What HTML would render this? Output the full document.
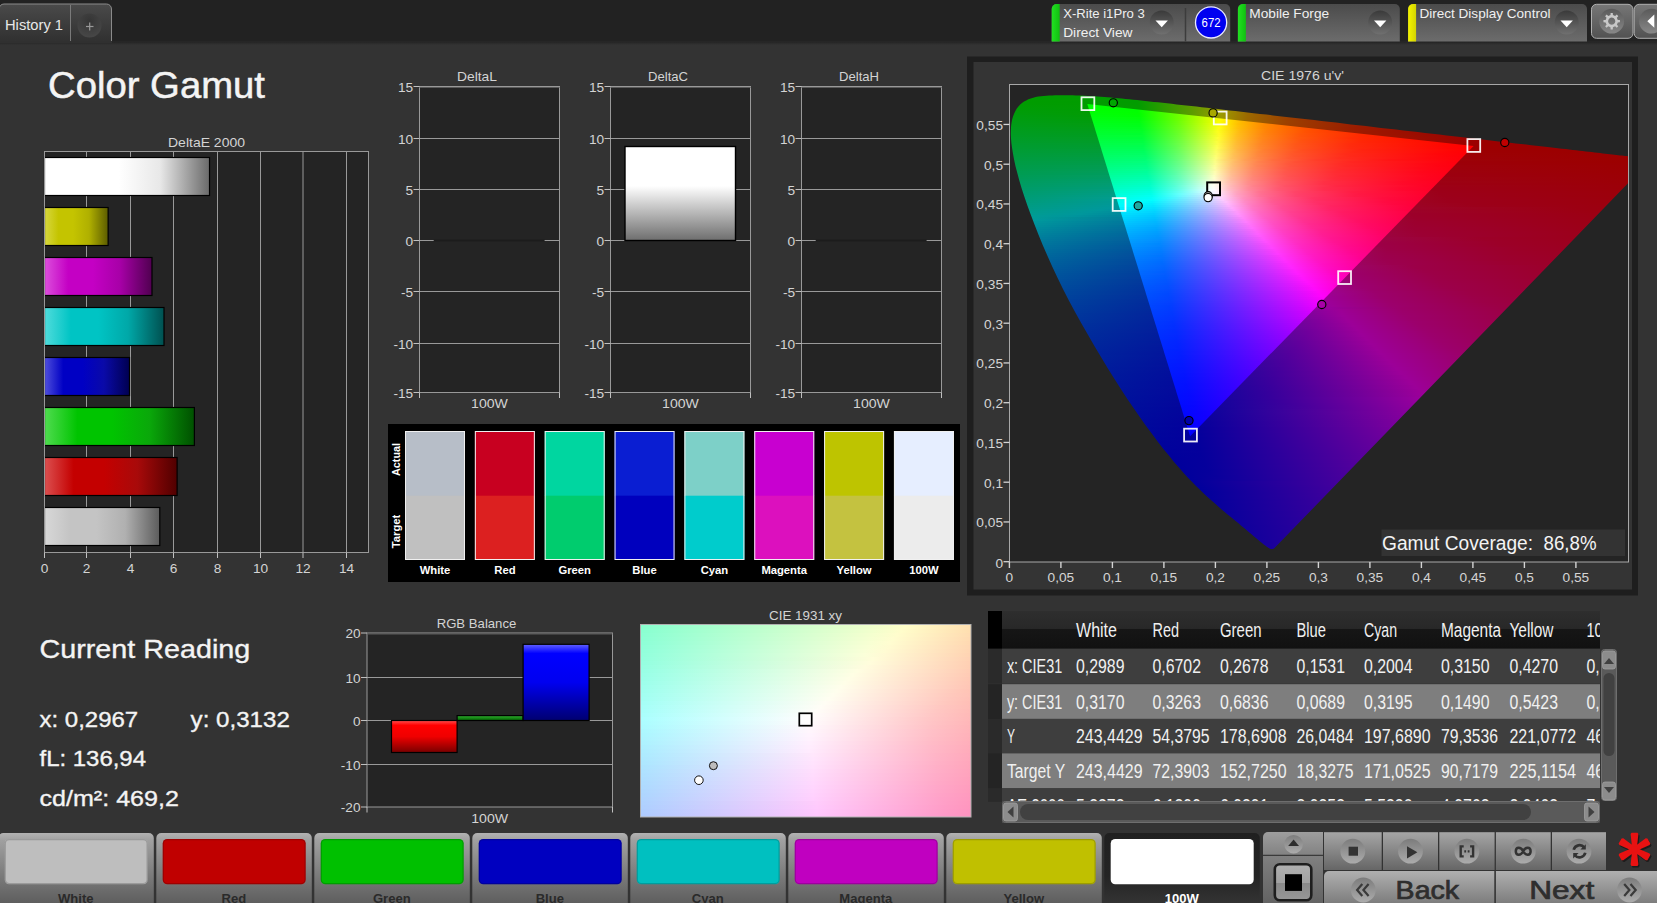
<!DOCTYPE html>
<html><head><meta charset="utf-8"><title>Color Gamut</title>
<style>html,body{margin:0;padding:0;background:#333;overflow:hidden}svg{display:block;font-family:"Liberation Sans",sans-serif}</style>
</head><body>
<svg width="1657" height="903" viewBox="0 0 1657 903">
<defs>
<linearGradient id="shd" x1="0" y1="0" x2="0" y2="1"><stop offset="0" stop-color="#222222"/><stop offset="1" stop-color="#333333"/></linearGradient>
<linearGradient id="tab" x1="0" y1="0" x2="0" y2="1"><stop offset="0" stop-color="#4a4a4a"/><stop offset="1" stop-color="#303030"/></linearGradient>
<radialGradient id="plusc" cx="0.5" cy="0.3" r="0.8"><stop offset="0" stop-color="#353535"/><stop offset="1" stop-color="#4a4a4a"/></radialGradient>
<linearGradient id="tb" x1="0" y1="0" x2="0" y2="1"><stop offset="0" stop-color="#4b4b4b"/><stop offset="1" stop-color="#6c6c6c"/></linearGradient>
<linearGradient id="dd" x1="0" y1="0" x2="0" y2="1"><stop offset="0" stop-color="#3a3a3a"/><stop offset="1" stop-color="#707070"/></linearGradient>
<linearGradient id="gbar" x1="0" y1="0" x2="1" y2="0"><stop offset="0" stop-color="#22e022"/><stop offset="1" stop-color="#10c010"/></linearGradient>
<linearGradient id="ybar" x1="0" y1="0" x2="1" y2="0"><stop offset="0" stop-color="#f4f400"/><stop offset="1" stop-color="#d4d400"/></linearGradient>
<linearGradient id="gb2" x1="0" y1="0" x2="0" y2="1"><stop offset="0" stop-color="#767676"/><stop offset="1" stop-color="#525252"/></linearGradient>
<linearGradient id="gc" x1="0" y1="0" x2="0" y2="1"><stop offset="0" stop-color="#5a5a5a"/><stop offset="1" stop-color="#888888"/></linearGradient>
<linearGradient id="bew" x1="0" y1="0" x2="1" y2="0"><stop offset="0" stop-color="#ffffff"/><stop offset="0.22" stop-color="#ffffff"/><stop offset="0.45" stop-color="#ffffff"/><stop offset="0.7" stop-color="#e8e8e8"/><stop offset="1" stop-color="#6a6a6a"/></linearGradient>
<linearGradient id="bey" x1="0" y1="0" x2="1" y2="0"><stop offset="0" stop-color="#d8d840"/><stop offset="0.22" stop-color="#c4c400"/><stop offset="0.45" stop-color="#c4c400"/><stop offset="0.7" stop-color="#b0b000"/><stop offset="1" stop-color="#5c5c00"/></linearGradient>
<linearGradient id="bem" x1="0" y1="0" x2="1" y2="0"><stop offset="0" stop-color="#dc50dc"/><stop offset="0.22" stop-color="#c400c4"/><stop offset="0.45" stop-color="#c400c4"/><stop offset="0.7" stop-color="#a800a8"/><stop offset="1" stop-color="#500050"/></linearGradient>
<linearGradient id="bec" x1="0" y1="0" x2="1" y2="0"><stop offset="0" stop-color="#50dcdc"/><stop offset="0.22" stop-color="#00c4c4"/><stop offset="0.45" stop-color="#00c4c4"/><stop offset="0.7" stop-color="#00a8a8"/><stop offset="1" stop-color="#005050"/></linearGradient>
<linearGradient id="beb" x1="0" y1="0" x2="1" y2="0"><stop offset="0" stop-color="#5050dc"/><stop offset="0.22" stop-color="#0000c4"/><stop offset="0.45" stop-color="#0000c4"/><stop offset="0.7" stop-color="#0a0aa8"/><stop offset="1" stop-color="#000050"/></linearGradient>
<linearGradient id="beg" x1="0" y1="0" x2="1" y2="0"><stop offset="0" stop-color="#50dc50"/><stop offset="0.22" stop-color="#00c400"/><stop offset="0.45" stop-color="#00c400"/><stop offset="0.7" stop-color="#0aa80a"/><stop offset="1" stop-color="#005000"/></linearGradient>
<linearGradient id="ber" x1="0" y1="0" x2="1" y2="0"><stop offset="0" stop-color="#dc5050"/><stop offset="0.22" stop-color="#c40000"/><stop offset="0.45" stop-color="#c40000"/><stop offset="0.7" stop-color="#a80a0a"/><stop offset="1" stop-color="#500000"/></linearGradient>
<linearGradient id="bes" x1="0" y1="0" x2="1" y2="0"><stop offset="0" stop-color="#d8d8d8"/><stop offset="0.22" stop-color="#c4c4c4"/><stop offset="0.45" stop-color="#c4c4c4"/><stop offset="0.7" stop-color="#b0b0b0"/><stop offset="1" stop-color="#5c5c5c"/></linearGradient>
<linearGradient id="dcb" x1="0" y1="0" x2="0" y2="1"><stop offset="0" stop-color="#ffffff"/><stop offset="0.42" stop-color="#ffffff"/><stop offset="1" stop-color="#6e6e6e"/></linearGradient>
<linearGradient id="a0" gradientUnits="userSpaceOnUse" x1="1035" x2="1105"><stop offset="0" stop-color="#009c00"/><stop offset="1" stop-color="#009c00"/></linearGradient><linearGradient id="a1" gradientUnits="userSpaceOnUse" x1="1028" x2="1127"><stop offset="0" stop-color="#009c00"/><stop offset="1" stop-color="#009c00"/></linearGradient><linearGradient id="a2" gradientUnits="userSpaceOnUse" x1="1024" x2="1147"><stop offset="0" stop-color="#009c00"/><stop offset="0.927" stop-color="#039c00"/><stop offset="1" stop-color="#109c00"/></linearGradient><linearGradient id="a3" gradientUnits="userSpaceOnUse" x1="1021" x2="1166"><stop offset="0" stop-color="#009c00"/><stop offset="0.8" stop-color="#019c00"/><stop offset="1" stop-color="#2e9c00"/></linearGradient><linearGradient id="a4" gradientUnits="userSpaceOnUse" x1="1018" x2="1184"><stop offset="0" stop-color="#009c01"/><stop offset="0.723" stop-color="#029c00"/><stop offset="1" stop-color="#4e9c00"/></linearGradient><linearGradient id="a5" gradientUnits="userSpaceOnUse" x1="1017" x2="1202"><stop offset="0" stop-color="#009c03"/><stop offset="0.659" stop-color="#039c00"/><stop offset="0.941" stop-color="#5b9c00"/><stop offset="1" stop-color="#719c00"/></linearGradient><linearGradient id="a6" gradientUnits="userSpaceOnUse" x1="1015" x2="1219"><stop offset="0" stop-color="#009c05"/><stop offset="0.608" stop-color="#039c00"/><stop offset="0.863" stop-color="#5b9c00"/><stop offset="1" stop-color="#979c00"/></linearGradient><linearGradient id="a7" gradientUnits="userSpaceOnUse" x1="1014" x2="1236"><stop offset="0" stop-color="#009c07"/><stop offset="0.559" stop-color="#019c00"/><stop offset="0.793" stop-color="#599c00"/><stop offset="0.937" stop-color="#9c9800"/><stop offset="1" stop-color="#9c7c00"/></linearGradient><linearGradient id="a8" gradientUnits="userSpaceOnUse" x1="1013" x2="1254"><stop offset="0" stop-color="#009c09"/><stop offset="0.523" stop-color="#029c00"/><stop offset="0.739" stop-color="#5b9c00"/><stop offset="0.863" stop-color="#9c9a00"/><stop offset="0.971" stop-color="#9c6b00"/><stop offset="1" stop-color="#9c6200"/></linearGradient><linearGradient id="a9" gradientUnits="userSpaceOnUse" x1="1012" x2="1271"><stop offset="0" stop-color="#009c0b"/><stop offset="0.494" stop-color="#039c00"/><stop offset="0.695" stop-color="#5d9c00"/><stop offset="0.803" stop-color="#9b9c00"/><stop offset="0.911" stop-color="#9c6900"/><stop offset="1" stop-color="#9c4f00"/></linearGradient><linearGradient id="a10" gradientUnits="userSpaceOnUse" x1="1011" x2="1288"><stop offset="0" stop-color="#009c0e"/><stop offset="0.462" stop-color="#019c02"/><stop offset="0.65" stop-color="#5b9c00"/><stop offset="0.758" stop-color="#9c9900"/><stop offset="0.852" stop-color="#9c6a00"/><stop offset="1" stop-color="#9c4000"/></linearGradient><linearGradient id="a11" gradientUnits="userSpaceOnUse" x1="1011" x2="1306"><stop offset="0" stop-color="#009c10"/><stop offset="0.441" stop-color="#039c04"/><stop offset="0.61" stop-color="#5b9c00"/><stop offset="0.712" stop-color="#9c9900"/><stop offset="0.8" stop-color="#9c6900"/><stop offset="0.942" stop-color="#9c3f00"/><stop offset="1" stop-color="#9c3400"/></linearGradient><linearGradient id="a12" gradientUnits="userSpaceOnUse" x1="1010" x2="1323"><stop offset="0" stop-color="#009c12"/><stop offset="0.415" stop-color="#019c07"/><stop offset="0.575" stop-color="#599c01"/><stop offset="0.671" stop-color="#9c9b00"/><stop offset="0.754" stop-color="#9c6a00"/><stop offset="0.882" stop-color="#9c4100"/><stop offset="1" stop-color="#9c2b00"/></linearGradient><linearGradient id="a13" gradientUnits="userSpaceOnUse" x1="1010" x2="1341"><stop offset="0" stop-color="#009c14"/><stop offset="0.393" stop-color="#019c0a"/><stop offset="0.544" stop-color="#599c04"/><stop offset="0.634" stop-color="#9c9a00"/><stop offset="0.713" stop-color="#9c6a00"/><stop offset="0.834" stop-color="#9c4100"/><stop offset="1" stop-color="#9c2300"/></linearGradient><linearGradient id="a14" gradientUnits="userSpaceOnUse" x1="1010" x2="1358"><stop offset="0" stop-color="#009c16"/><stop offset="0.379" stop-color="#049c0d"/><stop offset="0.523" stop-color="#5d9c07"/><stop offset="0.603" stop-color="#9c9a03"/><stop offset="0.678" stop-color="#9c6900"/><stop offset="0.793" stop-color="#9c4000"/><stop offset="0.994" stop-color="#9c1d00"/><stop offset="1" stop-color="#9c1c00"/></linearGradient><linearGradient id="a15" gradientUnits="userSpaceOnUse" x1="1010" x2="1375"><stop offset="0" stop-color="#009c18"/><stop offset="0.362" stop-color="#039c10"/><stop offset="0.499" stop-color="#5d9c0b"/><stop offset="0.575" stop-color="#9c9907"/><stop offset="0.647" stop-color="#9c6902"/><stop offset="0.756" stop-color="#9c4000"/><stop offset="0.948" stop-color="#9c1d00"/><stop offset="1" stop-color="#9c1700"/></linearGradient><linearGradient id="a16" gradientUnits="userSpaceOnUse" x1="1010" x2="1392"><stop offset="0" stop-color="#009c1b"/><stop offset="0.346" stop-color="#039c13"/><stop offset="0.476" stop-color="#5d9c0e"/><stop offset="0.55" stop-color="#9c990b"/><stop offset="0.618" stop-color="#9c6805"/><stop offset="0.723" stop-color="#9c3f00"/><stop offset="0.906" stop-color="#9c1c00"/><stop offset="1" stop-color="#9c1200"/></linearGradient><linearGradient id="a17" gradientUnits="userSpaceOnUse" x1="1010" x2="1410"><stop offset="0" stop-color="#009c1d"/><stop offset="0.33" stop-color="#029c16"/><stop offset="0.45" stop-color="#599c12"/><stop offset="0.525" stop-color="#9c980e"/><stop offset="0.59" stop-color="#9c6807"/><stop offset="0.69" stop-color="#9c3f02"/><stop offset="0.865" stop-color="#9c1c00"/><stop offset="1" stop-color="#9c0d00"/></linearGradient><linearGradient id="a18" gradientUnits="userSpaceOnUse" x1="1010" x2="1427"><stop offset="0" stop-color="#009c1f"/><stop offset="0.317" stop-color="#029c19"/><stop offset="0.432" stop-color="#599c15"/><stop offset="0.504" stop-color="#9c9812"/><stop offset="0.566" stop-color="#9c670a"/><stop offset="0.662" stop-color="#9c3e04"/><stop offset="0.83" stop-color="#9c1b00"/><stop offset="1" stop-color="#9c0900"/></linearGradient><linearGradient id="a19" gradientUnits="userSpaceOnUse" x1="1010" x2="1444"><stop offset="0" stop-color="#009c21"/><stop offset="0.304" stop-color="#019c1c"/><stop offset="0.415" stop-color="#599c19"/><stop offset="0.479" stop-color="#9b9c16"/><stop offset="0.539" stop-color="#9c690d"/><stop offset="0.631" stop-color="#9c3f06"/><stop offset="0.788" stop-color="#9c1c00"/><stop offset="1" stop-color="#9c0600"/></linearGradient><linearGradient id="a20" gradientUnits="userSpaceOnUse" x1="1010" x2="1462"><stop offset="0" stop-color="#009c23"/><stop offset="0.292" stop-color="#019c1f"/><stop offset="0.398" stop-color="#599c1c"/><stop offset="0.46" stop-color="#9b9c1a"/><stop offset="0.513" stop-color="#9c6c11"/><stop offset="0.597" stop-color="#9c4209"/><stop offset="0.743" stop-color="#9c1e01"/><stop offset="1" stop-color="#9c0300"/></linearGradient><linearGradient id="a21" gradientUnits="userSpaceOnUse" x1="1010" x2="1479"><stop offset="0" stop-color="#009c26"/><stop offset="0.286" stop-color="#039c22"/><stop offset="0.388" stop-color="#5d9c20"/><stop offset="0.443" stop-color="#9c9b1e"/><stop offset="0.495" stop-color="#9c6b14"/><stop offset="0.576" stop-color="#9c410b"/><stop offset="0.716" stop-color="#9c1e03"/><stop offset="0.989" stop-color="#9c0100"/><stop offset="1" stop-color="#9c0000"/></linearGradient><linearGradient id="a22" gradientUnits="userSpaceOnUse" x1="1010" x2="1497"><stop offset="0" stop-color="#009c28"/><stop offset="0.275" stop-color="#039c25"/><stop offset="0.374" stop-color="#5d9c24"/><stop offset="0.427" stop-color="#9c9b22"/><stop offset="0.476" stop-color="#9c6b17"/><stop offset="0.554" stop-color="#9c410d"/><stop offset="0.69" stop-color="#9c1d04"/><stop offset="0.953" stop-color="#9c0100"/><stop offset="1" stop-color="#9c0000"/></linearGradient><linearGradient id="a23" gradientUnits="userSpaceOnUse" x1="1010" x2="1514"><stop offset="0" stop-color="#009c2a"/><stop offset="0.266" stop-color="#029c28"/><stop offset="0.357" stop-color="#599c27"/><stop offset="0.413" stop-color="#9c9a26"/><stop offset="0.46" stop-color="#9c6a1a"/><stop offset="0.536" stop-color="#9c410f"/><stop offset="0.667" stop-color="#9c1d06"/><stop offset="0.921" stop-color="#9c0000"/><stop offset="1" stop-color="#9c0000"/></linearGradient><linearGradient id="a24" gradientUnits="userSpaceOnUse" x1="1010" x2="1531"><stop offset="0" stop-color="#009c2d"/><stop offset="0.257" stop-color="#029c2c"/><stop offset="0.345" stop-color="#599c2b"/><stop offset="0.399" stop-color="#9c9a2a"/><stop offset="0.445" stop-color="#9c6a1d"/><stop offset="0.518" stop-color="#9c4011"/><stop offset="0.645" stop-color="#9c1d07"/><stop offset="0.891" stop-color="#9c0000"/><stop offset="1" stop-color="#9c0000"/></linearGradient><linearGradient id="a25" gradientUnits="userSpaceOnUse" x1="1010" x2="1549"><stop offset="0" stop-color="#009c2f"/><stop offset="0.249" stop-color="#019c2f"/><stop offset="0.334" stop-color="#599c2f"/><stop offset="0.386" stop-color="#9c992e"/><stop offset="0.43" stop-color="#9c6920"/><stop offset="0.501" stop-color="#9c4013"/><stop offset="0.623" stop-color="#9c1c09"/><stop offset="0.861" stop-color="#9c0000"/><stop offset="1" stop-color="#9c0000"/></linearGradient><linearGradient id="a26" gradientUnits="userSpaceOnUse" x1="1010" x2="1566"><stop offset="0" stop-color="#009c31"/><stop offset="0.241" stop-color="#019c32"/><stop offset="0.324" stop-color="#599c33"/><stop offset="0.374" stop-color="#9c9932"/><stop offset="0.417" stop-color="#9c6923"/><stop offset="0.486" stop-color="#9c3f15"/><stop offset="0.604" stop-color="#9c1c0a"/><stop offset="0.831" stop-color="#9c0001"/><stop offset="1" stop-color="#9c0000"/></linearGradient><linearGradient id="a27" gradientUnits="userSpaceOnUse" x1="1011" x2="1583"><stop offset="0" stop-color="#009c34"/><stop offset="0.234" stop-color="#029c36"/><stop offset="0.315" stop-color="#5b9c37"/><stop offset="0.36" stop-color="#9c9b37"/><stop offset="0.402" stop-color="#9c6a26"/><stop offset="0.469" stop-color="#9c3f18"/><stop offset="0.58" stop-color="#9c1d0c"/><stop offset="0.801" stop-color="#9c0002"/><stop offset="1" stop-color="#9c0000"/></linearGradient><linearGradient id="a28" gradientUnits="userSpaceOnUse" x1="1011" x2="1601"><stop offset="0" stop-color="#009c36"/><stop offset="0.227" stop-color="#019c39"/><stop offset="0.305" stop-color="#5b9c3b"/><stop offset="0.349" stop-color="#9c9b3c"/><stop offset="0.39" stop-color="#9c6929"/><stop offset="0.454" stop-color="#9c3f1a"/><stop offset="0.563" stop-color="#9c1c0d"/><stop offset="0.773" stop-color="#9c0003"/><stop offset="1" stop-color="#9c0000"/></linearGradient><linearGradient id="a29" gradientUnits="userSpaceOnUse" x1="1011" x2="1618"><stop offset="0" stop-color="#009c39"/><stop offset="0.221" stop-color="#019c3d"/><stop offset="0.297" stop-color="#5b9c3f"/><stop offset="0.339" stop-color="#9c9a40"/><stop offset="0.376" stop-color="#9c6c2e"/><stop offset="0.435" stop-color="#9c421d"/><stop offset="0.537" stop-color="#9c1e10"/><stop offset="0.735" stop-color="#9c0104"/><stop offset="1" stop-color="#9c0000"/></linearGradient><linearGradient id="a30" gradientUnits="userSpaceOnUse" x1="1012" x2="1628"><stop offset="0" stop-color="#009c3b"/><stop offset="0.218" stop-color="#029c40"/><stop offset="0.289" stop-color="#599c43"/><stop offset="0.331" stop-color="#9b9c45"/><stop offset="0.37" stop-color="#9c6a30"/><stop offset="0.429" stop-color="#9c401f"/><stop offset="0.529" stop-color="#9c1d11"/><stop offset="0.727" stop-color="#9c0105"/><stop offset="1" stop-color="#9c0000"/></linearGradient><linearGradient id="a31" gradientUnits="userSpaceOnUse" x1="1012" x2="1628"><stop offset="0" stop-color="#009c3e"/><stop offset="0.218" stop-color="#019c44"/><stop offset="0.289" stop-color="#599c47"/><stop offset="0.331" stop-color="#9b9c4a"/><stop offset="0.367" stop-color="#9c6c35"/><stop offset="0.425" stop-color="#9c4122"/><stop offset="0.523" stop-color="#9c1e13"/><stop offset="0.714" stop-color="#9c0107"/><stop offset="1" stop-color="#9c0000"/></linearGradient><linearGradient id="a32" gradientUnits="userSpaceOnUse" x1="1012" x2="1628"><stop offset="0" stop-color="#009c40"/><stop offset="0.218" stop-color="#019c47"/><stop offset="0.289" stop-color="#599c4b"/><stop offset="0.331" stop-color="#9c9b4e"/><stop offset="0.367" stop-color="#9c6c38"/><stop offset="0.422" stop-color="#9c4326"/><stop offset="0.519" stop-color="#9c1f15"/><stop offset="0.708" stop-color="#9c0208"/><stop offset="1" stop-color="#9c0000"/></linearGradient><linearGradient id="a33" gradientUnits="userSpaceOnUse" x1="1013" x2="1628"><stop offset="0" stop-color="#009c43"/><stop offset="0.218" stop-color="#029c4b"/><stop offset="0.289" stop-color="#5b9c50"/><stop offset="0.332" stop-color="#9c9851"/><stop offset="0.367" stop-color="#9c693b"/><stop offset="0.426" stop-color="#9c4027"/><stop offset="0.527" stop-color="#9c1c16"/><stop offset="0.722" stop-color="#9c0008"/><stop offset="1" stop-color="#9c0000"/></linearGradient><linearGradient id="a34" gradientUnits="userSpaceOnUse" x1="1013" x2="1628"><stop offset="0" stop-color="#009c45"/><stop offset="0.218" stop-color="#019c4f"/><stop offset="0.289" stop-color="#5b9c54"/><stop offset="0.328" stop-color="#9a9c58"/><stop offset="0.367" stop-color="#9c693e"/><stop offset="0.426" stop-color="#9c3f29"/><stop offset="0.527" stop-color="#9c1c17"/><stop offset="0.722" stop-color="#9c0009"/><stop offset="1" stop-color="#9c0001"/></linearGradient><linearGradient id="a35" gradientUnits="userSpaceOnUse" x1="1014" x2="1628"><stop offset="0" stop-color="#009c48"/><stop offset="0.218" stop-color="#039c53"/><stop offset="0.287" stop-color="#599c58"/><stop offset="0.329" stop-color="#9c9a5c"/><stop offset="0.365" stop-color="#9c6a42"/><stop offset="0.42" stop-color="#9c412d"/><stop offset="0.518" stop-color="#9c1e1a"/><stop offset="0.707" stop-color="#9c010b"/><stop offset="1" stop-color="#9c0002"/></linearGradient><linearGradient id="a36" gradientUnits="userSpaceOnUse" x1="1014" x2="1628"><stop offset="0" stop-color="#009c4a"/><stop offset="0.218" stop-color="#029c56"/><stop offset="0.287" stop-color="#599c5d"/><stop offset="0.329" stop-color="#9c9960"/><stop offset="0.365" stop-color="#9c6946"/><stop offset="0.42" stop-color="#9c412f"/><stop offset="0.518" stop-color="#9c1d1b"/><stop offset="0.707" stop-color="#9c010c"/><stop offset="1" stop-color="#9c0002"/></linearGradient><linearGradient id="a37" gradientUnits="userSpaceOnUse" x1="1015" x2="1628"><stop offset="0" stop-color="#009c4d"/><stop offset="0.219" stop-color="#039c5a"/><stop offset="0.287" stop-color="#5b9c61"/><stop offset="0.326" stop-color="#9c9b67"/><stop offset="0.362" stop-color="#9c6a4a"/><stop offset="0.418" stop-color="#9c4132"/><stop offset="0.512" stop-color="#9c1e1e"/><stop offset="0.698" stop-color="#9c010d"/><stop offset="1" stop-color="#9c0003"/></linearGradient><linearGradient id="a38" gradientUnits="userSpaceOnUse" x1="1015" x2="1628"><stop offset="0" stop-color="#009c50"/><stop offset="0.219" stop-color="#039c5e"/><stop offset="0.287" stop-color="#5b9c66"/><stop offset="0.326" stop-color="#9c9b6b"/><stop offset="0.362" stop-color="#9c6a4e"/><stop offset="0.418" stop-color="#9c4035"/><stop offset="0.512" stop-color="#9c1d1f"/><stop offset="0.698" stop-color="#9c010e"/><stop offset="1" stop-color="#9c0003"/></linearGradient><linearGradient id="a39" gradientUnits="userSpaceOnUse" x1="1016" x2="1628"><stop offset="0" stop-color="#009c52"/><stop offset="0.216" stop-color="#009c62"/><stop offset="0.284" stop-color="#599c6b"/><stop offset="0.324" stop-color="#9a9c71"/><stop offset="0.363" stop-color="#9c6850"/><stop offset="0.418" stop-color="#9c3f36"/><stop offset="0.516" stop-color="#9c1c20"/><stop offset="0.703" stop-color="#9c000f"/><stop offset="1" stop-color="#9c0004"/></linearGradient><linearGradient id="a40" gradientUnits="userSpaceOnUse" x1="1016" x2="1628"><stop offset="0" stop-color="#009c55"/><stop offset="0.219" stop-color="#049c67"/><stop offset="0.288" stop-color="#5e9c70"/><stop offset="0.324" stop-color="#9a9c76"/><stop offset="0.359" stop-color="#9c6a56"/><stop offset="0.415" stop-color="#9c403a"/><stop offset="0.51" stop-color="#9c1d23"/><stop offset="0.696" stop-color="#9c0010"/><stop offset="1" stop-color="#9c0005"/></linearGradient><linearGradient id="a41" gradientUnits="userSpaceOnUse" x1="1017" x2="1628"><stop offset="0" stop-color="#009c58"/><stop offset="0.216" stop-color="#019c6a"/><stop offset="0.285" stop-color="#5b9c74"/><stop offset="0.324" stop-color="#9c997a"/><stop offset="0.357" stop-color="#9c6b5b"/><stop offset="0.409" stop-color="#9c423f"/><stop offset="0.501" stop-color="#9c1f26"/><stop offset="0.678" stop-color="#9c0212"/><stop offset="1" stop-color="#9c0005"/></linearGradient><linearGradient id="a42" gradientUnits="userSpaceOnUse" x1="1017" x2="1628"><stop offset="0" stop-color="#009c5b"/><stop offset="0.216" stop-color="#019c6f"/><stop offset="0.282" stop-color="#569c79"/><stop offset="0.324" stop-color="#9c997f"/><stop offset="0.357" stop-color="#9c6b5e"/><stop offset="0.409" stop-color="#9c4241"/><stop offset="0.501" stop-color="#9c1e28"/><stop offset="0.678" stop-color="#9c0113"/><stop offset="1" stop-color="#9c0006"/></linearGradient><linearGradient id="a43" gradientUnits="userSpaceOnUse" x1="1018" x2="1628"><stop offset="0" stop-color="#009c5e"/><stop offset="0.216" stop-color="#029c73"/><stop offset="0.282" stop-color="#599c7e"/><stop offset="0.321" stop-color="#9c9b86"/><stop offset="0.354" stop-color="#9c6c63"/><stop offset="0.407" stop-color="#9c4244"/><stop offset="0.495" stop-color="#9c1f2b"/><stop offset="0.669" stop-color="#9c0215"/><stop offset="1" stop-color="#9c0006"/></linearGradient><linearGradient id="a44" gradientUnits="userSpaceOnUse" x1="1019" x2="1628"><stop offset="0" stop-color="#009c61"/><stop offset="0.217" stop-color="#039c78"/><stop offset="0.282" stop-color="#5b9c83"/><stop offset="0.319" stop-color="#999c8c"/><stop offset="0.358" stop-color="#9c6663"/><stop offset="0.414" stop-color="#9c3d44"/><stop offset="0.512" stop-color="#9c1a29"/><stop offset="0.693" stop-color="#9c0014"/><stop offset="1" stop-color="#9c0007"/></linearGradient><linearGradient id="a45" gradientUnits="userSpaceOnUse" x1="1019" x2="1628"><stop offset="0" stop-color="#009c63"/><stop offset="0.217" stop-color="#029c7c"/><stop offset="0.282" stop-color="#5b9c89"/><stop offset="0.319" stop-color="#9a9c92"/><stop offset="0.355" stop-color="#9c696a"/><stop offset="0.407" stop-color="#9c4049"/><stop offset="0.499" stop-color="#9c1d2d"/><stop offset="0.677" stop-color="#9c0117"/><stop offset="1" stop-color="#9c0008"/></linearGradient><linearGradient id="a46" gradientUnits="userSpaceOnUse" x1="1020" x2="1626"><stop offset="0" stop-color="#009c67"/><stop offset="0.215" stop-color="#009c80"/><stop offset="0.281" stop-color="#599c8d"/><stop offset="0.32" stop-color="#9c9996"/><stop offset="0.353" stop-color="#9c6a6f"/><stop offset="0.406" stop-color="#9c404c"/><stop offset="0.498" stop-color="#9c1d2f"/><stop offset="0.677" stop-color="#9c0018"/><stop offset="1" stop-color="#9c0008"/></linearGradient><linearGradient id="a47" gradientUnits="userSpaceOnUse" x1="1020" x2="1624"><stop offset="0" stop-color="#009c69"/><stop offset="0.219" stop-color="#039c85"/><stop offset="0.281" stop-color="#599c93"/><stop offset="0.321" stop-color="#9c999b"/><stop offset="0.354" stop-color="#9c6973"/><stop offset="0.407" stop-color="#9c404f"/><stop offset="0.5" stop-color="#9c1c31"/><stop offset="0.679" stop-color="#9c0019"/><stop offset="1" stop-color="#9c0009"/></linearGradient><linearGradient id="a48" gradientUnits="userSpaceOnUse" x1="1021" x2="1622"><stop offset="0" stop-color="#009c6d"/><stop offset="0.216" stop-color="#019c89"/><stop offset="0.28" stop-color="#569c98"/><stop offset="0.323" stop-color="#9a939c"/><stop offset="0.363" stop-color="#9c606f"/><stop offset="0.423" stop-color="#9c374b"/><stop offset="0.526" stop-color="#9c162e"/><stop offset="0.696" stop-color="#9c0019"/><stop offset="1" stop-color="#9c000a"/></linearGradient><linearGradient id="a49" gradientUnits="userSpaceOnUse" x1="1022" x2="1620"><stop offset="0" stop-color="#009c70"/><stop offset="0.217" stop-color="#029c8e"/><stop offset="0.291" stop-color="#66979c"/><stop offset="0.328" stop-color="#9c8c9b"/><stop offset="0.365" stop-color="#9c5e71"/><stop offset="0.425" stop-color="#9c364d"/><stop offset="0.532" stop-color="#9c152e"/><stop offset="0.699" stop-color="#9c001a"/><stop offset="1" stop-color="#9c000b"/></linearGradient><linearGradient id="a50" gradientUnits="userSpaceOnUse" x1="1022" x2="1618"><stop offset="0" stop-color="#009c73"/><stop offset="0.218" stop-color="#019c93"/><stop offset="0.275" stop-color="#4c969c"/><stop offset="0.332" stop-color="#9c869b"/><stop offset="0.372" stop-color="#9c586f"/><stop offset="0.436" stop-color="#9c314b"/><stop offset="0.554" stop-color="#9c102c"/><stop offset="0.708" stop-color="#9c001a"/><stop offset="1" stop-color="#9c000b"/></linearGradient><linearGradient id="a51" gradientUnits="userSpaceOnUse" x1="1023" x2="1616"><stop offset="0" stop-color="#009c76"/><stop offset="0.219" stop-color="#039c98"/><stop offset="0.334" stop-color="#9a819c"/><stop offset="0.381" stop-color="#9c506c"/><stop offset="0.452" stop-color="#9c2a48"/><stop offset="0.583" stop-color="#9c0b29"/><stop offset="0.715" stop-color="#9c001b"/><stop offset="1" stop-color="#9c000c"/></linearGradient><linearGradient id="a52" gradientUnits="userSpaceOnUse" x1="1024" x2="1614"><stop offset="0" stop-color="#009c79"/><stop offset="0.217" stop-color="#009b9c"/><stop offset="0.339" stop-color="#9c7b9b"/><stop offset="0.383" stop-color="#9c4e6e"/><stop offset="0.454" stop-color="#9c2949"/><stop offset="0.586" stop-color="#9c0a2a"/><stop offset="0.715" stop-color="#9c001c"/><stop offset="1" stop-color="#9c000d"/></linearGradient><linearGradient id="a53" gradientUnits="userSpaceOnUse" x1="1024" x2="1612"><stop offset="0" stop-color="#009c7c"/><stop offset="0.207" stop-color="#00989c"/><stop offset="0.221" stop-color="#03959c"/><stop offset="0.344" stop-color="#9c759b"/><stop offset="0.388" stop-color="#9c4b6f"/><stop offset="0.463" stop-color="#9c2649"/><stop offset="0.599" stop-color="#9c092a"/><stop offset="0.721" stop-color="#9c001c"/><stop offset="1" stop-color="#9c000d"/></linearGradient><linearGradient id="a54" gradientUnits="userSpaceOnUse" x1="1025" x2="1610"><stop offset="0" stop-color="#009c80"/><stop offset="0.188" stop-color="#00989c"/><stop offset="0.219" stop-color="#01919c"/><stop offset="0.349" stop-color="#9c6e99"/><stop offset="0.397" stop-color="#9c456c"/><stop offset="0.475" stop-color="#9c2247"/><stop offset="0.622" stop-color="#9c0528"/><stop offset="0.762" stop-color="#9c001a"/><stop offset="1" stop-color="#9c000e"/></linearGradient><linearGradient id="a55" gradientUnits="userSpaceOnUse" x1="1026" x2="1608"><stop offset="0" stop-color="#009c83"/><stop offset="0.168" stop-color="#00989c"/><stop offset="0.22" stop-color="#028c9c"/><stop offset="0.351" stop-color="#9c6c9b"/><stop offset="0.399" stop-color="#9c436e"/><stop offset="0.478" stop-color="#9c2149"/><stop offset="0.622" stop-color="#9c052a"/><stop offset="0.77" stop-color="#9c001b"/><stop offset="1" stop-color="#9c000f"/></linearGradient><linearGradient id="a56" gradientUnits="userSpaceOnUse" x1="1026" x2="1606"><stop offset="0" stop-color="#009c86"/><stop offset="0.148" stop-color="#00989c"/><stop offset="0.221" stop-color="#01889c"/><stop offset="0.355" stop-color="#9c679b"/><stop offset="0.403" stop-color="#9c406f"/><stop offset="0.483" stop-color="#9c1f49"/><stop offset="0.631" stop-color="#9c042a"/><stop offset="0.952" stop-color="#9c0012"/><stop offset="1" stop-color="#9c0010"/></linearGradient><linearGradient id="a57" gradientUnits="userSpaceOnUse" x1="1027" x2="1605"><stop offset="0" stop-color="#009c8a"/><stop offset="0.128" stop-color="#00989c"/><stop offset="0.221" stop-color="#03849c"/><stop offset="0.36" stop-color="#9c6199"/><stop offset="0.408" stop-color="#9c3d6e"/><stop offset="0.491" stop-color="#9c1d49"/><stop offset="0.644" stop-color="#9c022a"/><stop offset="0.976" stop-color="#9c0011"/><stop offset="1" stop-color="#9c0011"/></linearGradient><linearGradient id="a58" gradientUnits="userSpaceOnUse" x1="1028" x2="1603"><stop offset="0" stop-color="#009c8d"/><stop offset="0.108" stop-color="#00979c"/><stop offset="0.223" stop-color="#04809c"/><stop offset="0.362" stop-color="#9c5f9b"/><stop offset="0.41" stop-color="#9c3b70"/><stop offset="0.494" stop-color="#9c1c4a"/><stop offset="0.647" stop-color="#9c022b"/><stop offset="0.977" stop-color="#9c0012"/><stop offset="1" stop-color="#9c0011"/></linearGradient><linearGradient id="a59" gradientUnits="userSpaceOnUse" x1="1029" x2="1601"><stop offset="0" stop-color="#009c91"/><stop offset="0.091" stop-color="#00979c"/><stop offset="0.22" stop-color="#017d9c"/><stop offset="0.367" stop-color="#9c5999"/><stop offset="0.42" stop-color="#9c366e"/><stop offset="0.507" stop-color="#9c1848"/><stop offset="0.668" stop-color="#9c002a"/><stop offset="1" stop-color="#9c0012"/></linearGradient><linearGradient id="a60" gradientUnits="userSpaceOnUse" x1="1029" x2="1599"><stop offset="0" stop-color="#009c95"/><stop offset="0.077" stop-color="#00959c"/><stop offset="0.221" stop-color="#01799c"/><stop offset="0.372" stop-color="#9c5599"/><stop offset="0.425" stop-color="#9c346e"/><stop offset="0.512" stop-color="#9c1749"/><stop offset="0.674" stop-color="#9c002a"/><stop offset="1" stop-color="#9c0013"/></linearGradient><linearGradient id="a61" gradientUnits="userSpaceOnUse" x1="1030" x2="1597"><stop offset="0" stop-color="#009c98"/><stop offset="0.222" stop-color="#02769c"/><stop offset="0.374" stop-color="#9c539b"/><stop offset="0.427" stop-color="#9c3270"/><stop offset="0.515" stop-color="#9c164a"/><stop offset="0.677" stop-color="#9c002b"/><stop offset="1" stop-color="#9c0014"/></linearGradient><linearGradient id="a62" gradientUnits="userSpaceOnUse" x1="1031" x2="1595"><stop offset="0" stop-color="#009b9c"/><stop offset="0.223" stop-color="#03729c"/><stop offset="0.379" stop-color="#9c4e99"/><stop offset="0.436" stop-color="#9c2e6e"/><stop offset="0.532" stop-color="#9c1248"/><stop offset="0.684" stop-color="#9c002c"/><stop offset="1" stop-color="#9c0015"/></linearGradient><linearGradient id="a63" gradientUnits="userSpaceOnUse" x1="1032" x2="1593"><stop offset="0" stop-color="#00979c"/><stop offset="0.221" stop-color="#016f9c"/><stop offset="0.381" stop-color="#9c4c9b"/><stop offset="0.439" stop-color="#9c2c6f"/><stop offset="0.535" stop-color="#9c1149"/><stop offset="0.681" stop-color="#9c002e"/><stop offset="1" stop-color="#9c0015"/></linearGradient><linearGradient id="a64" gradientUnits="userSpaceOnUse" x1="1032" x2="1591"><stop offset="0" stop-color="#00949c"/><stop offset="0.225" stop-color="#036c9c"/><stop offset="0.386" stop-color="#9c499b"/><stop offset="0.444" stop-color="#9c2a70"/><stop offset="0.54" stop-color="#9c104a"/><stop offset="0.683" stop-color="#9c002f"/><stop offset="1" stop-color="#9c0016"/></linearGradient><linearGradient id="a65" gradientUnits="userSpaceOnUse" x1="1033" x2="1589"><stop offset="0" stop-color="#00919c"/><stop offset="0.223" stop-color="#01699c"/><stop offset="0.392" stop-color="#9c4499"/><stop offset="0.453" stop-color="#9c266d"/><stop offset="0.554" stop-color="#9c0d48"/><stop offset="0.687" stop-color="#9c0030"/><stop offset="1" stop-color="#9c0017"/></linearGradient><linearGradient id="a66" gradientUnits="userSpaceOnUse" x1="1034" x2="1587"><stop offset="0" stop-color="#008d9c"/><stop offset="0.224" stop-color="#02669c"/><stop offset="0.394" stop-color="#9c429b"/><stop offset="0.456" stop-color="#9c256f"/><stop offset="0.557" stop-color="#9c0c49"/><stop offset="0.684" stop-color="#9c0032"/><stop offset="1" stop-color="#9c0018"/></linearGradient><linearGradient id="a67" gradientUnits="userSpaceOnUse" x1="1035" x2="1585"><stop offset="0" stop-color="#008a9c"/><stop offset="0.225" stop-color="#03639c"/><stop offset="0.4" stop-color="#9c3e9a"/><stop offset="0.465" stop-color="#9c226d"/><stop offset="0.575" stop-color="#9c0947"/><stop offset="0.691" stop-color="#9c0032"/><stop offset="1" stop-color="#9c0019"/></linearGradient><linearGradient id="a68" gradientUnits="userSpaceOnUse" x1="1036" x2="1583"><stop offset="0" stop-color="#00879c"/><stop offset="0.223" stop-color="#01619c"/><stop offset="0.406" stop-color="#9c3b98"/><stop offset="0.472" stop-color="#9c1f6c"/><stop offset="0.581" stop-color="#9c0847"/><stop offset="0.695" stop-color="#9c0033"/><stop offset="1" stop-color="#9c001a"/></linearGradient><linearGradient id="a69" gradientUnits="userSpaceOnUse" x1="1036" x2="1581"><stop offset="0" stop-color="#00849c"/><stop offset="0.224" stop-color="#015e9c"/><stop offset="0.411" stop-color="#9c3898"/><stop offset="0.477" stop-color="#9c1e6d"/><stop offset="0.591" stop-color="#9c0747"/><stop offset="0.705" stop-color="#9c0033"/><stop offset="1" stop-color="#9c001b"/></linearGradient><linearGradient id="a70" gradientUnits="userSpaceOnUse" x1="1037" x2="1579"><stop offset="0" stop-color="#00819c"/><stop offset="0.225" stop-color="#025c9c"/><stop offset="0.413" stop-color="#9c369a"/><stop offset="0.48" stop-color="#9c1d6e"/><stop offset="0.59" stop-color="#9c0649"/><stop offset="0.708" stop-color="#9c0034"/><stop offset="1" stop-color="#9c001b"/></linearGradient><linearGradient id="a71" gradientUnits="userSpaceOnUse" x1="1038" x2="1577"><stop offset="0" stop-color="#007e9c"/><stop offset="0.226" stop-color="#03599c"/><stop offset="0.419" stop-color="#9c3398"/><stop offset="0.49" stop-color="#9c196c"/><stop offset="0.609" stop-color="#9c0447"/><stop offset="0.827" stop-color="#9c0028"/><stop offset="1" stop-color="#9c001c"/></linearGradient><linearGradient id="a72" gradientUnits="userSpaceOnUse" x1="1039" x2="1575"><stop offset="0" stop-color="#007b9c"/><stop offset="0.228" stop-color="#04579c"/><stop offset="0.422" stop-color="#9c319a"/><stop offset="0.493" stop-color="#9c186e"/><stop offset="0.612" stop-color="#9c0348"/><stop offset="0.832" stop-color="#9c0029"/><stop offset="1" stop-color="#9c001d"/></linearGradient><linearGradient id="a73" gradientUnits="userSpaceOnUse" x1="1040" x2="1574"><stop offset="0" stop-color="#00789c"/><stop offset="0.225" stop-color="#02559c"/><stop offset="0.427" stop-color="#9c2e98"/><stop offset="0.502" stop-color="#9c166c"/><stop offset="0.625" stop-color="#9c0147"/><stop offset="0.858" stop-color="#9c0028"/><stop offset="1" stop-color="#9c001e"/></linearGradient><linearGradient id="a74" gradientUnits="userSpaceOnUse" x1="1040" x2="1572"><stop offset="0" stop-color="#00769c"/><stop offset="0.226" stop-color="#01539c"/><stop offset="0.432" stop-color="#9c2c98"/><stop offset="0.508" stop-color="#9c146c"/><stop offset="0.632" stop-color="#9c0047"/><stop offset="0.865" stop-color="#9c0028"/><stop offset="1" stop-color="#9c001f"/></linearGradient><linearGradient id="a75" gradientUnits="userSpaceOnUse" x1="1041" x2="1570"><stop offset="0" stop-color="#00739c"/><stop offset="0.227" stop-color="#02509c"/><stop offset="0.435" stop-color="#9c2a9a"/><stop offset="0.51" stop-color="#9c136e"/><stop offset="0.635" stop-color="#9c0048"/><stop offset="0.87" stop-color="#9c0029"/><stop offset="1" stop-color="#9c0020"/></linearGradient><linearGradient id="a76" gradientUnits="userSpaceOnUse" x1="1042" x2="1568"><stop offset="0" stop-color="#00719c"/><stop offset="0.228" stop-color="#034e9c"/><stop offset="0.441" stop-color="#9c2798"/><stop offset="0.521" stop-color="#9c116c"/><stop offset="0.654" stop-color="#9c0046"/><stop offset="0.901" stop-color="#9c0028"/><stop offset="1" stop-color="#9c0021"/></linearGradient><linearGradient id="a77" gradientUnits="userSpaceOnUse" x1="1043" x2="1566"><stop offset="0" stop-color="#006e9c"/><stop offset="0.226" stop-color="#014d9c"/><stop offset="0.444" stop-color="#9c269a"/><stop offset="0.524" stop-color="#9c106d"/><stop offset="0.658" stop-color="#9c0047"/><stop offset="0.906" stop-color="#9c0028"/><stop offset="1" stop-color="#9c0022"/></linearGradient><linearGradient id="a78" gradientUnits="userSpaceOnUse" x1="1044" x2="1564"><stop offset="0" stop-color="#006c9c"/><stop offset="0.227" stop-color="#024a9c"/><stop offset="0.45" stop-color="#9c2399"/><stop offset="0.531" stop-color="#9c0e6d"/><stop offset="0.658" stop-color="#9c0049"/><stop offset="0.9" stop-color="#9c002a"/><stop offset="1" stop-color="#9c0023"/></linearGradient><linearGradient id="a79" gradientUnits="userSpaceOnUse" x1="1045" x2="1562"><stop offset="0" stop-color="#00699c"/><stop offset="0.228" stop-color="#03489c"/><stop offset="0.453" stop-color="#9c229a"/><stop offset="0.534" stop-color="#9c0d6e"/><stop offset="0.658" stop-color="#9c004b"/><stop offset="0.897" stop-color="#9c002b"/><stop offset="1" stop-color="#9c0024"/></linearGradient><linearGradient id="a80" gradientUnits="userSpaceOnUse" x1="1046" x2="1560"><stop offset="0" stop-color="#00679c"/><stop offset="0.23" stop-color="#04469c"/><stop offset="0.459" stop-color="#9c1f99"/><stop offset="0.545" stop-color="#9c0b6c"/><stop offset="0.658" stop-color="#9c004d"/><stop offset="0.895" stop-color="#9c002d"/><stop offset="1" stop-color="#9c0025"/></linearGradient><linearGradient id="a81" gradientUnits="userSpaceOnUse" x1="1046" x2="1558"><stop offset="0" stop-color="#00659c"/><stop offset="0.23" stop-color="#03459c"/><stop offset="0.465" stop-color="#9c1d99"/><stop offset="0.551" stop-color="#9c0a6d"/><stop offset="0.66" stop-color="#9c004e"/><stop offset="0.895" stop-color="#9c002e"/><stop offset="1" stop-color="#9c0026"/></linearGradient><linearGradient id="a82" gradientUnits="userSpaceOnUse" x1="1047" x2="1556"><stop offset="0" stop-color="#00639c"/><stop offset="0.228" stop-color="#02439c"/><stop offset="0.468" stop-color="#9c1c9a"/><stop offset="0.554" stop-color="#9c096e"/><stop offset="0.66" stop-color="#9c0050"/><stop offset="0.892" stop-color="#9c002f"/><stop offset="1" stop-color="#9c0027"/></linearGradient><linearGradient id="a83" gradientUnits="userSpaceOnUse" x1="1048" x2="1554"><stop offset="0" stop-color="#00619c"/><stop offset="0.229" stop-color="#02419c"/><stop offset="0.474" stop-color="#9c1a99"/><stop offset="0.565" stop-color="#9c076c"/><stop offset="0.672" stop-color="#9c004f"/><stop offset="0.913" stop-color="#9c002f"/><stop offset="1" stop-color="#9c0028"/></linearGradient><linearGradient id="a84" gradientUnits="userSpaceOnUse" x1="1049" x2="1552"><stop offset="0" stop-color="#005f9c"/><stop offset="0.231" stop-color="#03409c"/><stop offset="0.477" stop-color="#9c199a"/><stop offset="0.569" stop-color="#9c066d"/><stop offset="0.68" stop-color="#9c004f"/><stop offset="0.922" stop-color="#9c002f"/><stop offset="1" stop-color="#9c0029"/></linearGradient><linearGradient id="a85" gradientUnits="userSpaceOnUse" x1="1050" x2="1550"><stop offset="0" stop-color="#005d9c"/><stop offset="0.228" stop-color="#023e9c"/><stop offset="0.484" stop-color="#9c1699"/><stop offset="0.576" stop-color="#9c056d"/><stop offset="0.724" stop-color="#9c0049"/><stop offset="1" stop-color="#9c002a"/></linearGradient><linearGradient id="a86" gradientUnits="userSpaceOnUse" x1="1051" x2="1548"><stop offset="0" stop-color="#005b9c"/><stop offset="0.229" stop-color="#023d9c"/><stop offset="0.487" stop-color="#9c159a"/><stop offset="0.579" stop-color="#9c046e"/><stop offset="0.736" stop-color="#9c0048"/><stop offset="1" stop-color="#9c002b"/></linearGradient><linearGradient id="a87" gradientUnits="userSpaceOnUse" x1="1052" x2="1546"><stop offset="0" stop-color="#00599c"/><stop offset="0.231" stop-color="#033b9c"/><stop offset="0.494" stop-color="#9c1399"/><stop offset="0.591" stop-color="#9c026d"/><stop offset="0.753" stop-color="#9c0047"/><stop offset="1" stop-color="#9c002c"/></linearGradient><linearGradient id="a88" gradientUnits="userSpaceOnUse" x1="1053" x2="1544"><stop offset="0" stop-color="#00579c"/><stop offset="0.228" stop-color="#023a9c"/><stop offset="0.497" stop-color="#9c129a"/><stop offset="0.595" stop-color="#9c016e"/><stop offset="0.758" stop-color="#9c0048"/><stop offset="1" stop-color="#9c002d"/></linearGradient><linearGradient id="a89" gradientUnits="userSpaceOnUse" x1="1054" x2="1543"><stop offset="0" stop-color="#00559c"/><stop offset="0.229" stop-color="#02389c"/><stop offset="0.503" stop-color="#9c1099"/><stop offset="0.605" stop-color="#9c006c"/><stop offset="0.773" stop-color="#9c0047"/><stop offset="1" stop-color="#9c002e"/></linearGradient><linearGradient id="a90" gradientUnits="userSpaceOnUse" x1="1055" x2="1541"><stop offset="0" stop-color="#00539c"/><stop offset="0.23" stop-color="#03379c"/><stop offset="0.506" stop-color="#9c0f9a"/><stop offset="0.609" stop-color="#9c006d"/><stop offset="0.778" stop-color="#9c0048"/><stop offset="1" stop-color="#9c002f"/></linearGradient><linearGradient id="a91" gradientUnits="userSpaceOnUse" x1="1056" x2="1539"><stop offset="0" stop-color="#00529c"/><stop offset="0.232" stop-color="#04359c"/><stop offset="0.513" stop-color="#9c0d99"/><stop offset="0.617" stop-color="#9c006d"/><stop offset="0.791" stop-color="#9c0047"/><stop offset="1" stop-color="#9c0030"/></linearGradient><linearGradient id="a92" gradientUnits="userSpaceOnUse" x1="1057" x2="1537"><stop offset="0" stop-color="#00509c"/><stop offset="0.229" stop-color="#02349c"/><stop offset="0.517" stop-color="#9c0c9a"/><stop offset="0.621" stop-color="#9c006e"/><stop offset="0.796" stop-color="#9c0048"/><stop offset="1" stop-color="#9c0032"/></linearGradient><linearGradient id="a93" gradientUnits="userSpaceOnUse" x1="1058" x2="1535"><stop offset="0" stop-color="#004e9c"/><stop offset="0.231" stop-color="#03339c"/><stop offset="0.524" stop-color="#9c0a99"/><stop offset="0.625" stop-color="#9c006f"/><stop offset="0.801" stop-color="#9c0049"/><stop offset="1" stop-color="#9c0033"/></linearGradient><linearGradient id="a94" gradientUnits="userSpaceOnUse" x1="1059" x2="1533"><stop offset="0" stop-color="#004d9c"/><stop offset="0.232" stop-color="#03319c"/><stop offset="0.532" stop-color="#9c0998"/><stop offset="0.629" stop-color="#9c0070"/><stop offset="0.806" stop-color="#9c004a"/><stop offset="1" stop-color="#9c0034"/></linearGradient><linearGradient id="a95" gradientUnits="userSpaceOnUse" x1="1060" x2="1531"><stop offset="0" stop-color="#004b9c"/><stop offset="0.229" stop-color="#02309c"/><stop offset="0.535" stop-color="#9c0899"/><stop offset="0.633" stop-color="#9c0071"/><stop offset="0.811" stop-color="#9c004b"/><stop offset="1" stop-color="#9c0035"/></linearGradient><linearGradient id="a96" gradientUnits="userSpaceOnUse" x1="1060" x2="1529"><stop offset="0" stop-color="#004a9c"/><stop offset="0.23" stop-color="#022f9c"/><stop offset="0.542" stop-color="#9c0699"/><stop offset="0.644" stop-color="#9c0070"/><stop offset="0.827" stop-color="#9c004a"/><stop offset="1" stop-color="#9c0036"/></linearGradient><linearGradient id="a97" gradientUnits="userSpaceOnUse" x1="1061" x2="1527"><stop offset="0" stop-color="#00489c"/><stop offset="0.232" stop-color="#022e9c"/><stop offset="0.549" stop-color="#9c0598"/><stop offset="0.665" stop-color="#9c006c"/><stop offset="0.858" stop-color="#9c0047"/><stop offset="1" stop-color="#9c0038"/></linearGradient><linearGradient id="a98" gradientUnits="userSpaceOnUse" x1="1063" x2="1525"><stop offset="0" stop-color="#00469c"/><stop offset="0.229" stop-color="#022d9c"/><stop offset="0.554" stop-color="#9c0498"/><stop offset="0.675" stop-color="#9c006c"/><stop offset="0.879" stop-color="#9c0046"/><stop offset="1" stop-color="#9c0039"/></linearGradient><linearGradient id="a99" gradientUnits="userSpaceOnUse" x1="1064" x2="1523"><stop offset="0" stop-color="#00459c"/><stop offset="0.231" stop-color="#032c9c"/><stop offset="0.558" stop-color="#9c0399"/><stop offset="0.68" stop-color="#9c006d"/><stop offset="0.88" stop-color="#9c0047"/><stop offset="1" stop-color="#9c003a"/></linearGradient><linearGradient id="a100" gradientUnits="userSpaceOnUse" x1="1065" x2="1521"><stop offset="0" stop-color="#00439c"/><stop offset="0.232" stop-color="#032a9c"/><stop offset="0.566" stop-color="#9c0198"/><stop offset="0.689" stop-color="#9c006c"/><stop offset="0.895" stop-color="#9c0047"/><stop offset="1" stop-color="#9c003b"/></linearGradient><linearGradient id="a101" gradientUnits="userSpaceOnUse" x1="1066" x2="1519"><stop offset="0" stop-color="#00429c"/><stop offset="0.23" stop-color="#022a9c"/><stop offset="0.57" stop-color="#9c0099"/><stop offset="0.693" stop-color="#9c006d"/><stop offset="0.901" stop-color="#9c0048"/><stop offset="1" stop-color="#9c003d"/></linearGradient><linearGradient id="a102" gradientUnits="userSpaceOnUse" x1="1067" x2="1517"><stop offset="0" stop-color="#00409c"/><stop offset="0.231" stop-color="#03289c"/><stop offset="0.578" stop-color="#9c0098"/><stop offset="0.707" stop-color="#9c006c"/><stop offset="0.92" stop-color="#9c0047"/><stop offset="1" stop-color="#9c003e"/></linearGradient><linearGradient id="a103" gradientUnits="userSpaceOnUse" x1="1068" x2="1515"><stop offset="0" stop-color="#003f9c"/><stop offset="0.233" stop-color="#03279c"/><stop offset="0.582" stop-color="#9c0099"/><stop offset="0.711" stop-color="#9c006d"/><stop offset="0.926" stop-color="#9c0047"/><stop offset="1" stop-color="#9c003f"/></linearGradient><linearGradient id="a104" gradientUnits="userSpaceOnUse" x1="1069" x2="1513"><stop offset="0" stop-color="#003e9c"/><stop offset="0.23" stop-color="#02269c"/><stop offset="0.59" stop-color="#9c0098"/><stop offset="0.721" stop-color="#9c006d"/><stop offset="0.941" stop-color="#9c0047"/><stop offset="1" stop-color="#9c0041"/></linearGradient><linearGradient id="a105" gradientUnits="userSpaceOnUse" x1="1070" x2="1512"><stop offset="0" stop-color="#003c9c"/><stop offset="0.231" stop-color="#03259c"/><stop offset="0.593" stop-color="#9c0099"/><stop offset="0.724" stop-color="#9c006e"/><stop offset="0.946" stop-color="#9c0048"/><stop offset="1" stop-color="#9c0042"/></linearGradient><linearGradient id="a106" gradientUnits="userSpaceOnUse" x1="1071" x2="1510"><stop offset="0" stop-color="#003b9c"/><stop offset="0.232" stop-color="#03249c"/><stop offset="0.588" stop-color="#98009c"/><stop offset="0.752" stop-color="#9c0069"/><stop offset="0.989" stop-color="#9c0044"/><stop offset="1" stop-color="#9c0043"/></linearGradient><linearGradient id="a107" gradientUnits="userSpaceOnUse" x1="1072" x2="1508"><stop offset="0" stop-color="#003a9c"/><stop offset="0.229" stop-color="#02249c"/><stop offset="0.587" stop-color="#95009c"/><stop offset="0.615" stop-color="#9c0096"/><stop offset="0.757" stop-color="#9c006a"/><stop offset="0.995" stop-color="#9c0045"/><stop offset="1" stop-color="#9c0045"/></linearGradient><linearGradient id="a108" gradientUnits="userSpaceOnUse" x1="1073" x2="1506"><stop offset="0" stop-color="#00399c"/><stop offset="0.231" stop-color="#03229c"/><stop offset="0.587" stop-color="#92009c"/><stop offset="0.619" stop-color="#9c0097"/><stop offset="0.762" stop-color="#9c006b"/><stop offset="1" stop-color="#9c0046"/></linearGradient><linearGradient id="a109" gradientUnits="userSpaceOnUse" x1="1074" x2="1504"><stop offset="0" stop-color="#00379c"/><stop offset="0.233" stop-color="#03219c"/><stop offset="0.581" stop-color="#8e009c"/><stop offset="0.623" stop-color="#9c0098"/><stop offset="0.767" stop-color="#9c006c"/><stop offset="1" stop-color="#9c0047"/></linearGradient><linearGradient id="a110" gradientUnits="userSpaceOnUse" x1="1075" x2="1502"><stop offset="0" stop-color="#00369c"/><stop offset="0.234" stop-color="#04209c"/><stop offset="0.581" stop-color="#8b009c"/><stop offset="0.628" stop-color="#9c0099"/><stop offset="0.773" stop-color="#9c006d"/><stop offset="1" stop-color="#9c0049"/></linearGradient><linearGradient id="a111" gradientUnits="userSpaceOnUse" x1="1076" x2="1500"><stop offset="0" stop-color="#00359c"/><stop offset="0.231" stop-color="#03209c"/><stop offset="0.58" stop-color="#88009c"/><stop offset="0.637" stop-color="#9c0098"/><stop offset="0.788" stop-color="#9c006b"/><stop offset="1" stop-color="#9c004a"/></linearGradient><linearGradient id="a112" gradientUnits="userSpaceOnUse" x1="1077" x2="1498"><stop offset="0" stop-color="#00349c"/><stop offset="0.233" stop-color="#031f9c"/><stop offset="0.575" stop-color="#83009c"/><stop offset="0.641" stop-color="#9c0099"/><stop offset="0.793" stop-color="#9c006c"/><stop offset="1" stop-color="#9c004c"/></linearGradient><linearGradient id="a113" gradientUnits="userSpaceOnUse" x1="1079" x2="1496"><stop offset="0" stop-color="#00339c"/><stop offset="0.23" stop-color="#031e9c"/><stop offset="0.571" stop-color="#80009c"/><stop offset="0.647" stop-color="#9c0099"/><stop offset="0.801" stop-color="#9c006d"/><stop offset="1" stop-color="#9c004d"/></linearGradient><linearGradient id="a114" gradientUnits="userSpaceOnUse" x1="1080" x2="1494"><stop offset="0" stop-color="#00319c"/><stop offset="0.232" stop-color="#031d9c"/><stop offset="0.57" stop-color="#7d009c"/><stop offset="0.657" stop-color="#9c0098"/><stop offset="0.816" stop-color="#9c006b"/><stop offset="1" stop-color="#9c004f"/></linearGradient><linearGradient id="a115" gradientUnits="userSpaceOnUse" x1="1081" x2="1492"><stop offset="0" stop-color="#00309c"/><stop offset="0.229" stop-color="#021d9c"/><stop offset="0.569" stop-color="#7b009c"/><stop offset="0.662" stop-color="#9c0099"/><stop offset="0.822" stop-color="#9c006c"/><stop offset="1" stop-color="#9c0050"/></linearGradient><linearGradient id="a116" gradientUnits="userSpaceOnUse" x1="1082" x2="1490"><stop offset="0" stop-color="#002f9c"/><stop offset="0.23" stop-color="#031c9c"/><stop offset="0.564" stop-color="#77009c"/><stop offset="0.672" stop-color="#9c0098"/><stop offset="0.833" stop-color="#9c006c"/><stop offset="1" stop-color="#9c0052"/></linearGradient><linearGradient id="a117" gradientUnits="userSpaceOnUse" x1="1083" x2="1488"><stop offset="0" stop-color="#002e9c"/><stop offset="0.232" stop-color="#031b9c"/><stop offset="0.563" stop-color="#74009c"/><stop offset="0.677" stop-color="#9c0099"/><stop offset="0.84" stop-color="#9c006d"/><stop offset="1" stop-color="#9c0054"/></linearGradient><linearGradient id="a118" gradientUnits="userSpaceOnUse" x1="1084" x2="1486"><stop offset="0" stop-color="#002d9c"/><stop offset="0.234" stop-color="#041a9c"/><stop offset="0.557" stop-color="#70009c"/><stop offset="0.687" stop-color="#9c0098"/><stop offset="0.856" stop-color="#9c006c"/><stop offset="1" stop-color="#9c0055"/></linearGradient><linearGradient id="a119" gradientUnits="userSpaceOnUse" x1="1085" x2="1484"><stop offset="0" stop-color="#002c9c"/><stop offset="0.231" stop-color="#03199c"/><stop offset="0.556" stop-color="#6e009c"/><stop offset="0.692" stop-color="#9c0099"/><stop offset="0.862" stop-color="#9c006d"/><stop offset="1" stop-color="#9c0057"/></linearGradient><linearGradient id="a120" gradientUnits="userSpaceOnUse" x1="1087" x2="1482"><stop offset="0" stop-color="#002b9c"/><stop offset="0.228" stop-color="#02199c"/><stop offset="0.552" stop-color="#6b009c"/><stop offset="0.699" stop-color="#9c0099"/><stop offset="0.871" stop-color="#9c006d"/><stop offset="1" stop-color="#9c0059"/></linearGradient><linearGradient id="a121" gradientUnits="userSpaceOnUse" x1="1088" x2="1481"><stop offset="0" stop-color="#002a9c"/><stop offset="0.229" stop-color="#03189c"/><stop offset="0.55" stop-color="#69009c"/><stop offset="0.707" stop-color="#9c0098"/><stop offset="0.885" stop-color="#9c006c"/><stop offset="1" stop-color="#9c005a"/></linearGradient><linearGradient id="a122" gradientUnits="userSpaceOnUse" x1="1089" x2="1479"><stop offset="0" stop-color="#00299c"/><stop offset="0.231" stop-color="#03179c"/><stop offset="0.549" stop-color="#67009c"/><stop offset="0.713" stop-color="#9c0099"/><stop offset="0.892" stop-color="#9c006d"/><stop offset="1" stop-color="#9c005c"/></linearGradient><linearGradient id="a123" gradientUnits="userSpaceOnUse" x1="1090" x2="1477"><stop offset="0" stop-color="#00289c"/><stop offset="0.227" stop-color="#02179c"/><stop offset="0.543" stop-color="#63009c"/><stop offset="0.724" stop-color="#9c0098"/><stop offset="0.91" stop-color="#9c006b"/><stop offset="1" stop-color="#9c005d"/></linearGradient><linearGradient id="a124" gradientUnits="userSpaceOnUse" x1="1091" x2="1475"><stop offset="0" stop-color="#00279c"/><stop offset="0.229" stop-color="#03169c"/><stop offset="0.542" stop-color="#61009c"/><stop offset="0.729" stop-color="#9c0099"/><stop offset="0.917" stop-color="#9c006c"/><stop offset="1" stop-color="#9c005f"/></linearGradient><linearGradient id="a125" gradientUnits="userSpaceOnUse" x1="1092" x2="1473"><stop offset="0" stop-color="#00269c"/><stop offset="0.231" stop-color="#03159c"/><stop offset="0.541" stop-color="#5f009c"/><stop offset="0.74" stop-color="#9c0098"/><stop offset="0.929" stop-color="#9c006c"/><stop offset="1" stop-color="#9c0061"/></linearGradient><linearGradient id="a126" gradientUnits="userSpaceOnUse" x1="1094" x2="1471"><stop offset="0" stop-color="#00259c"/><stop offset="0.228" stop-color="#03149c"/><stop offset="0.536" stop-color="#5c009c"/><stop offset="0.748" stop-color="#9c0098"/><stop offset="0.939" stop-color="#9c006c"/><stop offset="1" stop-color="#9c0063"/></linearGradient><linearGradient id="a127" gradientUnits="userSpaceOnUse" x1="1095" x2="1469"><stop offset="0" stop-color="#00249c"/><stop offset="0.23" stop-color="#03149c"/><stop offset="0.535" stop-color="#5a009c"/><stop offset="0.754" stop-color="#9c0099"/><stop offset="0.947" stop-color="#9c006d"/><stop offset="1" stop-color="#9c0065"/></linearGradient><linearGradient id="a128" gradientUnits="userSpaceOnUse" x1="1096" x2="1467"><stop offset="0" stop-color="#00239c"/><stop offset="0.226" stop-color="#03139c"/><stop offset="0.528" stop-color="#57009c"/><stop offset="0.765" stop-color="#9c0098"/><stop offset="0.965" stop-color="#9c006c"/><stop offset="1" stop-color="#9c0067"/></linearGradient><linearGradient id="a129" gradientUnits="userSpaceOnUse" x1="1097" x2="1465"><stop offset="0" stop-color="#00229c"/><stop offset="0.228" stop-color="#03129c"/><stop offset="0.527" stop-color="#55009c"/><stop offset="0.772" stop-color="#9c0099"/><stop offset="0.973" stop-color="#9c006d"/><stop offset="1" stop-color="#9c0069"/></linearGradient><linearGradient id="a130" gradientUnits="userSpaceOnUse" x1="1098" x2="1463"><stop offset="0" stop-color="#00229c"/><stop offset="0.23" stop-color="#03129c"/><stop offset="0.526" stop-color="#53009c"/><stop offset="0.784" stop-color="#9c0098"/><stop offset="0.992" stop-color="#9c006c"/><stop offset="1" stop-color="#9c006b"/></linearGradient><linearGradient id="a131" gradientUnits="userSpaceOnUse" x1="1100" x2="1461"><stop offset="0" stop-color="#00219c"/><stop offset="0.227" stop-color="#03119c"/><stop offset="0.521" stop-color="#51009c"/><stop offset="0.792" stop-color="#9c0098"/><stop offset="1" stop-color="#9c006c"/></linearGradient><linearGradient id="a132" gradientUnits="userSpaceOnUse" x1="1101" x2="1459"><stop offset="0" stop-color="#00209c"/><stop offset="0.229" stop-color="#04109c"/><stop offset="0.52" stop-color="#4f009c"/><stop offset="0.799" stop-color="#9c0099"/><stop offset="1" stop-color="#9c006f"/></linearGradient><linearGradient id="a133" gradientUnits="userSpaceOnUse" x1="1102" x2="1457"><stop offset="0" stop-color="#001f9c"/><stop offset="0.225" stop-color="#03109c"/><stop offset="0.513" stop-color="#4c009c"/><stop offset="0.811" stop-color="#9c0098"/><stop offset="1" stop-color="#9c0071"/></linearGradient><linearGradient id="a134" gradientUnits="userSpaceOnUse" x1="1103" x2="1455"><stop offset="0" stop-color="#001e9c"/><stop offset="0.227" stop-color="#030f9c"/><stop offset="0.511" stop-color="#4a009c"/><stop offset="0.818" stop-color="#9c0099"/><stop offset="1" stop-color="#9c0073"/></linearGradient><linearGradient id="a135" gradientUnits="userSpaceOnUse" x1="1104" x2="1453"><stop offset="0" stop-color="#001d9c"/><stop offset="0.229" stop-color="#040f9c"/><stop offset="0.51" stop-color="#49009c"/><stop offset="0.831" stop-color="#9c0098"/><stop offset="1" stop-color="#9c0075"/></linearGradient><linearGradient id="a136" gradientUnits="userSpaceOnUse" x1="1106" x2="1451"><stop offset="0" stop-color="#001c9c"/><stop offset="0.226" stop-color="#030e9c"/><stop offset="0.504" stop-color="#46009c"/><stop offset="0.841" stop-color="#9c0099"/><stop offset="1" stop-color="#9c0077"/></linearGradient><linearGradient id="a137" gradientUnits="userSpaceOnUse" x1="1107" x2="1450"><stop offset="0" stop-color="#001c9c"/><stop offset="0.227" stop-color="#040d9c"/><stop offset="0.501" stop-color="#45009c"/><stop offset="0.845" stop-color="#9c0099"/><stop offset="1" stop-color="#9c0079"/></linearGradient><linearGradient id="a138" gradientUnits="userSpaceOnUse" x1="1108" x2="1448"><stop offset="0" stop-color="#001b9c"/><stop offset="0.224" stop-color="#030d9c"/><stop offset="0.5" stop-color="#43009c"/><stop offset="0.859" stop-color="#9c0099"/><stop offset="1" stop-color="#9c007b"/></linearGradient><linearGradient id="a139" gradientUnits="userSpaceOnUse" x1="1109" x2="1446"><stop offset="0" stop-color="#001a9c"/><stop offset="0.226" stop-color="#030c9c"/><stop offset="0.493" stop-color="#41009c"/><stop offset="0.866" stop-color="#9c0099"/><stop offset="1" stop-color="#9c007d"/></linearGradient><linearGradient id="a140" gradientUnits="userSpaceOnUse" x1="1111" x2="1444"><stop offset="0" stop-color="#00199c"/><stop offset="0.222" stop-color="#030c9c"/><stop offset="0.492" stop-color="#40009c"/><stop offset="0.883" stop-color="#9c0098"/><stop offset="1" stop-color="#9c007f"/></linearGradient><linearGradient id="a141" gradientUnits="userSpaceOnUse" x1="1112" x2="1442"><stop offset="0" stop-color="#00199c"/><stop offset="0.224" stop-color="#030b9c"/><stop offset="0.491" stop-color="#3e009c"/><stop offset="0.891" stop-color="#9c0099"/><stop offset="1" stop-color="#9c0082"/></linearGradient><linearGradient id="a142" gradientUnits="userSpaceOnUse" x1="1113" x2="1440"><stop offset="0" stop-color="#00189c"/><stop offset="0.22" stop-color="#030b9c"/><stop offset="0.483" stop-color="#3c009c"/><stop offset="0.905" stop-color="#9c0098"/><stop offset="1" stop-color="#9c0084"/></linearGradient><linearGradient id="a143" gradientUnits="userSpaceOnUse" x1="1114" x2="1438"><stop offset="0" stop-color="#00179c"/><stop offset="0.222" stop-color="#030a9c"/><stop offset="0.488" stop-color="#3c009c"/><stop offset="0.914" stop-color="#9c0099"/><stop offset="1" stop-color="#9c0087"/></linearGradient><linearGradient id="a144" gradientUnits="userSpaceOnUse" x1="1116" x2="1436"><stop offset="0" stop-color="#00169c"/><stop offset="0.219" stop-color="#030a9c"/><stop offset="0.481" stop-color="#3a009c"/><stop offset="0.925" stop-color="#9c0099"/><stop offset="1" stop-color="#9c0089"/></linearGradient><linearGradient id="a145" gradientUnits="userSpaceOnUse" x1="1117" x2="1434"><stop offset="0" stop-color="#00169c"/><stop offset="0.221" stop-color="#03099c"/><stop offset="0.479" stop-color="#38009c"/><stop offset="0.94" stop-color="#9c0098"/><stop offset="1" stop-color="#9c008c"/></linearGradient><linearGradient id="a146" gradientUnits="userSpaceOnUse" x1="1118" x2="1432"><stop offset="0" stop-color="#00159c"/><stop offset="0.223" stop-color="#04099c"/><stop offset="0.484" stop-color="#38009c"/><stop offset="0.949" stop-color="#9c0099"/><stop offset="1" stop-color="#9c008e"/></linearGradient><linearGradient id="a147" gradientUnits="userSpaceOnUse" x1="1119" x2="1430"><stop offset="0" stop-color="#00149c"/><stop offset="0.225" stop-color="#04089c"/><stop offset="0.482" stop-color="#37009c"/><stop offset="0.965" stop-color="#9c0098"/><stop offset="1" stop-color="#9c0091"/></linearGradient><linearGradient id="a148" gradientUnits="userSpaceOnUse" x1="1121" x2="1428"><stop offset="0" stop-color="#00139c"/><stop offset="0.221" stop-color="#04089c"/><stop offset="0.482" stop-color="#36009c"/><stop offset="0.977" stop-color="#9c0098"/><stop offset="1" stop-color="#9c0093"/></linearGradient><linearGradient id="a149" gradientUnits="userSpaceOnUse" x1="1122" x2="1426"><stop offset="0" stop-color="#00139c"/><stop offset="0.217" stop-color="#03089c"/><stop offset="0.48" stop-color="#35009c"/><stop offset="0.987" stop-color="#9c0099"/><stop offset="1" stop-color="#9c0096"/></linearGradient><linearGradient id="a150" gradientUnits="userSpaceOnUse" x1="1123" x2="1424"><stop offset="0" stop-color="#00129c"/><stop offset="0.219" stop-color="#03079c"/><stop offset="0.485" stop-color="#35009c"/><stop offset="1" stop-color="#9c0099"/></linearGradient><linearGradient id="a151" gradientUnits="userSpaceOnUse" x1="1125" x2="1422"><stop offset="0" stop-color="#00119c"/><stop offset="0.215" stop-color="#03079c"/><stop offset="0.485" stop-color="#35009c"/><stop offset="1" stop-color="#9b009c"/></linearGradient><linearGradient id="a152" gradientUnits="userSpaceOnUse" x1="1126" x2="1420"><stop offset="0" stop-color="#00119c"/><stop offset="0.218" stop-color="#03069c"/><stop offset="0.503" stop-color="#37009c"/><stop offset="1" stop-color="#99009c"/></linearGradient><linearGradient id="a153" gradientUnits="userSpaceOnUse" x1="1127" x2="1418"><stop offset="0" stop-color="#00109c"/><stop offset="0.22" stop-color="#04069c"/><stop offset="0.522" stop-color="#3a009c"/><stop offset="1" stop-color="#96009c"/></linearGradient><linearGradient id="a154" gradientUnits="userSpaceOnUse" x1="1129" x2="1417"><stop offset="0" stop-color="#000f9c"/><stop offset="0.215" stop-color="#04059c"/><stop offset="0.549" stop-color="#3e009c"/><stop offset="1" stop-color="#94009c"/></linearGradient><linearGradient id="a155" gradientUnits="userSpaceOnUse" x1="1130" x2="1415"><stop offset="0" stop-color="#000f9c"/><stop offset="0.218" stop-color="#04059c"/><stop offset="0.611" stop-color="#48009c"/><stop offset="1" stop-color="#91009c"/></linearGradient><linearGradient id="a156" gradientUnits="userSpaceOnUse" x1="1131" x2="1413"><stop offset="0" stop-color="#000e9c"/><stop offset="0.213" stop-color="#03049c"/><stop offset="0.667" stop-color="#51009c"/><stop offset="1" stop-color="#8e009c"/></linearGradient><linearGradient id="a157" gradientUnits="userSpaceOnUse" x1="1133" x2="1411"><stop offset="0" stop-color="#000e9c"/><stop offset="0.209" stop-color="#03049c"/><stop offset="0.835" stop-color="#6e009c"/><stop offset="1" stop-color="#8c009c"/></linearGradient><linearGradient id="a158" gradientUnits="userSpaceOnUse" x1="1134" x2="1409"><stop offset="0" stop-color="#000d9c"/><stop offset="0.211" stop-color="#03049c"/><stop offset="1" stop-color="#89009c"/></linearGradient><linearGradient id="a159" gradientUnits="userSpaceOnUse" x1="1135" x2="1407"><stop offset="0" stop-color="#000c9c"/><stop offset="0.213" stop-color="#04039c"/><stop offset="1" stop-color="#87009c"/></linearGradient><linearGradient id="a160" gradientUnits="userSpaceOnUse" x1="1137" x2="1405"><stop offset="0" stop-color="#000c9c"/><stop offset="0.209" stop-color="#03039c"/><stop offset="1" stop-color="#84009c"/></linearGradient><linearGradient id="a161" gradientUnits="userSpaceOnUse" x1="1138" x2="1403"><stop offset="0" stop-color="#000b9c"/><stop offset="0.211" stop-color="#04029c"/><stop offset="1" stop-color="#82009c"/></linearGradient><linearGradient id="a162" gradientUnits="userSpaceOnUse" x1="1140" x2="1401"><stop offset="0" stop-color="#000a9c"/><stop offset="0.207" stop-color="#04029c"/><stop offset="1" stop-color="#7f009c"/></linearGradient><linearGradient id="a163" gradientUnits="userSpaceOnUse" x1="1141" x2="1399"><stop offset="0" stop-color="#000a9c"/><stop offset="0.209" stop-color="#04019c"/><stop offset="1" stop-color="#7d009c"/></linearGradient><linearGradient id="a164" gradientUnits="userSpaceOnUse" x1="1142" x2="1397"><stop offset="0" stop-color="#00099c"/><stop offset="0.204" stop-color="#03019c"/><stop offset="1" stop-color="#7b009c"/></linearGradient><linearGradient id="a165" gradientUnits="userSpaceOnUse" x1="1144" x2="1395"><stop offset="0" stop-color="#00099c"/><stop offset="0.207" stop-color="#04019c"/><stop offset="1" stop-color="#79009c"/></linearGradient><linearGradient id="a166" gradientUnits="userSpaceOnUse" x1="1145" x2="1393"><stop offset="0" stop-color="#00089c"/><stop offset="0.202" stop-color="#03009c"/><stop offset="1" stop-color="#76009c"/></linearGradient><linearGradient id="a167" gradientUnits="userSpaceOnUse" x1="1147" x2="1391"><stop offset="0" stop-color="#00089c"/><stop offset="0.197" stop-color="#03009c"/><stop offset="1" stop-color="#74009c"/></linearGradient><linearGradient id="a168" gradientUnits="userSpaceOnUse" x1="1148" x2="1389"><stop offset="0" stop-color="#00079c"/><stop offset="0.199" stop-color="#04009c"/><stop offset="1" stop-color="#72009c"/></linearGradient><linearGradient id="a169" gradientUnits="userSpaceOnUse" x1="1150" x2="1387"><stop offset="0" stop-color="#00069c"/><stop offset="0.194" stop-color="#03009c"/><stop offset="1" stop-color="#70009c"/></linearGradient><linearGradient id="a170" gradientUnits="userSpaceOnUse" x1="1151" x2="1386"><stop offset="0" stop-color="#00069c"/><stop offset="0.196" stop-color="#04009c"/><stop offset="1" stop-color="#6e009c"/></linearGradient><linearGradient id="a171" gradientUnits="userSpaceOnUse" x1="1153" x2="1384"><stop offset="0" stop-color="#00059c"/><stop offset="0.19" stop-color="#03009c"/><stop offset="1" stop-color="#6c009c"/></linearGradient><linearGradient id="a172" gradientUnits="userSpaceOnUse" x1="1154" x2="1382"><stop offset="0" stop-color="#00059c"/><stop offset="0.193" stop-color="#04009c"/><stop offset="1" stop-color="#6a009c"/></linearGradient><linearGradient id="a173" gradientUnits="userSpaceOnUse" x1="1156" x2="1380"><stop offset="0" stop-color="#00049c"/><stop offset="0.188" stop-color="#04009c"/><stop offset="1" stop-color="#68009c"/></linearGradient><linearGradient id="a174" gradientUnits="userSpaceOnUse" x1="1157" x2="1378"><stop offset="0" stop-color="#00049c"/><stop offset="0.19" stop-color="#04009c"/><stop offset="1" stop-color="#66009c"/></linearGradient><linearGradient id="a175" gradientUnits="userSpaceOnUse" x1="1159" x2="1376"><stop offset="0" stop-color="#00039c"/><stop offset="0.184" stop-color="#04009c"/><stop offset="1" stop-color="#64009c"/></linearGradient><linearGradient id="a176" gradientUnits="userSpaceOnUse" x1="1160" x2="1374"><stop offset="0" stop-color="#00039c"/><stop offset="0.187" stop-color="#04009c"/><stop offset="1" stop-color="#62009c"/></linearGradient><linearGradient id="a177" gradientUnits="userSpaceOnUse" x1="1162" x2="1372"><stop offset="0" stop-color="#00029c"/><stop offset="0.181" stop-color="#04009c"/><stop offset="1" stop-color="#60009c"/></linearGradient><linearGradient id="a178" gradientUnits="userSpaceOnUse" x1="1164" x2="1370"><stop offset="0" stop-color="#00029c"/><stop offset="0.184" stop-color="#05009c"/><stop offset="1" stop-color="#5e009c"/></linearGradient><linearGradient id="a179" gradientUnits="userSpaceOnUse" x1="1165" x2="1368"><stop offset="0" stop-color="#00019c"/><stop offset="0.177" stop-color="#04009c"/><stop offset="1" stop-color="#5c009c"/></linearGradient><linearGradient id="a180" gradientUnits="userSpaceOnUse" x1="1167" x2="1366"><stop offset="0" stop-color="#00019c"/><stop offset="0.171" stop-color="#04009c"/><stop offset="1" stop-color="#5a009c"/></linearGradient><linearGradient id="a181" gradientUnits="userSpaceOnUse" x1="1169" x2="1364"><stop offset="0" stop-color="#00009c"/><stop offset="0.174" stop-color="#05009c"/><stop offset="1" stop-color="#59009c"/></linearGradient><linearGradient id="a182" gradientUnits="userSpaceOnUse" x1="1170" x2="1362"><stop offset="0" stop-color="#00009c"/><stop offset="0.177" stop-color="#05009c"/><stop offset="1" stop-color="#57009c"/></linearGradient><linearGradient id="a183" gradientUnits="userSpaceOnUse" x1="1172" x2="1360"><stop offset="0" stop-color="#00009c"/><stop offset="0.17" stop-color="#05009c"/><stop offset="1" stop-color="#55009c"/></linearGradient><linearGradient id="a184" gradientUnits="userSpaceOnUse" x1="1173" x2="1358"><stop offset="0" stop-color="#00009c"/><stop offset="0.173" stop-color="#05009c"/><stop offset="1" stop-color="#53009c"/></linearGradient><linearGradient id="a185" gradientUnits="userSpaceOnUse" x1="1175" x2="1356"><stop offset="0" stop-color="#00009c"/><stop offset="0.166" stop-color="#05009c"/><stop offset="1" stop-color="#52009c"/></linearGradient><linearGradient id="a186" gradientUnits="userSpaceOnUse" x1="1177" x2="1355"><stop offset="0" stop-color="#00009c"/><stop offset="0.169" stop-color="#06009c"/><stop offset="1" stop-color="#50009c"/></linearGradient><linearGradient id="a187" gradientUnits="userSpaceOnUse" x1="1179" x2="1353"><stop offset="0" stop-color="#00009c"/><stop offset="0.172" stop-color="#06009c"/><stop offset="1" stop-color="#4f009c"/></linearGradient><linearGradient id="a188" gradientUnits="userSpaceOnUse" x1="1180" x2="1351"><stop offset="0" stop-color="#00009c"/><stop offset="0.164" stop-color="#06009c"/><stop offset="1" stop-color="#4d009c"/></linearGradient><linearGradient id="a189" gradientUnits="userSpaceOnUse" x1="1182" x2="1349"><stop offset="0" stop-color="#00009c"/><stop offset="0.168" stop-color="#07009c"/><stop offset="1" stop-color="#4b009c"/></linearGradient><linearGradient id="a190" gradientUnits="userSpaceOnUse" x1="1184" x2="1347"><stop offset="0" stop-color="#00009c"/><stop offset="0.196" stop-color="#09009c"/><stop offset="1" stop-color="#4a009c"/></linearGradient><linearGradient id="a191" gradientUnits="userSpaceOnUse" x1="1186" x2="1345"><stop offset="0" stop-color="#00009c"/><stop offset="0.226" stop-color="#0c009c"/><stop offset="1" stop-color="#48009c"/></linearGradient><linearGradient id="a192" gradientUnits="userSpaceOnUse" x1="1188" x2="1343"><stop offset="0" stop-color="#00009c"/><stop offset="0.335" stop-color="#14009c"/><stop offset="1" stop-color="#47009c"/></linearGradient><linearGradient id="a193" gradientUnits="userSpaceOnUse" x1="1190" x2="1341"><stop offset="0" stop-color="#00009c"/><stop offset="1" stop-color="#45009c"/></linearGradient><linearGradient id="a194" gradientUnits="userSpaceOnUse" x1="1192" x2="1339"><stop offset="0" stop-color="#00009c"/><stop offset="1" stop-color="#44009c"/></linearGradient><linearGradient id="a195" gradientUnits="userSpaceOnUse" x1="1194" x2="1337"><stop offset="0" stop-color="#00009c"/><stop offset="1" stop-color="#42009c"/></linearGradient><linearGradient id="a196" gradientUnits="userSpaceOnUse" x1="1196" x2="1335"><stop offset="0" stop-color="#00009c"/><stop offset="1" stop-color="#40009c"/></linearGradient><linearGradient id="a197" gradientUnits="userSpaceOnUse" x1="1198" x2="1333"><stop offset="0" stop-color="#00009c"/><stop offset="1" stop-color="#3f009c"/></linearGradient><linearGradient id="a198" gradientUnits="userSpaceOnUse" x1="1200" x2="1331"><stop offset="0" stop-color="#00009c"/><stop offset="1" stop-color="#3e009c"/></linearGradient><linearGradient id="a199" gradientUnits="userSpaceOnUse" x1="1202" x2="1329"><stop offset="0" stop-color="#01009c"/><stop offset="1" stop-color="#3c009c"/></linearGradient><linearGradient id="a200" gradientUnits="userSpaceOnUse" x1="1204" x2="1327"><stop offset="0" stop-color="#02009c"/><stop offset="1" stop-color="#3b009c"/></linearGradient><linearGradient id="a201" gradientUnits="userSpaceOnUse" x1="1206" x2="1325"><stop offset="0" stop-color="#03009c"/><stop offset="1" stop-color="#39009c"/></linearGradient><linearGradient id="a202" gradientUnits="userSpaceOnUse" x1="1208" x2="1324"><stop offset="0" stop-color="#03009c"/><stop offset="1" stop-color="#38009c"/></linearGradient><linearGradient id="a203" gradientUnits="userSpaceOnUse" x1="1211" x2="1322"><stop offset="0" stop-color="#05009c"/><stop offset="1" stop-color="#37009c"/></linearGradient><linearGradient id="a204" gradientUnits="userSpaceOnUse" x1="1213" x2="1320"><stop offset="0" stop-color="#05009c"/><stop offset="1" stop-color="#36009c"/></linearGradient><linearGradient id="a205" gradientUnits="userSpaceOnUse" x1="1215" x2="1318"><stop offset="0" stop-color="#06009c"/><stop offset="1" stop-color="#34009c"/></linearGradient><linearGradient id="a206" gradientUnits="userSpaceOnUse" x1="1217" x2="1316"><stop offset="0" stop-color="#07009c"/><stop offset="1" stop-color="#33009c"/></linearGradient><linearGradient id="a207" gradientUnits="userSpaceOnUse" x1="1220" x2="1314"><stop offset="0" stop-color="#08009c"/><stop offset="1" stop-color="#32009c"/></linearGradient><linearGradient id="a208" gradientUnits="userSpaceOnUse" x1="1222" x2="1312"><stop offset="0" stop-color="#08009c"/><stop offset="1" stop-color="#30009c"/></linearGradient><linearGradient id="a209" gradientUnits="userSpaceOnUse" x1="1224" x2="1310"><stop offset="0" stop-color="#09009c"/><stop offset="1" stop-color="#2f009c"/></linearGradient><linearGradient id="a210" gradientUnits="userSpaceOnUse" x1="1227" x2="1308"><stop offset="0" stop-color="#0a009c"/><stop offset="1" stop-color="#2e009c"/></linearGradient><linearGradient id="a211" gradientUnits="userSpaceOnUse" x1="1229" x2="1306"><stop offset="0" stop-color="#0b009c"/><stop offset="1" stop-color="#2c009c"/></linearGradient><linearGradient id="a212" gradientUnits="userSpaceOnUse" x1="1232" x2="1304"><stop offset="0" stop-color="#0c009c"/><stop offset="1" stop-color="#2b009c"/></linearGradient><linearGradient id="a213" gradientUnits="userSpaceOnUse" x1="1234" x2="1302"><stop offset="0" stop-color="#0d009c"/><stop offset="1" stop-color="#2a009c"/></linearGradient><linearGradient id="a214" gradientUnits="userSpaceOnUse" x1="1237" x2="1300"><stop offset="0" stop-color="#0e009c"/><stop offset="1" stop-color="#29009c"/></linearGradient><linearGradient id="a215" gradientUnits="userSpaceOnUse" x1="1239" x2="1298"><stop offset="0" stop-color="#0e009c"/><stop offset="1" stop-color="#27009c"/></linearGradient><linearGradient id="a216" gradientUnits="userSpaceOnUse" x1="1241" x2="1296"><stop offset="0" stop-color="#0f009c"/><stop offset="1" stop-color="#26009c"/></linearGradient><linearGradient id="a217" gradientUnits="userSpaceOnUse" x1="1244" x2="1294"><stop offset="0" stop-color="#10009c"/><stop offset="1" stop-color="#25009c"/></linearGradient><linearGradient id="a218" gradientUnits="userSpaceOnUse" x1="1246" x2="1293"><stop offset="0" stop-color="#11009c"/><stop offset="1" stop-color="#24009c"/></linearGradient><linearGradient id="a219" gradientUnits="userSpaceOnUse" x1="1249" x2="1291"><stop offset="0" stop-color="#12009c"/><stop offset="1" stop-color="#23009c"/></linearGradient><linearGradient id="a220" gradientUnits="userSpaceOnUse" x1="1251" x2="1289"><stop offset="0" stop-color="#12009c"/><stop offset="1" stop-color="#22009c"/></linearGradient><linearGradient id="a221" gradientUnits="userSpaceOnUse" x1="1253" x2="1287"><stop offset="0" stop-color="#13009c"/><stop offset="1" stop-color="#21009c"/></linearGradient><linearGradient id="a222" gradientUnits="userSpaceOnUse" x1="1256" x2="1285"><stop offset="0" stop-color="#14009c"/><stop offset="1" stop-color="#20009c"/></linearGradient><linearGradient id="a223" gradientUnits="userSpaceOnUse" x1="1258" x2="1283"><stop offset="0" stop-color="#14009c"/><stop offset="1" stop-color="#1f009c"/></linearGradient><linearGradient id="a224" gradientUnits="userSpaceOnUse" x1="1260" x2="1281"><stop offset="0" stop-color="#15009c"/><stop offset="1" stop-color="#1e009c"/></linearGradient><linearGradient id="a225" gradientUnits="userSpaceOnUse" x1="1263" x2="1279"><stop offset="0" stop-color="#16009c"/><stop offset="1" stop-color="#1d009c"/></linearGradient><linearGradient id="a226" gradientUnits="userSpaceOnUse" x1="1266" x2="1277"><stop offset="0" stop-color="#17009c"/><stop offset="1" stop-color="#1b009c"/></linearGradient><linearGradient id="a227" gradientUnits="userSpaceOnUse" x1="1269" x2="1274"><stop offset="0" stop-color="#18009c"/><stop offset="1" stop-color="#1a009c"/></linearGradient><linearGradient id="b0" gradientUnits="userSpaceOnUse" x1="1086" x2="1098"><stop offset="0" stop-color="#0f0"/><stop offset="1" stop-color="#0f0"/></linearGradient><linearGradient id="b1" gradientUnits="userSpaceOnUse" x1="1086" x2="1116"><stop offset="0" stop-color="#0f0"/><stop offset="1" stop-color="#0f0"/></linearGradient><linearGradient id="b2" gradientUnits="userSpaceOnUse" x1="1087" x2="1135"><stop offset="0" stop-color="#0f0"/><stop offset="1" stop-color="#0f0"/></linearGradient><linearGradient id="b3" gradientUnits="userSpaceOnUse" x1="1087" x2="1153"><stop offset="0" stop-color="#00ff01"/><stop offset="0.758" stop-color="#0f0"/><stop offset="1" stop-color="#27ff00"/></linearGradient><linearGradient id="b4" gradientUnits="userSpaceOnUse" x1="1088" x2="1171"><stop offset="0" stop-color="#00ff04"/><stop offset="0.602" stop-color="#01ff00"/><stop offset="1" stop-color="#58ff00"/></linearGradient><linearGradient id="b5" gradientUnits="userSpaceOnUse" x1="1089" x2="1190"><stop offset="0" stop-color="#00ff08"/><stop offset="0.495" stop-color="#02ff00"/><stop offset="0.911" stop-color="#75ff00"/><stop offset="1" stop-color="#92ff00"/></linearGradient><linearGradient id="b6" gradientUnits="userSpaceOnUse" x1="1089" x2="1208"><stop offset="0" stop-color="#00ff0c"/><stop offset="0.42" stop-color="#01ff03"/><stop offset="0.756" stop-color="#6fff00"/><stop offset="1" stop-color="#d1ff00"/></linearGradient><linearGradient id="b7" gradientUnits="userSpaceOnUse" x1="1090" x2="1227"><stop offset="0" stop-color="#00ff10"/><stop offset="0.365" stop-color="#03ff08"/><stop offset="0.657" stop-color="#72ff00"/><stop offset="0.905" stop-color="#e8ff00"/><stop offset="0.949" stop-color="#fffe00"/><stop offset="1" stop-color="#ffe400"/></linearGradient><linearGradient id="b8" gradientUnits="userSpaceOnUse" x1="1090" x2="1245"><stop offset="0" stop-color="#00ff14"/><stop offset="0.323" stop-color="#02ff0c"/><stop offset="0.581" stop-color="#71ff04"/><stop offset="0.8" stop-color="#e8ff00"/><stop offset="0.839" stop-color="#fffe00"/><stop offset="0.955" stop-color="#ffc200"/><stop offset="1" stop-color="#ffb000"/></linearGradient><linearGradient id="b9" gradientUnits="userSpaceOnUse" x1="1091" x2="1263"><stop offset="0" stop-color="#00ff18"/><stop offset="0.279" stop-color="#0f1"/><stop offset="0.5" stop-color="#68ff0a"/><stop offset="0.698" stop-color="#ddff02"/><stop offset="0.744" stop-color="#fdff00"/><stop offset="0.872" stop-color="#ffb900"/><stop offset="1" stop-color="#ff8b00"/></linearGradient><linearGradient id="b10" gradientUnits="userSpaceOnUse" x1="1092" x2="1282"><stop offset="0" stop-color="#00ff1c"/><stop offset="0.253" stop-color="#01ff16"/><stop offset="0.463" stop-color="#71ff0e"/><stop offset="0.642" stop-color="#eaff07"/><stop offset="0.674" stop-color="#fffc05"/><stop offset="0.768" stop-color="#ffc000"/><stop offset="0.905" stop-color="#ff8900"/><stop offset="1" stop-color="#ff6e00"/></linearGradient><linearGradient id="b11" gradientUnits="userSpaceOnUse" x1="1092" x2="1300"><stop offset="0" stop-color="#00ff20"/><stop offset="0.231" stop-color="#00ff1a"/><stop offset="0.423" stop-color="#71ff14"/><stop offset="0.587" stop-color="#eaff0d"/><stop offset="0.615" stop-color="#fffb0b"/><stop offset="0.702" stop-color="#ffc005"/><stop offset="0.827" stop-color="#f80"/><stop offset="1" stop-color="#ff5900"/></linearGradient><linearGradient id="b12" gradientUnits="userSpaceOnUse" x1="1093" x2="1319"><stop offset="0" stop-color="#00ff24"/><stop offset="0.212" stop-color="#02ff1f"/><stop offset="0.389" stop-color="#74ff19"/><stop offset="0.531" stop-color="#e7ff13"/><stop offset="0.558" stop-color="#ffff12"/><stop offset="0.637" stop-color="#ffc10a"/><stop offset="0.752" stop-color="#ff8903"/><stop offset="0.92" stop-color="#ff5700"/><stop offset="1" stop-color="#ff4700"/></linearGradient><linearGradient id="b13" gradientUnits="userSpaceOnUse" x1="1094" x2="1337"><stop offset="0" stop-color="#00ff29"/><stop offset="0.198" stop-color="#03ff24"/><stop offset="0.354" stop-color="#70ff1f"/><stop offset="0.486" stop-color="#e3ff19"/><stop offset="0.51" stop-color="#fcff18"/><stop offset="0.601" stop-color="#ffb90e"/><stop offset="0.708" stop-color="#ff8307"/><stop offset="0.872" stop-color="#ff5200"/><stop offset="1" stop-color="#ff3900"/></linearGradient><linearGradient id="b14" gradientUnits="userSpaceOnUse" x1="1094" x2="1355"><stop offset="0" stop-color="#00ff2d"/><stop offset="0.184" stop-color="#03ff29"/><stop offset="0.33" stop-color="#70ff24"/><stop offset="0.452" stop-color="#e4ff1f"/><stop offset="0.475" stop-color="#fdff1e"/><stop offset="0.559" stop-color="#ffb813"/><stop offset="0.659" stop-color="#ff820a"/><stop offset="0.812" stop-color="#ff5102"/><stop offset="1" stop-color="#ff2d00"/></linearGradient><linearGradient id="b15" gradientUnits="userSpaceOnUse" x1="1095" x2="1374"><stop offset="0" stop-color="#00ff31"/><stop offset="0.165" stop-color="#00ff2e"/><stop offset="0.294" stop-color="#66ff2a"/><stop offset="0.409" stop-color="#d9ff26"/><stop offset="0.444" stop-color="#fffc24"/><stop offset="0.509" stop-color="#ffbf19"/><stop offset="0.602" stop-color="#ff860f"/><stop offset="0.738" stop-color="#ff5506"/><stop offset="0.953" stop-color="#ff2a00"/><stop offset="1" stop-color="#ff2300"/></linearGradient><linearGradient id="b16" gradientUnits="userSpaceOnUse" x1="1095" x2="1392"><stop offset="0" stop-color="#00ff36"/><stop offset="0.162" stop-color="#04ff33"/><stop offset="0.29" stop-color="#73ff2f"/><stop offset="0.397" stop-color="#e9ff2c"/><stop offset="0.418" stop-color="#fffb2a"/><stop offset="0.478" stop-color="#ffbe1e"/><stop offset="0.566" stop-color="#ff8613"/><stop offset="0.694" stop-color="#ff5409"/><stop offset="0.896" stop-color="#ff2901"/><stop offset="1" stop-color="#ff1b00"/></linearGradient><linearGradient id="b17" gradientUnits="userSpaceOnUse" x1="1096" x2="1411"><stop offset="0" stop-color="#00ff3a"/><stop offset="0.146" stop-color="#00ff38"/><stop offset="0.267" stop-color="#70ff35"/><stop offset="0.368" stop-color="#e6ff32"/><stop offset="0.387" stop-color="#ffff32"/><stop offset="0.444" stop-color="#ffc024"/><stop offset="0.521" stop-color="#ff8a18"/><stop offset="0.635" stop-color="#ff590d"/><stop offset="0.813" stop-color="#ff2d04"/><stop offset="1" stop-color="#ff1300"/></linearGradient><linearGradient id="b18" gradientUnits="userSpaceOnUse" x1="1097" x2="1429"><stop offset="0" stop-color="#00ff3f"/><stop offset="0.139" stop-color="#02ff3d"/><stop offset="0.253" stop-color="#73ff3b"/><stop offset="0.349" stop-color="#ebff39"/><stop offset="0.367" stop-color="#fffa37"/><stop offset="0.422" stop-color="#ffbc28"/><stop offset="0.5" stop-color="#ff841b"/><stop offset="0.614" stop-color="#ff530f"/><stop offset="0.795" stop-color="#ff2805"/><stop offset="1" stop-color="#ff0d00"/></linearGradient><linearGradient id="b19" gradientUnits="userSpaceOnUse" x1="1097" x2="1447"><stop offset="0" stop-color="#0f4"/><stop offset="0.131" stop-color="#01ff42"/><stop offset="0.24" stop-color="#72ff41"/><stop offset="0.331" stop-color="#ebff3f"/><stop offset="0.343" stop-color="#fcff3f"/><stop offset="0.4" stop-color="#ffbb2e"/><stop offset="0.474" stop-color="#ff831f"/><stop offset="0.583" stop-color="#ff5212"/><stop offset="0.754" stop-color="#ff2707"/><stop offset="1" stop-color="#ff0700"/></linearGradient><linearGradient id="b20" gradientUnits="userSpaceOnUse" x1="1098" x2="1466"><stop offset="0" stop-color="#00ff48"/><stop offset="0.125" stop-color="#03ff48"/><stop offset="0.228" stop-color="#76ff47"/><stop offset="0.31" stop-color="#e8ff46"/><stop offset="0.326" stop-color="#fffc45"/><stop offset="0.375" stop-color="#ffbd34"/><stop offset="0.44" stop-color="#ff8724"/><stop offset="0.538" stop-color="#ff5617"/><stop offset="0.69" stop-color="#ff2b0b"/><stop offset="0.951" stop-color="#ff0700"/><stop offset="1" stop-color="#ff0200"/></linearGradient><linearGradient id="b21" gradientUnits="userSpaceOnUse" x1="1099" x2="1475"><stop offset="0" stop-color="#00ff4d"/><stop offset="0.117" stop-color="#00ff4d"/><stop offset="0.213" stop-color="#6bff4d"/><stop offset="0.298" stop-color="#e4ff4d"/><stop offset="0.314" stop-color="#feff4d"/><stop offset="0.362" stop-color="#ffbf3a"/><stop offset="0.426" stop-color="#ff8829"/><stop offset="0.521" stop-color="#ff571a"/><stop offset="0.67" stop-color="#ff2b0d"/><stop offset="0.92" stop-color="#ff0702"/><stop offset="1" stop-color="#f00"/></linearGradient><linearGradient id="b22" gradientUnits="userSpaceOnUse" x1="1099" x2="1474"><stop offset="0" stop-color="#00ff52"/><stop offset="0.117" stop-color="#00ff52"/><stop offset="0.203" stop-color="#5eff53"/><stop offset="0.288" stop-color="#d4ff54"/><stop offset="0.315" stop-color="#ffff54"/><stop offset="0.363" stop-color="#ffbe3f"/><stop offset="0.427" stop-color="#ff882d"/><stop offset="0.523" stop-color="#ff561d"/><stop offset="0.672" stop-color="#ff2b0f"/><stop offset="0.928" stop-color="#ff0604"/><stop offset="1" stop-color="#ff0001"/></linearGradient><linearGradient id="b23" gradientUnits="userSpaceOnUse" x1="1100" x2="1472"><stop offset="0" stop-color="#00ff57"/><stop offset="0.118" stop-color="#00ff58"/><stop offset="0.215" stop-color="#6eff59"/><stop offset="0.296" stop-color="#e1ff5b"/><stop offset="0.312" stop-color="#fbff5b"/><stop offset="0.371" stop-color="#ffb542"/><stop offset="0.441" stop-color="#ff7e2f"/><stop offset="0.543" stop-color="#ff4e1e"/><stop offset="0.704" stop-color="#ff2410"/><stop offset="0.984" stop-color="#ff0103"/><stop offset="1" stop-color="#ff0003"/></linearGradient><linearGradient id="b24" gradientUnits="userSpaceOnUse" x1="1100" x2="1470"><stop offset="0" stop-color="#00ff5c"/><stop offset="0.119" stop-color="#00ff5e"/><stop offset="0.211" stop-color="#67ff5f"/><stop offset="0.292" stop-color="#d9ff62"/><stop offset="0.314" stop-color="#fcff62"/><stop offset="0.368" stop-color="#ffba49"/><stop offset="0.432" stop-color="#ff8435"/><stop offset="0.53" stop-color="#ff5323"/><stop offset="0.686" stop-color="#ff2813"/><stop offset="0.951" stop-color="#ff0406"/><stop offset="1" stop-color="#ff0005"/></linearGradient><linearGradient id="b25" gradientUnits="userSpaceOnUse" x1="1101" x2="1468"><stop offset="0" stop-color="#00ff61"/><stop offset="0.12" stop-color="#01ff63"/><stop offset="0.218" stop-color="#71ff66"/><stop offset="0.3" stop-color="#e7ff69"/><stop offset="0.316" stop-color="#fffd69"/><stop offset="0.36" stop-color="#ffc252"/><stop offset="0.425" stop-color="#ff893c"/><stop offset="0.518" stop-color="#ff5829"/><stop offset="0.665" stop-color="#ff2c18"/><stop offset="0.916" stop-color="#ff0709"/><stop offset="1" stop-color="#ff0006"/></linearGradient><linearGradient id="b26" gradientUnits="userSpaceOnUse" x1="1102" x2="1466"><stop offset="0" stop-color="#0f6"/><stop offset="0.121" stop-color="#03ff69"/><stop offset="0.22" stop-color="#74ff6d"/><stop offset="0.302" stop-color="#ecff70"/><stop offset="0.313" stop-color="#feff71"/><stop offset="0.363" stop-color="#ffbe56"/><stop offset="0.429" stop-color="#ff863f"/><stop offset="0.527" stop-color="#ff542b"/><stop offset="0.681" stop-color="#ff2919"/><stop offset="0.945" stop-color="#ff040a"/><stop offset="1" stop-color="#ff0008"/></linearGradient><linearGradient id="b27" gradientUnits="userSpaceOnUse" x1="1102" x2="1464"><stop offset="0" stop-color="#00ff6b"/><stop offset="0.122" stop-color="#02ff6f"/><stop offset="0.221" stop-color="#74ff73"/><stop offset="0.304" stop-color="#ecff78"/><stop offset="0.315" stop-color="#ffff79"/><stop offset="0.359" stop-color="#ffc35e"/><stop offset="0.42" stop-color="#ff8d47"/><stop offset="0.514" stop-color="#ff5a31"/><stop offset="0.657" stop-color="#ff2e1e"/><stop offset="0.901" stop-color="#ff090e"/><stop offset="1" stop-color="#ff000a"/></linearGradient><linearGradient id="b28" gradientUnits="userSpaceOnUse" x1="1103" x2="1462"><stop offset="0" stop-color="#00ff70"/><stop offset="0.117" stop-color="#00ff75"/><stop offset="0.206" stop-color="#62ff79"/><stop offset="0.29" stop-color="#d7ff7e"/><stop offset="0.312" stop-color="#fbff80"/><stop offset="0.34" stop-color="#ffd96f"/><stop offset="0.396" stop-color="#ff9f54"/><stop offset="0.474" stop-color="#ff6c3d"/><stop offset="0.596" stop-color="#ff3d28"/><stop offset="0.797" stop-color="#ff1515"/><stop offset="1" stop-color="#ff000b"/></linearGradient><linearGradient id="b29" gradientUnits="userSpaceOnUse" x1="1103" x2="1460"><stop offset="0" stop-color="#00ff75"/><stop offset="0.123" stop-color="#03ff7b"/><stop offset="0.218" stop-color="#70ff81"/><stop offset="0.303" stop-color="#e9ff87"/><stop offset="0.314" stop-color="#fcff88"/><stop offset="0.37" stop-color="#ffb866"/><stop offset="0.437" stop-color="#ff814c"/><stop offset="0.538" stop-color="#ff5034"/><stop offset="0.695" stop-color="#ff2620"/><stop offset="0.964" stop-color="#ff030f"/><stop offset="1" stop-color="#ff000d"/></linearGradient><linearGradient id="b30" gradientUnits="userSpaceOnUse" x1="1104" x2="1459"><stop offset="0" stop-color="#00ff7b"/><stop offset="0.118" stop-color="#00ff81"/><stop offset="0.214" stop-color="#6cff87"/><stop offset="0.299" stop-color="#e5ff8e"/><stop offset="0.315" stop-color="#fffd8f"/><stop offset="0.361" stop-color="#ffc070"/><stop offset="0.423" stop-color="#ff8a55"/><stop offset="0.518" stop-color="#ff573b"/><stop offset="0.665" stop-color="#ff2c25"/><stop offset="0.913" stop-color="#ff0713"/><stop offset="1" stop-color="#ff000f"/></linearGradient><linearGradient id="b31" gradientUnits="userSpaceOnUse" x1="1105" x2="1457"><stop offset="0" stop-color="#00ff80"/><stop offset="0.119" stop-color="#02ff87"/><stop offset="0.216" stop-color="#70ff8e"/><stop offset="0.295" stop-color="#e1ff96"/><stop offset="0.312" stop-color="#fdff98"/><stop offset="0.364" stop-color="#ffbc74"/><stop offset="0.432" stop-color="#ff8356"/><stop offset="0.528" stop-color="#ff533d"/><stop offset="0.682" stop-color="#ff2826"/><stop offset="0.943" stop-color="#ff0413"/><stop offset="1" stop-color="#ff0010"/></linearGradient><linearGradient id="b32" gradientUnits="userSpaceOnUse" x1="1105" x2="1455"><stop offset="0" stop-color="#00ff86"/><stop offset="0.12" stop-color="#01ff8d"/><stop offset="0.217" stop-color="#70ff96"/><stop offset="0.297" stop-color="#e2ff9e"/><stop offset="0.314" stop-color="#feffa0"/><stop offset="0.36" stop-color="#ffc17e"/><stop offset="0.423" stop-color="#ff8a5f"/><stop offset="0.514" stop-color="#ff5944"/><stop offset="0.657" stop-color="#ff2e2c"/><stop offset="0.897" stop-color="#ff0918"/><stop offset="1" stop-color="#ff0012"/></linearGradient><linearGradient id="b33" gradientUnits="userSpaceOnUse" x1="1106" x2="1453"><stop offset="0" stop-color="#00ff8b"/><stop offset="0.121" stop-color="#03ff94"/><stop offset="0.219" stop-color="#73ff9d"/><stop offset="0.3" stop-color="#e7ffa6"/><stop offset="0.317" stop-color="#fffaa5"/><stop offset="0.363" stop-color="#ffbd82"/><stop offset="0.427" stop-color="#ff8763"/><stop offset="0.524" stop-color="#ff5546"/><stop offset="0.674" stop-color="#ff2a2d"/><stop offset="0.928" stop-color="#ff0618"/><stop offset="1" stop-color="#ff0014"/></linearGradient><linearGradient id="b34" gradientUnits="userSpaceOnUse" x1="1107" x2="1451"><stop offset="0" stop-color="#00ff91"/><stop offset="0.116" stop-color="#00ff9a"/><stop offset="0.203" stop-color="#60ffa3"/><stop offset="0.285" stop-color="#d1ffad"/><stop offset="0.314" stop-color="#fffeb0"/><stop offset="0.36" stop-color="#ffbf8a"/><stop offset="0.424" stop-color="#ff8869"/><stop offset="0.517" stop-color="#ff574b"/><stop offset="0.663" stop-color="#ff2c31"/><stop offset="0.913" stop-color="#ff071b"/><stop offset="1" stop-color="#ff0016"/></linearGradient><linearGradient id="b35" gradientUnits="userSpaceOnUse" x1="1107" x2="1449"><stop offset="0" stop-color="#00ff97"/><stop offset="0.117" stop-color="#00ffa1"/><stop offset="0.199" stop-color="#59ffa9"/><stop offset="0.281" stop-color="#c9ffb4"/><stop offset="0.316" stop-color="#fffdb8"/><stop offset="0.363" stop-color="#ffbe90"/><stop offset="0.427" stop-color="#ff876d"/><stop offset="0.52" stop-color="#ff564f"/><stop offset="0.667" stop-color="#ff2c34"/><stop offset="0.918" stop-color="#ff071d"/><stop offset="1" stop-color="#ff0018"/></linearGradient><linearGradient id="b36" gradientUnits="userSpaceOnUse" x1="1108" x2="1447"><stop offset="0" stop-color="#00ff9d"/><stop offset="0.118" stop-color="#00ffa8"/><stop offset="0.212" stop-color="#6bffb3"/><stop offset="0.295" stop-color="#e0ffbf"/><stop offset="0.313" stop-color="#fdffc2"/><stop offset="0.366" stop-color="#ffba94"/><stop offset="0.431" stop-color="#ff8471"/><stop offset="0.531" stop-color="#ff5250"/><stop offset="0.684" stop-color="#ff2834"/><stop offset="0.95" stop-color="#ff041d"/><stop offset="1" stop-color="#ff001a"/></linearGradient><linearGradient id="b37" gradientUnits="userSpaceOnUse" x1="1108" x2="1445"><stop offset="0" stop-color="#00ffa3"/><stop offset="0.119" stop-color="#00ffae"/><stop offset="0.208" stop-color="#63ffb9"/><stop offset="0.291" stop-color="#d7ffc6"/><stop offset="0.315" stop-color="#feffca"/><stop offset="0.362" stop-color="#ffbf9f"/><stop offset="0.427" stop-color="#ff8779"/><stop offset="0.522" stop-color="#ff5657"/><stop offset="0.671" stop-color="#ff2b39"/><stop offset="0.92" stop-color="#ff0721"/><stop offset="1" stop-color="#ff001c"/></linearGradient><linearGradient id="b38" gradientUnits="userSpaceOnUse" x1="1109" x2="1443"><stop offset="0" stop-color="#00ffa9"/><stop offset="0.12" stop-color="#01ffb5"/><stop offset="0.216" stop-color="#6effc2"/><stop offset="0.299" stop-color="#e6ffd0"/><stop offset="0.317" stop-color="#fffad0"/><stop offset="0.365" stop-color="#ffbba3"/><stop offset="0.431" stop-color="#ff847c"/><stop offset="0.527" stop-color="#ff545a"/><stop offset="0.677" stop-color="#ff2a3c"/><stop offset="0.934" stop-color="#ff0522"/><stop offset="1" stop-color="#ff001e"/></linearGradient><linearGradient id="b39" gradientUnits="userSpaceOnUse" x1="1110" x2="1441"><stop offset="0" stop-color="#00ffaf"/><stop offset="0.121" stop-color="#03ffbd"/><stop offset="0.218" stop-color="#72ffcb"/><stop offset="0.296" stop-color="#e2ffd9"/><stop offset="0.314" stop-color="#fffedc"/><stop offset="0.356" stop-color="#ffc4b1"/><stop offset="0.417" stop-color="#ff8e89"/><stop offset="0.508" stop-color="#ff5c64"/><stop offset="0.647" stop-color="#ff3044"/><stop offset="0.882" stop-color="#ff0b28"/><stop offset="1" stop-color="#ff0020"/></linearGradient><linearGradient id="b40" gradientUnits="userSpaceOnUse" x1="1110" x2="1439"><stop offset="0" stop-color="#00ffb5"/><stop offset="0.122" stop-color="#02ffc4"/><stop offset="0.219" stop-color="#71ffd3"/><stop offset="0.298" stop-color="#e3ffe2"/><stop offset="0.316" stop-color="#fffde4"/><stop offset="0.359" stop-color="#ffc3b8"/><stop offset="0.419" stop-color="#ff8d8e"/><stop offset="0.511" stop-color="#ff5b68"/><stop offset="0.65" stop-color="#ff2f46"/><stop offset="0.888" stop-color="#ff0a2a"/><stop offset="1" stop-color="#f02"/></linearGradient><linearGradient id="b41" gradientUnits="userSpaceOnUse" x1="1111" x2="1437"><stop offset="0" stop-color="#00ffbc"/><stop offset="0.117" stop-color="#00ffca"/><stop offset="0.196" stop-color="#56ffd7"/><stop offset="0.282" stop-color="#cbffe8"/><stop offset="0.313" stop-color="#fdffef"/><stop offset="0.368" stop-color="#ffb8b7"/><stop offset="0.436" stop-color="#ff818b"/><stop offset="0.534" stop-color="#ff5165"/><stop offset="0.693" stop-color="#ff2643"/><stop offset="0.963" stop-color="#ff0326"/><stop offset="1" stop-color="#ff0024"/></linearGradient><linearGradient id="b42" gradientUnits="userSpaceOnUse" x1="1112" x2="1435"><stop offset="0" stop-color="#00ffc2"/><stop offset="0.118" stop-color="#00ffd2"/><stop offset="0.217" stop-color="#71ffe3"/><stop offset="0.297" stop-color="#e4fff4"/><stop offset="0.316" stop-color="#fffbf5"/><stop offset="0.359" stop-color="#ffc1c5"/><stop offset="0.421" stop-color="#ff8b99"/><stop offset="0.514" stop-color="#ff5970"/><stop offset="0.656" stop-color="#ff2e4c"/><stop offset="0.898" stop-color="#ff092e"/><stop offset="1" stop-color="#ff0026"/></linearGradient><linearGradient id="b43" gradientUnits="userSpaceOnUse" x1="1112" x2="1433"><stop offset="0" stop-color="#00ffc9"/><stop offset="0.118" stop-color="#00ffd9"/><stop offset="0.206" stop-color="#61ffe9"/><stop offset="0.287" stop-color="#d1fffb"/><stop offset="0.318" stop-color="#fffafe"/><stop offset="0.361" stop-color="#ffc0cc"/><stop offset="0.424" stop-color="#ff8a9e"/><stop offset="0.517" stop-color="#ff5874"/><stop offset="0.66" stop-color="#ff2d4f"/><stop offset="0.903" stop-color="#ff0830"/><stop offset="1" stop-color="#ff0028"/></linearGradient><linearGradient id="b44" gradientUnits="userSpaceOnUse" x1="1113" x2="1431"><stop offset="0" stop-color="#00ffcf"/><stop offset="0.119" stop-color="#01ffe1"/><stop offset="0.214" stop-color="#6cfff3"/><stop offset="0.283" stop-color="#c9fbff"/><stop offset="0.321" stop-color="#fcf1ff"/><stop offset="0.384" stop-color="#ffa9c0"/><stop offset="0.459" stop-color="#ff7390"/><stop offset="0.572" stop-color="#ff4467"/><stop offset="0.755" stop-color="#ff1c43"/><stop offset="1" stop-color="#ff002a"/></linearGradient><linearGradient id="b45" gradientUnits="userSpaceOnUse" x1="1113" x2="1429"><stop offset="0" stop-color="#00ffd6"/><stop offset="0.12" stop-color="#00ffe9"/><stop offset="0.215" stop-color="#6cfffc"/><stop offset="0.329" stop-color="#fce7ff"/><stop offset="0.392" stop-color="#ffa2c1"/><stop offset="0.468" stop-color="#ff6f92"/><stop offset="0.582" stop-color="#ff4169"/><stop offset="0.772" stop-color="#ff1944"/><stop offset="1" stop-color="#ff002c"/></linearGradient><linearGradient id="b46" gradientUnits="userSpaceOnUse" x1="1114" x2="1427"><stop offset="0" stop-color="#0fd"/><stop offset="0.121" stop-color="#02fff1"/><stop offset="0.211" stop-color="#66faff"/><stop offset="0.339" stop-color="#ffdbfe"/><stop offset="0.39" stop-color="#ffa4ca"/><stop offset="0.466" stop-color="#ff7098"/><stop offset="0.581" stop-color="#ff416d"/><stop offset="0.767" stop-color="#ff1a47"/><stop offset="1" stop-color="#ff002f"/></linearGradient><linearGradient id="b47" gradientUnits="userSpaceOnUse" x1="1115" x2="1425"><stop offset="0" stop-color="#00ffe4"/><stop offset="0.116" stop-color="#00fff8"/><stop offset="0.181" stop-color="#42f8ff"/><stop offset="0.342" stop-color="#fcd3ff"/><stop offset="0.413" stop-color="#ff91bf"/><stop offset="0.503" stop-color="#ff5e8d"/><stop offset="0.639" stop-color="#ff3262"/><stop offset="0.865" stop-color="#ff0d3e"/><stop offset="1" stop-color="#ff0031"/></linearGradient><linearGradient id="b48" gradientUnits="userSpaceOnUse" x1="1115" x2="1423"><stop offset="0" stop-color="#00ffeb"/><stop offset="0.123" stop-color="#03fdff"/><stop offset="0.312" stop-color="#ced4ff"/><stop offset="0.351" stop-color="#fccaff"/><stop offset="0.422" stop-color="#ff8bc0"/><stop offset="0.513" stop-color="#ff5a8e"/><stop offset="0.656" stop-color="#ff2e62"/><stop offset="0.896" stop-color="#ff093d"/><stop offset="1" stop-color="#f03"/></linearGradient><linearGradient id="b49" gradientUnits="userSpaceOnUse" x1="1116" x2="1421"><stop offset="0" stop-color="#00fff2"/><stop offset="0.092" stop-color="#00fbff"/><stop offset="0.118" stop-color="#00f6ff"/><stop offset="0.302" stop-color="#bdcfff"/><stop offset="0.361" stop-color="#ffc1fe"/><stop offset="0.42" stop-color="#ff8cc8"/><stop offset="0.511" stop-color="#ff5a94"/><stop offset="0.649" stop-color="#ff3068"/><stop offset="0.879" stop-color="#ff0b42"/><stop offset="1" stop-color="#ff0036"/></linearGradient><linearGradient id="b50" gradientUnits="userSpaceOnUse" x1="1116" x2="1419"><stop offset="0" stop-color="#00fff9"/><stop offset="0.079" stop-color="#00f6ff"/><stop offset="0.119" stop-color="#0ef"/><stop offset="0.29" stop-color="#aacbff"/><stop offset="0.37" stop-color="#ffb8fe"/><stop offset="0.436" stop-color="#ff82c4"/><stop offset="0.528" stop-color="#ff5493"/><stop offset="0.673" stop-color="#ff2b66"/><stop offset="0.917" stop-color="#ff0740"/><stop offset="1" stop-color="#ff0038"/></linearGradient><linearGradient id="b51" gradientUnits="userSpaceOnUse" x1="1117" x2="1417"><stop offset="0" stop-color="#00fdff"/><stop offset="0.12" stop-color="#00e7ff"/><stop offset="0.327" stop-color="#cabcff"/><stop offset="0.373" stop-color="#fcb2ff"/><stop offset="0.453" stop-color="#ff77bf"/><stop offset="0.553" stop-color="#ff4b8e"/><stop offset="0.713" stop-color="#ff2361"/><stop offset="0.98" stop-color="#ff013c"/><stop offset="1" stop-color="#ff003b"/></linearGradient><linearGradient id="b52" gradientUnits="userSpaceOnUse" x1="1118" x2="1416"><stop offset="0" stop-color="#00f5ff"/><stop offset="0.121" stop-color="#02dfff"/><stop offset="0.336" stop-color="#cfb4ff"/><stop offset="0.383" stop-color="#ffa9fe"/><stop offset="0.45" stop-color="#ff78c6"/><stop offset="0.55" stop-color="#ff4b93"/><stop offset="0.705" stop-color="#ff2466"/><stop offset="0.96" stop-color="#ff0341"/><stop offset="1" stop-color="#ff003d"/></linearGradient><linearGradient id="b53" gradientUnits="userSpaceOnUse" x1="1118" x2="1414"><stop offset="0" stop-color="#00efff"/><stop offset="0.122" stop-color="#01d9ff"/><stop offset="0.338" stop-color="#c9aeff"/><stop offset="0.392" stop-color="#ffa2fe"/><stop offset="0.459" stop-color="#ff73c7"/><stop offset="0.561" stop-color="#ff4894"/><stop offset="0.716" stop-color="#ff2268"/><stop offset="0.973" stop-color="#ff0142"/><stop offset="1" stop-color="#ff003f"/></linearGradient><linearGradient id="b54" gradientUnits="userSpaceOnUse" x1="1119" x2="1412"><stop offset="0" stop-color="#00e8ff"/><stop offset="0.123" stop-color="#03d2ff"/><stop offset="0.348" stop-color="#cea6ff"/><stop offset="0.403" stop-color="#ff98fb"/><stop offset="0.478" stop-color="#ff69c2"/><stop offset="0.587" stop-color="#ff3f8f"/><stop offset="0.758" stop-color="#ff1b63"/><stop offset="1" stop-color="#ff0042"/></linearGradient><linearGradient id="b55" gradientUnits="userSpaceOnUse" x1="1120" x2="1410"><stop offset="0" stop-color="#00e1ff"/><stop offset="0.117" stop-color="#00cdff"/><stop offset="0.338" stop-color="#bfa3ff"/><stop offset="0.407" stop-color="#ff95fe"/><stop offset="0.483" stop-color="#ff66c5"/><stop offset="0.593" stop-color="#ff3e92"/><stop offset="0.766" stop-color="#ff1a65"/><stop offset="1" stop-color="#f04"/></linearGradient><linearGradient id="b56" gradientUnits="userSpaceOnUse" x1="1120" x2="1408"><stop offset="0" stop-color="#00dbff"/><stop offset="0.118" stop-color="#00c7ff"/><stop offset="0.333" stop-color="#b39fff"/><stop offset="0.417" stop-color="#ff8efe"/><stop offset="0.493" stop-color="#ff62c6"/><stop offset="0.604" stop-color="#ff3b93"/><stop offset="0.778" stop-color="#ff1867"/><stop offset="1" stop-color="#ff0047"/></linearGradient><linearGradient id="b57" gradientUnits="userSpaceOnUse" x1="1121" x2="1406"><stop offset="0" stop-color="#00d5ff"/><stop offset="0.119" stop-color="#00c1ff"/><stop offset="0.365" stop-color="#ca94ff"/><stop offset="0.428" stop-color="#ff86fb"/><stop offset="0.505" stop-color="#ff5cc5"/><stop offset="0.625" stop-color="#ff3591"/><stop offset="0.807" stop-color="#ff1465"/><stop offset="1" stop-color="#ff004a"/></linearGradient><linearGradient id="b58" gradientUnits="userSpaceOnUse" x1="1121" x2="1404"><stop offset="0" stop-color="#00d0ff"/><stop offset="0.12" stop-color="#00bcff"/><stop offset="0.367" stop-color="#c590ff"/><stop offset="0.438" stop-color="#ff80fb"/><stop offset="0.523" stop-color="#ff56c2"/><stop offset="0.643" stop-color="#ff3190"/><stop offset="0.834" stop-color="#ff1064"/><stop offset="1" stop-color="#ff004d"/></linearGradient><linearGradient id="b59" gradientUnits="userSpaceOnUse" x1="1122" x2="1402"><stop offset="0" stop-color="#00caff"/><stop offset="0.121" stop-color="#01b6ff"/><stop offset="0.386" stop-color="#cf88ff"/><stop offset="0.443" stop-color="#ff7dff"/><stop offset="0.529" stop-color="#ff53c5"/><stop offset="0.65" stop-color="#ff2f92"/><stop offset="0.843" stop-color="#ff0f65"/><stop offset="1" stop-color="#ff004f"/></linearGradient><linearGradient id="b60" gradientUnits="userSpaceOnUse" x1="1123" x2="1400"><stop offset="0" stop-color="#00c4ff"/><stop offset="0.123" stop-color="#03b1ff"/><stop offset="0.39" stop-color="#cd83ff"/><stop offset="0.455" stop-color="#ff75fc"/><stop offset="0.542" stop-color="#ff4ec3"/><stop offset="0.671" stop-color="#ff2a90"/><stop offset="0.874" stop-color="#ff0b64"/><stop offset="1" stop-color="#ff0052"/></linearGradient><linearGradient id="b61" gradientUnits="userSpaceOnUse" x1="1123" x2="1398"><stop offset="0" stop-color="#00bfff"/><stop offset="0.124" stop-color="#02acff"/><stop offset="0.4" stop-color="#ce7eff"/><stop offset="0.465" stop-color="#ff70fc"/><stop offset="0.553" stop-color="#ff4bc4"/><stop offset="0.684" stop-color="#ff2892"/><stop offset="0.887" stop-color="#ff0a65"/><stop offset="1" stop-color="#f05"/></linearGradient><linearGradient id="b62" gradientUnits="userSpaceOnUse" x1="1124" x2="1396"><stop offset="0" stop-color="#00baff"/><stop offset="0.118" stop-color="#00a8ff"/><stop offset="0.375" stop-color="#b67eff"/><stop offset="0.471" stop-color="#ff6dff"/><stop offset="0.559" stop-color="#ff48c7"/><stop offset="0.691" stop-color="#ff2794"/><stop offset="0.897" stop-color="#ff0967"/><stop offset="1" stop-color="#ff0058"/></linearGradient><linearGradient id="b63" gradientUnits="userSpaceOnUse" x1="1125" x2="1394"><stop offset="0" stop-color="#00b5ff"/><stop offset="0.119" stop-color="#00a4ff"/><stop offset="0.409" stop-color="#ca75ff"/><stop offset="0.483" stop-color="#ff66fc"/><stop offset="0.58" stop-color="#ff41c2"/><stop offset="0.721" stop-color="#ff2190"/><stop offset="0.937" stop-color="#ff0564"/><stop offset="1" stop-color="#ff005b"/></linearGradient><linearGradient id="b64" gradientUnits="userSpaceOnUse" x1="1125" x2="1392"><stop offset="0" stop-color="#00b1ff"/><stop offset="0.12" stop-color="#009fff"/><stop offset="0.412" stop-color="#c571ff"/><stop offset="0.494" stop-color="#ff62fc"/><stop offset="0.592" stop-color="#ff3ec3"/><stop offset="0.734" stop-color="#ff1f91"/><stop offset="0.959" stop-color="#ff0364"/><stop offset="1" stop-color="#ff005e"/></linearGradient><linearGradient id="b65" gradientUnits="userSpaceOnUse" x1="1126" x2="1390"><stop offset="0" stop-color="#00acff"/><stop offset="0.121" stop-color="#019bff"/><stop offset="0.432" stop-color="#ce6bff"/><stop offset="0.5" stop-color="#ff5fff"/><stop offset="0.598" stop-color="#ff3cc6"/><stop offset="0.742" stop-color="#ff1d93"/><stop offset="0.962" stop-color="#ff0367"/><stop offset="1" stop-color="#ff0061"/></linearGradient><linearGradient id="b66" gradientUnits="userSpaceOnUse" x1="1126" x2="1388"><stop offset="0" stop-color="#00a8ff"/><stop offset="0.122" stop-color="#0197ff"/><stop offset="0.435" stop-color="#ca67ff"/><stop offset="0.511" stop-color="#ff5aff"/><stop offset="0.611" stop-color="#ff39c7"/><stop offset="0.756" stop-color="#ff1b94"/><stop offset="0.985" stop-color="#ff0167"/><stop offset="1" stop-color="#ff0065"/></linearGradient><linearGradient id="b67" gradientUnits="userSpaceOnUse" x1="1127" x2="1386"><stop offset="0" stop-color="#00a4ff"/><stop offset="0.124" stop-color="#0293ff"/><stop offset="0.448" stop-color="#cd62ff"/><stop offset="0.525" stop-color="#ff55fc"/><stop offset="0.633" stop-color="#ff33c2"/><stop offset="0.788" stop-color="#ff1690"/><stop offset="1" stop-color="#ff0068"/></linearGradient><linearGradient id="b68" gradientUnits="userSpaceOnUse" x1="1128" x2="1384"><stop offset="0" stop-color="#009fff"/><stop offset="0.125" stop-color="#048fff"/><stop offset="0.461" stop-color="#d15dff"/><stop offset="0.531" stop-color="#ff52ff"/><stop offset="0.641" stop-color="#ff31c5"/><stop offset="0.797" stop-color="#ff1592"/><stop offset="1" stop-color="#ff006b"/></linearGradient><linearGradient id="b69" gradientUnits="userSpaceOnUse" x1="1128" x2="1382"><stop offset="0" stop-color="#009cff"/><stop offset="0.126" stop-color="#038bff"/><stop offset="0.465" stop-color="#cc5aff"/><stop offset="0.543" stop-color="#ff4eff"/><stop offset="0.654" stop-color="#ff2fc5"/><stop offset="0.811" stop-color="#ff1393"/><stop offset="1" stop-color="#ff006f"/></linearGradient><linearGradient id="b70" gradientUnits="userSpaceOnUse" x1="1129" x2="1380"><stop offset="0" stop-color="#0097ff"/><stop offset="0.12" stop-color="#08f"/><stop offset="0.47" stop-color="#cb57ff"/><stop offset="0.558" stop-color="#ff49fc"/><stop offset="0.669" stop-color="#ff2bc4"/><stop offset="0.837" stop-color="#ff1091"/><stop offset="1" stop-color="#ff0072"/></linearGradient><linearGradient id="b71" gradientUnits="userSpaceOnUse" x1="1129" x2="1378"><stop offset="0" stop-color="#0094ff"/><stop offset="0.129" stop-color="#0384ff"/><stop offset="0.49" stop-color="#d052ff"/><stop offset="0.57" stop-color="#ff45fc"/><stop offset="0.691" stop-color="#ff27c2"/><stop offset="0.867" stop-color="#ff0c8f"/><stop offset="1" stop-color="#ff0076"/></linearGradient><linearGradient id="b72" gradientUnits="userSpaceOnUse" x1="1130" x2="1376"><stop offset="0" stop-color="#0090ff"/><stop offset="0.122" stop-color="#0181ff"/><stop offset="0.496" stop-color="#cf4fff"/><stop offset="0.577" stop-color="#ff43ff"/><stop offset="0.699" stop-color="#ff25c4"/><stop offset="0.878" stop-color="#ff0b91"/><stop offset="1" stop-color="#ff007a"/></linearGradient><linearGradient id="b73" gradientUnits="userSpaceOnUse" x1="1131" x2="1374"><stop offset="0" stop-color="#008cff"/><stop offset="0.123" stop-color="#027eff"/><stop offset="0.502" stop-color="#cd4cff"/><stop offset="0.593" stop-color="#ff3efc"/><stop offset="0.716" stop-color="#ff22c4"/><stop offset="0.897" stop-color="#ff0991"/><stop offset="1" stop-color="#ff007d"/></linearGradient><linearGradient id="b74" gradientUnits="userSpaceOnUse" x1="1131" x2="1373"><stop offset="0" stop-color="#0089ff"/><stop offset="0.124" stop-color="#017bff"/><stop offset="0.512" stop-color="#ce48ff"/><stop offset="0.603" stop-color="#ff3bfc"/><stop offset="0.727" stop-color="#ff20c4"/><stop offset="0.909" stop-color="#ff0792"/><stop offset="1" stop-color="#ff0080"/></linearGradient><linearGradient id="b75" gradientUnits="userSpaceOnUse" x1="1132" x2="1371"><stop offset="0" stop-color="#0086ff"/><stop offset="0.126" stop-color="#0377ff"/><stop offset="0.527" stop-color="#d144ff"/><stop offset="0.611" stop-color="#ff39ff"/><stop offset="0.736" stop-color="#ff1ec6"/><stop offset="0.921" stop-color="#ff0694"/><stop offset="1" stop-color="#ff0084"/></linearGradient><linearGradient id="b76" gradientUnits="userSpaceOnUse" x1="1133" x2="1369"><stop offset="0" stop-color="#0082ff"/><stop offset="0.119" stop-color="#0075ff"/><stop offset="0.525" stop-color="#ca42ff"/><stop offset="0.627" stop-color="#ff34fc"/><stop offset="0.763" stop-color="#ff1ac3"/><stop offset="0.958" stop-color="#ff0390"/><stop offset="1" stop-color="#f08"/></linearGradient><linearGradient id="b77" gradientUnits="userSpaceOnUse" x1="1133" x2="1367"><stop offset="0" stop-color="#007fff"/><stop offset="0.128" stop-color="#0371ff"/><stop offset="0.547" stop-color="#d03eff"/><stop offset="0.641" stop-color="#ff31fd"/><stop offset="0.778" stop-color="#ff18c3"/><stop offset="0.974" stop-color="#ff0191"/><stop offset="1" stop-color="#ff008c"/></linearGradient><linearGradient id="b78" gradientUnits="userSpaceOnUse" x1="1134" x2="1365"><stop offset="0" stop-color="#007cff"/><stop offset="0.121" stop-color="#016fff"/><stop offset="0.554" stop-color="#ce3bff"/><stop offset="0.649" stop-color="#ff2fff"/><stop offset="0.788" stop-color="#ff16c5"/><stop offset="0.987" stop-color="#ff0093"/><stop offset="1" stop-color="#ff0090"/></linearGradient><linearGradient id="b79" gradientUnits="userSpaceOnUse" x1="1134" x2="1363"><stop offset="0" stop-color="#0079ff"/><stop offset="0.122" stop-color="#006cff"/><stop offset="0.559" stop-color="#ca39ff"/><stop offset="0.664" stop-color="#ff2cff"/><stop offset="0.803" stop-color="#ff14c6"/><stop offset="1" stop-color="#ff0095"/></linearGradient><linearGradient id="b80" gradientUnits="userSpaceOnUse" x1="1135" x2="1361"><stop offset="0" stop-color="#0076ff"/><stop offset="0.124" stop-color="#0169ff"/><stop offset="0.575" stop-color="#cd36ff"/><stop offset="0.681" stop-color="#ff28fd"/><stop offset="0.832" stop-color="#ff10c2"/><stop offset="1" stop-color="#f09"/></linearGradient><linearGradient id="b81" gradientUnits="userSpaceOnUse" x1="1136" x2="1359"><stop offset="0" stop-color="#0073ff"/><stop offset="0.126" stop-color="#0366ff"/><stop offset="0.592" stop-color="#d032ff"/><stop offset="0.691" stop-color="#ff26ff"/><stop offset="0.843" stop-color="#ff0fc4"/><stop offset="1" stop-color="#ff009d"/></linearGradient><linearGradient id="b82" gradientUnits="userSpaceOnUse" x1="1136" x2="1357"><stop offset="0" stop-color="#0071ff"/><stop offset="0.127" stop-color="#0264ff"/><stop offset="0.597" stop-color="#cc31ff"/><stop offset="0.706" stop-color="#ff24ff"/><stop offset="0.86" stop-color="#ff0dc5"/><stop offset="1" stop-color="#ff00a2"/></linearGradient><linearGradient id="b83" gradientUnits="userSpaceOnUse" x1="1137" x2="1355"><stop offset="0" stop-color="#006eff"/><stop offset="0.128" stop-color="#0361ff"/><stop offset="0.615" stop-color="#cf2dff"/><stop offset="0.725" stop-color="#ff20fd"/><stop offset="0.881" stop-color="#ff0ac4"/><stop offset="1" stop-color="#ff00a7"/></linearGradient><linearGradient id="b84" gradientUnits="userSpaceOnUse" x1="1138" x2="1353"><stop offset="0" stop-color="#006bff"/><stop offset="0.121" stop-color="#015fff"/><stop offset="0.623" stop-color="#ce2bff"/><stop offset="0.735" stop-color="#ff1eff"/><stop offset="0.893" stop-color="#ff09c6"/><stop offset="1" stop-color="#ff00ab"/></linearGradient><linearGradient id="b85" gradientUnits="userSpaceOnUse" x1="1138" x2="1351"><stop offset="0" stop-color="#0069ff"/><stop offset="0.131" stop-color="#045cff"/><stop offset="0.638" stop-color="#ce28ff"/><stop offset="0.751" stop-color="#ff1cff"/><stop offset="0.92" stop-color="#ff06c4"/><stop offset="1" stop-color="#ff00b0"/></linearGradient><linearGradient id="b86" gradientUnits="userSpaceOnUse" x1="1139" x2="1349"><stop offset="0" stop-color="#06f"/><stop offset="0.124" stop-color="#015bff"/><stop offset="0.648" stop-color="#cd26ff"/><stop offset="0.771" stop-color="#ff19fd"/><stop offset="0.943" stop-color="#ff04c4"/><stop offset="1" stop-color="#ff00b5"/></linearGradient><linearGradient id="b87" gradientUnits="userSpaceOnUse" x1="1139" x2="1347"><stop offset="0" stop-color="#0064ff"/><stop offset="0.125" stop-color="#0159ff"/><stop offset="0.663" stop-color="#cd24ff"/><stop offset="0.788" stop-color="#ff16fd"/><stop offset="0.962" stop-color="#ff02c4"/><stop offset="1" stop-color="#f0b"/></linearGradient><linearGradient id="b88" gradientUnits="userSpaceOnUse" x1="1140" x2="1345"><stop offset="0" stop-color="#0061ff"/><stop offset="0.127" stop-color="#0256ff"/><stop offset="0.673" stop-color="#c2f"/><stop offset="0.8" stop-color="#ff14ff"/><stop offset="0.976" stop-color="#ff01c6"/><stop offset="1" stop-color="#ff00c0"/></linearGradient><linearGradient id="b89" gradientUnits="userSpaceOnUse" x1="1141" x2="1343"><stop offset="0" stop-color="#005fff"/><stop offset="0.129" stop-color="#0354ff"/><stop offset="0.693" stop-color="#cf1fff"/><stop offset="0.822" stop-color="#ff12fd"/><stop offset="1" stop-color="#ff00c5"/></linearGradient><linearGradient id="b90" gradientUnits="userSpaceOnUse" x1="1141" x2="1341"><stop offset="0" stop-color="#005dff"/><stop offset="0.13" stop-color="#0252ff"/><stop offset="0.71" stop-color="#cf1cff"/><stop offset="0.84" stop-color="#ff0ffd"/><stop offset="1" stop-color="#ff00cb"/></linearGradient><linearGradient id="b91" gradientUnits="userSpaceOnUse" x1="1142" x2="1339"><stop offset="0" stop-color="#005aff"/><stop offset="0.132" stop-color="#044fff"/><stop offset="0.731" stop-color="#d21aff"/><stop offset="0.863" stop-color="#ff0dfb"/><stop offset="1" stop-color="#ff00d1"/></linearGradient><linearGradient id="b92" gradientUnits="userSpaceOnUse" x1="1142" x2="1337"><stop offset="0" stop-color="#0058ff"/><stop offset="0.133" stop-color="#034eff"/><stop offset="0.738" stop-color="#ce18ff"/><stop offset="0.882" stop-color="#ff0afb"/><stop offset="1" stop-color="#ff00d6"/></linearGradient><linearGradient id="b93" gradientUnits="userSpaceOnUse" x1="1143" x2="1335"><stop offset="0" stop-color="#0056ff"/><stop offset="0.135" stop-color="#044bff"/><stop offset="0.76" stop-color="#d116ff"/><stop offset="0.896" stop-color="#ff09fd"/><stop offset="1" stop-color="#ff00dc"/></linearGradient><linearGradient id="b94" gradientUnits="userSpaceOnUse" x1="1144" x2="1333"><stop offset="0" stop-color="#0054ff"/><stop offset="0.127" stop-color="#024aff"/><stop offset="0.772" stop-color="#cf14ff"/><stop offset="0.921" stop-color="#ff06fb"/><stop offset="1" stop-color="#ff00e3"/></linearGradient><linearGradient id="b95" gradientUnits="userSpaceOnUse" x1="1144" x2="1331"><stop offset="0" stop-color="#0052ff"/><stop offset="0.128" stop-color="#0148ff"/><stop offset="0.781" stop-color="#cc13ff"/><stop offset="0.941" stop-color="#ff04fb"/><stop offset="1" stop-color="#ff00e9"/></linearGradient><linearGradient id="b96" gradientUnits="userSpaceOnUse" x1="1145" x2="1330"><stop offset="0" stop-color="#0050ff"/><stop offset="0.13" stop-color="#0246ff"/><stop offset="0.8" stop-color="#cf10ff"/><stop offset="0.951" stop-color="#ff03fd"/><stop offset="1" stop-color="#f0e"/></linearGradient><linearGradient id="b97" gradientUnits="userSpaceOnUse" x1="1146" x2="1328"><stop offset="0" stop-color="#004eff"/><stop offset="0.132" stop-color="#0344ff"/><stop offset="0.824" stop-color="#d10eff"/><stop offset="0.978" stop-color="#ff01fb"/><stop offset="1" stop-color="#ff00f5"/></linearGradient><linearGradient id="b98" gradientUnits="userSpaceOnUse" x1="1146" x2="1326"><stop offset="0" stop-color="#004cff"/><stop offset="0.133" stop-color="#0343ff"/><stop offset="0.833" stop-color="#ce0dff"/><stop offset="1" stop-color="#ff00fb"/></linearGradient><linearGradient id="b99" gradientUnits="userSpaceOnUse" x1="1147" x2="1324"><stop offset="0" stop-color="#004aff"/><stop offset="0.136" stop-color="#0441ff"/><stop offset="0.859" stop-color="#d00aff"/><stop offset="1" stop-color="#fb00ff"/></linearGradient><linearGradient id="b100" gradientUnits="userSpaceOnUse" x1="1147" x2="1322"><stop offset="0" stop-color="#0048ff"/><stop offset="0.137" stop-color="#033fff"/><stop offset="0.88" stop-color="#d108ff"/><stop offset="1" stop-color="#f500ff"/></linearGradient><linearGradient id="b101" gradientUnits="userSpaceOnUse" x1="1148" x2="1320"><stop offset="0" stop-color="#0046ff"/><stop offset="0.128" stop-color="#013eff"/><stop offset="0.884" stop-color="#cc08ff"/><stop offset="1" stop-color="#e0f"/></linearGradient><linearGradient id="b102" gradientUnits="userSpaceOnUse" x1="1149" x2="1318"><stop offset="0" stop-color="#0045ff"/><stop offset="0.13" stop-color="#023cff"/><stop offset="0.911" stop-color="#ce05ff"/><stop offset="1" stop-color="#e700ff"/></linearGradient><linearGradient id="b103" gradientUnits="userSpaceOnUse" x1="1149" x2="1316"><stop offset="0" stop-color="#0043ff"/><stop offset="0.132" stop-color="#023bff"/><stop offset="0.934" stop-color="#cf04ff"/><stop offset="1" stop-color="#e100ff"/></linearGradient><linearGradient id="b104" gradientUnits="userSpaceOnUse" x1="1150" x2="1314"><stop offset="0" stop-color="#0041ff"/><stop offset="0.134" stop-color="#0339ff"/><stop offset="0.951" stop-color="#ce02ff"/><stop offset="1" stop-color="#db00ff"/></linearGradient><linearGradient id="b105" gradientUnits="userSpaceOnUse" x1="1150" x2="1312"><stop offset="0" stop-color="#0040ff"/><stop offset="0.136" stop-color="#0238ff"/><stop offset="0.975" stop-color="#ce01ff"/><stop offset="1" stop-color="#d500ff"/></linearGradient><linearGradient id="b106" gradientUnits="userSpaceOnUse" x1="1151" x2="1310"><stop offset="0" stop-color="#003eff"/><stop offset="0.138" stop-color="#0336ff"/><stop offset="1" stop-color="#cf00ff"/></linearGradient><linearGradient id="b107" gradientUnits="userSpaceOnUse" x1="1152" x2="1308"><stop offset="0" stop-color="#003cff"/><stop offset="0.141" stop-color="#0434ff"/><stop offset="1" stop-color="#c900ff"/></linearGradient><linearGradient id="b108" gradientUnits="userSpaceOnUse" x1="1152" x2="1306"><stop offset="0" stop-color="#003bff"/><stop offset="0.143" stop-color="#0433ff"/><stop offset="1" stop-color="#c300ff"/></linearGradient><linearGradient id="b109" gradientUnits="userSpaceOnUse" x1="1153" x2="1304"><stop offset="0" stop-color="#0039ff"/><stop offset="0.132" stop-color="#0232ff"/><stop offset="1" stop-color="#be00ff"/></linearGradient><linearGradient id="b110" gradientUnits="userSpaceOnUse" x1="1154" x2="1302"><stop offset="0" stop-color="#0038ff"/><stop offset="0.135" stop-color="#0330ff"/><stop offset="1" stop-color="#b800ff"/></linearGradient><linearGradient id="b111" gradientUnits="userSpaceOnUse" x1="1154" x2="1300"><stop offset="0" stop-color="#0036ff"/><stop offset="0.137" stop-color="#022fff"/><stop offset="1" stop-color="#b300ff"/></linearGradient><linearGradient id="b112" gradientUnits="userSpaceOnUse" x1="1155" x2="1298"><stop offset="0" stop-color="#0035ff"/><stop offset="0.14" stop-color="#032eff"/><stop offset="1" stop-color="#ae00ff"/></linearGradient><linearGradient id="b113" gradientUnits="userSpaceOnUse" x1="1155" x2="1296"><stop offset="0" stop-color="#03f"/><stop offset="0.142" stop-color="#032cff"/><stop offset="1" stop-color="#a900ff"/></linearGradient><linearGradient id="b114" gradientUnits="userSpaceOnUse" x1="1156" x2="1294"><stop offset="0" stop-color="#0032ff"/><stop offset="0.145" stop-color="#032bff"/><stop offset="1" stop-color="#a400ff"/></linearGradient><linearGradient id="b115" gradientUnits="userSpaceOnUse" x1="1157" x2="1292"><stop offset="0" stop-color="#0030ff"/><stop offset="0.148" stop-color="#042aff"/><stop offset="1" stop-color="#9f00ff"/></linearGradient><linearGradient id="b116" gradientUnits="userSpaceOnUse" x1="1157" x2="1290"><stop offset="0" stop-color="#002fff"/><stop offset="0.15" stop-color="#0428ff"/><stop offset="1" stop-color="#9a00ff"/></linearGradient><linearGradient id="b117" gradientUnits="userSpaceOnUse" x1="1158" x2="1289"><stop offset="0" stop-color="#002eff"/><stop offset="0.137" stop-color="#0228ff"/><stop offset="1" stop-color="#9700ff"/></linearGradient><linearGradient id="b118" gradientUnits="userSpaceOnUse" x1="1159" x2="1287"><stop offset="0" stop-color="#002cff"/><stop offset="0.141" stop-color="#0326ff"/><stop offset="1" stop-color="#9200ff"/></linearGradient><linearGradient id="b119" gradientUnits="userSpaceOnUse" x1="1159" x2="1285"><stop offset="0" stop-color="#002bff"/><stop offset="0.143" stop-color="#0325ff"/><stop offset="1" stop-color="#8e00ff"/></linearGradient><linearGradient id="b120" gradientUnits="userSpaceOnUse" x1="1160" x2="1283"><stop offset="0" stop-color="#002aff"/><stop offset="0.146" stop-color="#0324ff"/><stop offset="1" stop-color="#8900ff"/></linearGradient><linearGradient id="b121" gradientUnits="userSpaceOnUse" x1="1160" x2="1281"><stop offset="0" stop-color="#0029ff"/><stop offset="0.149" stop-color="#0323ff"/><stop offset="1" stop-color="#8500ff"/></linearGradient><linearGradient id="b122" gradientUnits="userSpaceOnUse" x1="1161" x2="1279"><stop offset="0" stop-color="#0028ff"/><stop offset="0.153" stop-color="#0422ff"/><stop offset="1" stop-color="#8100ff"/></linearGradient><linearGradient id="b123" gradientUnits="userSpaceOnUse" x1="1162" x2="1277"><stop offset="0" stop-color="#0026ff"/><stop offset="0.139" stop-color="#0221ff"/><stop offset="1" stop-color="#7d00ff"/></linearGradient><linearGradient id="b124" gradientUnits="userSpaceOnUse" x1="1162" x2="1275"><stop offset="0" stop-color="#0025ff"/><stop offset="0.159" stop-color="#041fff"/><stop offset="1" stop-color="#7900ff"/></linearGradient><linearGradient id="b125" gradientUnits="userSpaceOnUse" x1="1163" x2="1273"><stop offset="0" stop-color="#0024ff"/><stop offset="0.145" stop-color="#031fff"/><stop offset="1" stop-color="#7500ff"/></linearGradient><linearGradient id="b126" gradientUnits="userSpaceOnUse" x1="1163" x2="1271"><stop offset="0" stop-color="#0023ff"/><stop offset="0.167" stop-color="#041dff"/><stop offset="1" stop-color="#7100ff"/></linearGradient><linearGradient id="b127" gradientUnits="userSpaceOnUse" x1="1164" x2="1269"><stop offset="0" stop-color="#02f"/><stop offset="0.171" stop-color="#051cff"/><stop offset="1" stop-color="#6d00ff"/></linearGradient><linearGradient id="b128" gradientUnits="userSpaceOnUse" x1="1165" x2="1267"><stop offset="0" stop-color="#0020ff"/><stop offset="0.157" stop-color="#041bff"/><stop offset="1" stop-color="#6900ff"/></linearGradient><linearGradient id="b129" gradientUnits="userSpaceOnUse" x1="1165" x2="1265"><stop offset="0" stop-color="#0020ff"/><stop offset="0.16" stop-color="#031bff"/><stop offset="1" stop-color="#6500ff"/></linearGradient><linearGradient id="b130" gradientUnits="userSpaceOnUse" x1="1166" x2="1263"><stop offset="0" stop-color="#001eff"/><stop offset="0.165" stop-color="#0419ff"/><stop offset="1" stop-color="#6200ff"/></linearGradient><linearGradient id="b131" gradientUnits="userSpaceOnUse" x1="1167" x2="1261"><stop offset="0" stop-color="#001dff"/><stop offset="0.17" stop-color="#0518ff"/><stop offset="1" stop-color="#5e00ff"/></linearGradient><linearGradient id="b132" gradientUnits="userSpaceOnUse" x1="1167" x2="1259"><stop offset="0" stop-color="#001cff"/><stop offset="0.174" stop-color="#0417ff"/><stop offset="1" stop-color="#5b00ff"/></linearGradient><linearGradient id="b133" gradientUnits="userSpaceOnUse" x1="1168" x2="1257"><stop offset="0" stop-color="#001bff"/><stop offset="0.18" stop-color="#0516ff"/><stop offset="1" stop-color="#5700ff"/></linearGradient><linearGradient id="b134" gradientUnits="userSpaceOnUse" x1="1168" x2="1255"><stop offset="0" stop-color="#001aff"/><stop offset="0.184" stop-color="#0516ff"/><stop offset="1" stop-color="#5400ff"/></linearGradient><linearGradient id="b135" gradientUnits="userSpaceOnUse" x1="1169" x2="1253"><stop offset="0" stop-color="#0019ff"/><stop offset="0.19" stop-color="#0514ff"/><stop offset="1" stop-color="#5100ff"/></linearGradient><linearGradient id="b136" gradientUnits="userSpaceOnUse" x1="1170" x2="1251"><stop offset="0" stop-color="#0018ff"/><stop offset="0.173" stop-color="#0414ff"/><stop offset="1" stop-color="#4d00ff"/></linearGradient><linearGradient id="b137" gradientUnits="userSpaceOnUse" x1="1170" x2="1249"><stop offset="0" stop-color="#0017ff"/><stop offset="0.177" stop-color="#0313ff"/><stop offset="1" stop-color="#4a00ff"/></linearGradient><linearGradient id="b138" gradientUnits="userSpaceOnUse" x1="1171" x2="1247"><stop offset="0" stop-color="#0016ff"/><stop offset="0.184" stop-color="#0412ff"/><stop offset="1" stop-color="#4700ff"/></linearGradient><linearGradient id="b139" gradientUnits="userSpaceOnUse" x1="1172" x2="1246"><stop offset="0" stop-color="#0015ff"/><stop offset="0.189" stop-color="#0511ff"/><stop offset="1" stop-color="#4500ff"/></linearGradient><linearGradient id="b140" gradientUnits="userSpaceOnUse" x1="1172" x2="1244"><stop offset="0" stop-color="#0015ff"/><stop offset="0.194" stop-color="#0410ff"/><stop offset="1" stop-color="#4200ff"/></linearGradient><linearGradient id="b141" gradientUnits="userSpaceOnUse" x1="1173" x2="1242"><stop offset="0" stop-color="#0014ff"/><stop offset="0.203" stop-color="#050fff"/><stop offset="1" stop-color="#3f00ff"/></linearGradient><linearGradient id="b142" gradientUnits="userSpaceOnUse" x1="1173" x2="1240"><stop offset="0" stop-color="#0013ff"/><stop offset="0.209" stop-color="#050fff"/><stop offset="1" stop-color="#3c00ff"/></linearGradient><linearGradient id="b143" gradientUnits="userSpaceOnUse" x1="1174" x2="1238"><stop offset="0" stop-color="#0012ff"/><stop offset="0.219" stop-color="#050eff"/><stop offset="1" stop-color="#3900ff"/></linearGradient><linearGradient id="b144" gradientUnits="userSpaceOnUse" x1="1175" x2="1236"><stop offset="0" stop-color="#01f"/><stop offset="0.23" stop-color="#060dff"/><stop offset="1" stop-color="#3600ff"/></linearGradient><linearGradient id="b145" gradientUnits="userSpaceOnUse" x1="1175" x2="1234"><stop offset="0" stop-color="#0010ff"/><stop offset="0.237" stop-color="#060cff"/><stop offset="1" stop-color="#3400ff"/></linearGradient><linearGradient id="b146" gradientUnits="userSpaceOnUse" x1="1176" x2="1232"><stop offset="0" stop-color="#000fff"/><stop offset="0.25" stop-color="#060bff"/><stop offset="1" stop-color="#3100ff"/></linearGradient><linearGradient id="b147" gradientUnits="userSpaceOnUse" x1="1176" x2="1230"><stop offset="0" stop-color="#000fff"/><stop offset="0.259" stop-color="#060bff"/><stop offset="1" stop-color="#2e00ff"/></linearGradient><linearGradient id="b148" gradientUnits="userSpaceOnUse" x1="1177" x2="1228"><stop offset="0" stop-color="#000eff"/><stop offset="0.275" stop-color="#070aff"/><stop offset="1" stop-color="#2b00ff"/></linearGradient><linearGradient id="b149" gradientUnits="userSpaceOnUse" x1="1178" x2="1226"><stop offset="0" stop-color="#000dff"/><stop offset="0.333" stop-color="#0908ff"/><stop offset="1" stop-color="#2900ff"/></linearGradient><linearGradient id="b150" gradientUnits="userSpaceOnUse" x1="1178" x2="1224"><stop offset="0" stop-color="#000cff"/><stop offset="0.348" stop-color="#0908ff"/><stop offset="1" stop-color="#2600ff"/></linearGradient><linearGradient id="b151" gradientUnits="userSpaceOnUse" x1="1179" x2="1222"><stop offset="0" stop-color="#000bff"/><stop offset="0.326" stop-color="#0707ff"/><stop offset="1" stop-color="#2400ff"/></linearGradient><linearGradient id="b152" gradientUnits="userSpaceOnUse" x1="1180" x2="1220"><stop offset="0" stop-color="#000aff"/><stop offset="0.4" stop-color="#0a06ff"/><stop offset="1" stop-color="#2100ff"/></linearGradient><linearGradient id="b153" gradientUnits="userSpaceOnUse" x1="1180" x2="1218"><stop offset="0" stop-color="#000aff"/><stop offset="0.421" stop-color="#0a05ff"/><stop offset="1" stop-color="#1f00ff"/></linearGradient><linearGradient id="b154" gradientUnits="userSpaceOnUse" x1="1181" x2="1216"><stop offset="0" stop-color="#0009ff"/><stop offset="0.571" stop-color="#0e03ff"/><stop offset="1" stop-color="#1c00ff"/></linearGradient><linearGradient id="b155" gradientUnits="userSpaceOnUse" x1="1181" x2="1214"><stop offset="0" stop-color="#0008ff"/><stop offset="0.545" stop-color="#0c03ff"/><stop offset="1" stop-color="#1a00ff"/></linearGradient><linearGradient id="b156" gradientUnits="userSpaceOnUse" x1="1182" x2="1212"><stop offset="0" stop-color="#0007ff"/><stop offset="0.867" stop-color="#1400ff"/><stop offset="1" stop-color="#1700ff"/></linearGradient><linearGradient id="b157" gradientUnits="userSpaceOnUse" x1="1183" x2="1210"><stop offset="0" stop-color="#0007ff"/><stop offset="1" stop-color="#1500ff"/></linearGradient><linearGradient id="b158" gradientUnits="userSpaceOnUse" x1="1183" x2="1208"><stop offset="0" stop-color="#0006ff"/><stop offset="1" stop-color="#1300ff"/></linearGradient><linearGradient id="b159" gradientUnits="userSpaceOnUse" x1="1184" x2="1206"><stop offset="0" stop-color="#0005ff"/><stop offset="1" stop-color="#10f"/></linearGradient><linearGradient id="b160" gradientUnits="userSpaceOnUse" x1="1185" x2="1204"><stop offset="0" stop-color="#0004ff"/><stop offset="1" stop-color="#0e00ff"/></linearGradient><linearGradient id="b161" gradientUnits="userSpaceOnUse" x1="1185" x2="1203"><stop offset="0" stop-color="#0004ff"/><stop offset="1" stop-color="#0d00ff"/></linearGradient><linearGradient id="b162" gradientUnits="userSpaceOnUse" x1="1186" x2="1201"><stop offset="0" stop-color="#0003ff"/><stop offset="1" stop-color="#0b00ff"/></linearGradient><linearGradient id="b163" gradientUnits="userSpaceOnUse" x1="1186" x2="1199"><stop offset="0" stop-color="#0003ff"/><stop offset="1" stop-color="#0900ff"/></linearGradient><linearGradient id="b164" gradientUnits="userSpaceOnUse" x1="1187" x2="1197"><stop offset="0" stop-color="#0002ff"/><stop offset="1" stop-color="#0700ff"/></linearGradient><linearGradient id="b165" gradientUnits="userSpaceOnUse" x1="1188" x2="1195"><stop offset="0" stop-color="#0001ff"/><stop offset="1" stop-color="#0500ff"/></linearGradient><linearGradient id="b166" gradientUnits="userSpaceOnUse" x1="1188" x2="1193"><stop offset="0" stop-color="#0001ff"/><stop offset="1" stop-color="#0300ff"/></linearGradient><clipPath id="cl"><polygon points="1274.0,548.6 1273.9,548.6 1273.9,548.6 1273.9,548.6 1273.8,548.5 1273.8,548.6 1273.7,548.6 1273.7,548.7 1273.6,548.7 1273.6,548.7 1273.5,548.7 1273.4,548.7 1273.3,548.7 1273.2,548.7 1273.1,548.7 1273.1,548.7 1273.0,548.8 1273.0,548.9 1272.9,548.9 1272.9,549.0 1272.8,549.0 1272.8,549.1 1272.7,549.1 1272.6,549.1 1272.5,549.1 1272.3,549.1 1272.2,549.1 1272.0,549.1 1271.8,549.0 1271.7,549.0 1271.5,549.0 1271.4,549.1 1271.2,549.1 1271.0,549.0 1270.9,549.0 1270.7,549.0 1270.5,548.9 1270.2,548.8 1269.9,548.7 1269.6,548.5 1269.2,548.3 1268.7,548.0 1268.2,547.7 1267.7,547.3 1267.1,546.9 1266.5,546.5 1265.9,546.1 1265.2,545.5 1264.5,545.0 1263.7,544.4 1262.9,543.7 1262.0,543.0 1261.0,542.2 1260.0,541.4 1258.9,540.5 1257.7,539.6 1256.5,538.6 1255.3,537.5 1254.0,536.4 1252.6,535.2 1251.2,534.0 1249.7,532.7 1248.1,531.4 1246.5,530.0 1244.7,528.5 1242.8,527.0 1240.9,525.4 1238.8,523.6 1236.6,521.8 1234.4,520.0 1232.0,518.0 1229.5,516.0 1227.0,513.9 1224.4,511.7 1221.6,509.4 1218.8,506.9 1215.8,504.3 1212.7,501.6 1209.5,498.7 1206.1,495.7 1202.7,492.4 1199.2,489.1 1195.5,485.5 1191.7,481.6 1187.7,477.4 1183.4,472.7 1178.9,467.6 1174.0,461.9 1168.9,455.6 1163.4,448.9 1157.8,441.7 1152.1,434.0 1146.1,426.0 1140.1,417.5 1133.9,408.6 1127.5,399.2 1121.0,389.3 1114.5,379.0 1107.9,368.4 1101.3,357.5 1094.7,346.4 1088.1,335.1 1081.6,323.8 1075.2,312.3 1069.0,300.8 1063.1,289.2 1057.5,277.8 1052.2,266.6 1047.3,255.6 1042.7,244.9 1038.4,234.4 1034.4,224.3 1030.7,214.6 1027.3,205.3 1024.3,196.5 1021.6,188.2 1019.3,180.4 1017.3,173.0 1015.5,166.2 1014.1,159.8 1013.0,153.8 1012.1,148.3 1011.4,143.1 1011.0,138.4 1010.8,134.0 1010.9,129.9 1011.1,126.1 1011.6,122.5 1012.2,119.3 1013.1,116.2 1014.2,113.4 1015.4,110.9 1016.8,108.6 1018.4,106.5 1020.2,104.6 1022.0,103.0 1024.1,101.6 1026.2,100.4 1028.4,99.3 1030.8,98.4 1033.2,97.7 1035.7,97.1 1038.3,96.6 1041.0,96.2 1043.7,95.9 1046.5,95.7 1049.3,95.5 1052.2,95.4 1055.1,95.3 1058.0,95.3 1061.0,95.2 1063.9,95.2 1066.8,95.2 1069.7,95.3 1072.7,95.3 1075.7,95.4 1078.7,95.5 1081.7,95.6 1084.8,95.8 1087.9,95.9 1091.0,96.1 1094.2,96.3 1097.5,96.6 1100.8,96.8 1104.1,97.1 1107.5,97.3 1111.0,97.6 1114.5,97.9 1118.1,98.3 1121.8,98.6 1125.5,99.0 1129.3,99.3 1133.2,99.7 1137.1,100.1 1141.1,100.5 1145.2,101.0 1149.4,101.4 1153.7,101.9 1158.1,102.3 1162.6,102.8 1167.1,103.3 1171.8,103.8 1176.5,104.4 1181.3,104.9 1186.3,105.4 1191.3,106.0 1196.4,106.6 1201.7,107.2 1207.0,107.8 1212.5,108.4 1218.1,109.1 1223.7,109.7 1229.5,110.4 1235.4,111.0 1241.4,111.7 1247.5,112.4 1253.7,113.2 1260.0,113.9 1266.5,114.6 1273.0,115.4 1279.6,116.2 1286.3,116.9 1293.2,117.7 1300.1,118.5 1307.1,119.3 1314.2,120.1 1321.4,121.0 1328.6,121.8 1336.0,122.6 1343.4,123.5 1350.8,124.4 1358.3,125.2 1365.9,126.1 1373.5,127.0 1381.0,127.9 1388.5,128.7 1395.9,129.6 1403.3,130.4 1410.5,131.3 1417.8,132.1 1425.0,132.9 1432.2,133.8 1439.4,134.6 1446.6,135.4 1453.6,136.2 1460.5,137.0 1467.2,137.8 1473.8,138.5 1480.2,139.3 1486.5,140.0 1492.6,140.7 1498.6,141.4 1504.4,142.1 1510.1,142.7 1515.6,143.4 1521.0,144.0 1526.2,144.6 1531.2,145.2 1536.0,145.7 1540.7,146.3 1545.2,146.8 1549.6,147.3 1553.8,147.8 1557.8,148.2 1561.7,148.7 1565.5,149.1 1569.2,149.5 1572.7,149.9 1576.1,150.3 1579.4,150.7 1582.6,151.1 1585.7,151.4 1588.8,151.8 1591.7,152.1 1594.6,152.5 1597.4,152.8 1600.1,153.1 1602.7,153.4 1605.2,153.7 1607.6,154.0 1609.9,154.2 1612.1,154.5 1614.3,154.7 1616.4,155.0 1618.3,155.2 1620.2,155.4 1621.9,155.6 1623.5,155.8 1625.1,156.0 1626.5,156.1 1627.9,156.3 1629.2,156.5 1630.5,156.6 1631.7,156.7 1632.9,156.9 1634.0,157.0 1635.0,157.1 1636.0,157.2 1636.9,157.3 1637.7,157.4 1638.5,157.5 1639.2,157.6 1639.9,157.7 1640.5,157.8 1641.0,157.8 1641.6,157.9 1642.1,157.9 1642.6,158.0 1643.1,158.1 1643.6,158.1 1644.0,158.2 1644.5,158.2 1644.9,158.3 1645.3,158.3 1645.6,158.4 1646.0,158.4 1646.4,158.5 1646.8,158.5 1647.2,158.5 1647.6,158.6 1647.9,158.6 1648.3,158.7 1648.7,158.7 1649.0,158.8 1649.4,158.8 1649.7,158.8 1649.9,158.9 1650.2,158.9 1650.3,158.9 1650.5,158.9 1650.6,158.9 1650.8,159.0 1650.9,159.0 1651.0,159.0 1651.1,159.0 1651.2,159.0 1651.3,159.0 1651.4,159.0 1651.4,159.0 1651.5,159.0 1651.5,159.0"/></clipPath><clipPath id="ct"><polygon points="1473.6,146.0 1087.3,104.0 1190.1,436.2"/></clipPath><clipPath id="cp"><rect x="1010" y="85" width="618" height="477"/></clipPath>
<linearGradient id="rr" x1="0" y1="0" x2="0" y2="1"><stop offset="0" stop-color="#ff5050"/><stop offset="0.15" stop-color="#ff0000"/><stop offset="0.5" stop-color="#f00000"/><stop offset="1" stop-color="#780000"/></linearGradient>
<linearGradient id="rg" x1="0" y1="0" x2="0" y2="1"><stop offset="0" stop-color="#30b030"/><stop offset="1" stop-color="#006000"/></linearGradient>
<linearGradient id="rb" x1="0" y1="0" x2="0" y2="1"><stop offset="0" stop-color="#6060ff"/><stop offset="0.12" stop-color="#0000ff"/><stop offset="0.5" stop-color="#0000f0"/><stop offset="1" stop-color="#000070"/></linearGradient>
<linearGradient id="x0" gradientUnits="userSpaceOnUse" x1="641" x2="971"><stop offset="0" stop-color="#88ffcf"/><stop offset="0.703" stop-color="#f0ffcb"/><stop offset="0.8" stop-color="#fffec9"/><stop offset="1" stop-color="#ffdfb0"/></linearGradient><linearGradient id="x1" gradientUnits="userSpaceOnUse" x1="641" x2="971"><stop offset="0" stop-color="#89ffd1"/><stop offset="0.703" stop-color="#f2ffcd"/><stop offset="0.788" stop-color="#fffdcb"/><stop offset="1" stop-color="#ffdeb0"/></linearGradient><linearGradient id="x2" gradientUnits="userSpaceOnUse" x1="641" x2="971"><stop offset="0" stop-color="#8bffd3"/><stop offset="0.703" stop-color="#f5ffcf"/><stop offset="0.776" stop-color="#fffdcd"/><stop offset="1" stop-color="#ffdcb1"/></linearGradient><linearGradient id="x3" gradientUnits="userSpaceOnUse" x1="641" x2="971"><stop offset="0" stop-color="#8cffd5"/><stop offset="0.691" stop-color="#f5ffd1"/><stop offset="0.764" stop-color="#fffdcf"/><stop offset="1" stop-color="#ffdab1"/></linearGradient><linearGradient id="x4" gradientUnits="userSpaceOnUse" x1="641" x2="971"><stop offset="0" stop-color="#8dffd7"/><stop offset="0.691" stop-color="#f7ffd3"/><stop offset="0.752" stop-color="#fffdd1"/><stop offset="1" stop-color="#ffd8b1"/></linearGradient><linearGradient id="x5" gradientUnits="userSpaceOnUse" x1="641" x2="971"><stop offset="0" stop-color="#8fffd9"/><stop offset="0.691" stop-color="#f9ffd5"/><stop offset="0.752" stop-color="#fffbd1"/><stop offset="1" stop-color="#ffd6b2"/></linearGradient><linearGradient id="x6" gradientUnits="userSpaceOnUse" x1="641" x2="971"><stop offset="0" stop-color="#90ffdb"/><stop offset="0.679" stop-color="#f9ffd7"/><stop offset="0.739" stop-color="#fffbd3"/><stop offset="1" stop-color="#ffd5b2"/></linearGradient><linearGradient id="x7" gradientUnits="userSpaceOnUse" x1="641" x2="971"><stop offset="0" stop-color="#92ffdc"/><stop offset="0.679" stop-color="#fbffd9"/><stop offset="0.739" stop-color="#fff9d4"/><stop offset="1" stop-color="#ffd3b2"/></linearGradient><linearGradient id="x8" gradientUnits="userSpaceOnUse" x1="641" x2="971"><stop offset="0" stop-color="#93ffde"/><stop offset="0.703" stop-color="#fffdd9"/><stop offset="1" stop-color="#ffd1b3"/></linearGradient><linearGradient id="x9" gradientUnits="userSpaceOnUse" x1="641" x2="971"><stop offset="0" stop-color="#94ffe0"/><stop offset="0.691" stop-color="#fffddc"/><stop offset="1" stop-color="#ffcfb3"/></linearGradient><linearGradient id="x10" gradientUnits="userSpaceOnUse" x1="641" x2="971"><stop offset="0" stop-color="#96ffe2"/><stop offset="0.679" stop-color="#fffcde"/><stop offset="1" stop-color="#ffceb3"/></linearGradient><linearGradient id="x11" gradientUnits="userSpaceOnUse" x1="641" x2="971"><stop offset="0" stop-color="#97ffe5"/><stop offset="0.655" stop-color="#fffee2"/><stop offset="1" stop-color="#ffccb4"/></linearGradient><linearGradient id="x12" gradientUnits="userSpaceOnUse" x1="641" x2="971"><stop offset="0" stop-color="#99ffe7"/><stop offset="0.642" stop-color="#fffee4"/><stop offset="1" stop-color="#ffcab4"/></linearGradient><linearGradient id="x13" gradientUnits="userSpaceOnUse" x1="641" x2="971"><stop offset="0" stop-color="#9affe9"/><stop offset="0.63" stop-color="#fffee6"/><stop offset="1" stop-color="#ffc8b4"/></linearGradient><linearGradient id="x14" gradientUnits="userSpaceOnUse" x1="641" x2="971"><stop offset="0" stop-color="#9cffeb"/><stop offset="0.618" stop-color="#fffee8"/><stop offset="0.982" stop-color="#ffc9b7"/><stop offset="1" stop-color="#ffc7b5"/></linearGradient><linearGradient id="x15" gradientUnits="userSpaceOnUse" x1="641" x2="971"><stop offset="0" stop-color="#9effed"/><stop offset="0.606" stop-color="#fffeeb"/><stop offset="0.97" stop-color="#ffc9b9"/><stop offset="1" stop-color="#ffc5b5"/></linearGradient><linearGradient id="x16" gradientUnits="userSpaceOnUse" x1="641" x2="971"><stop offset="0" stop-color="#9fffef"/><stop offset="0.594" stop-color="#fffeed"/><stop offset="0.958" stop-color="#ffc8ba"/><stop offset="1" stop-color="#ffc3b5"/></linearGradient><linearGradient id="x17" gradientUnits="userSpaceOnUse" x1="641" x2="971"><stop offset="0" stop-color="#a1fff1"/><stop offset="0.582" stop-color="#fffeef"/><stop offset="0.945" stop-color="#ffc8bc"/><stop offset="1" stop-color="#ffc2b6"/></linearGradient><linearGradient id="x18" gradientUnits="userSpaceOnUse" x1="641" x2="971"><stop offset="0" stop-color="#a2fff3"/><stop offset="0.57" stop-color="#fffef1"/><stop offset="0.933" stop-color="#ffc8be"/><stop offset="1" stop-color="#ffc0b6"/></linearGradient><linearGradient id="x19" gradientUnits="userSpaceOnUse" x1="641" x2="971"><stop offset="0" stop-color="#a4fff6"/><stop offset="0.558" stop-color="#fffdf4"/><stop offset="0.921" stop-color="#ffc8bf"/><stop offset="1" stop-color="#ffbeb6"/></linearGradient><linearGradient id="x20" gradientUnits="userSpaceOnUse" x1="641" x2="971"><stop offset="0" stop-color="#a6fff8"/><stop offset="0.545" stop-color="#fffdf6"/><stop offset="0.909" stop-color="#ffc7c1"/><stop offset="1" stop-color="#ffbdb7"/></linearGradient><linearGradient id="x21" gradientUnits="userSpaceOnUse" x1="641" x2="971"><stop offset="0" stop-color="#a7fffa"/><stop offset="0.533" stop-color="#fffdf8"/><stop offset="0.897" stop-color="#ffc7c3"/><stop offset="1" stop-color="#ffbbb7"/></linearGradient><linearGradient id="x22" gradientUnits="userSpaceOnUse" x1="641" x2="971"><stop offset="0" stop-color="#a9fffc"/><stop offset="0.521" stop-color="#fffdfb"/><stop offset="0.885" stop-color="#ffc7c5"/><stop offset="1" stop-color="#ffb9b7"/></linearGradient><linearGradient id="x23" gradientUnits="userSpaceOnUse" x1="641" x2="971"><stop offset="0" stop-color="#abffff"/><stop offset="0.509" stop-color="#fffdfd"/><stop offset="0.861" stop-color="#ffc8c8"/><stop offset="1" stop-color="#ffb8b8"/></linearGradient><linearGradient id="x24" gradientUnits="userSpaceOnUse" x1="641" x2="971"><stop offset="0" stop-color="#abfdff"/><stop offset="0.509" stop-color="#fffbfd"/><stop offset="0.873" stop-color="#ffc5c7"/><stop offset="1" stop-color="#ffb6b8"/></linearGradient><linearGradient id="x25" gradientUnits="userSpaceOnUse" x1="641" x2="971"><stop offset="0" stop-color="#abfbff"/><stop offset="0.509" stop-color="#fff8fd"/><stop offset="0.873" stop-color="#ffc3c7"/><stop offset="1" stop-color="#ffb4b8"/></linearGradient><linearGradient id="x26" gradientUnits="userSpaceOnUse" x1="641" x2="971"><stop offset="0" stop-color="#abf8ff"/><stop offset="0.509" stop-color="#fff6fd"/><stop offset="0.873" stop-color="#ffc1c8"/><stop offset="1" stop-color="#ffb3b9"/></linearGradient><linearGradient id="x27" gradientUnits="userSpaceOnUse" x1="641" x2="971"><stop offset="0" stop-color="#abf6ff"/><stop offset="0.509" stop-color="#fff4fe"/><stop offset="0.873" stop-color="#ffc0c8"/><stop offset="1" stop-color="#ffb1b9"/></linearGradient><linearGradient id="x28" gradientUnits="userSpaceOnUse" x1="641" x2="971"><stop offset="0" stop-color="#acf4ff"/><stop offset="0.509" stop-color="#fff2fe"/><stop offset="0.873" stop-color="#ffbec8"/><stop offset="1" stop-color="#ffb0b9"/></linearGradient><linearGradient id="x29" gradientUnits="userSpaceOnUse" x1="641" x2="971"><stop offset="0" stop-color="#acf2ff"/><stop offset="0.509" stop-color="#ffeffe"/><stop offset="0.873" stop-color="#ffbcc8"/><stop offset="1" stop-color="#ffaeba"/></linearGradient><linearGradient id="x30" gradientUnits="userSpaceOnUse" x1="641" x2="971"><stop offset="0" stop-color="#acefff"/><stop offset="0.509" stop-color="#ffedfe"/><stop offset="0.873" stop-color="#ffbac9"/><stop offset="1" stop-color="#ffacba"/></linearGradient><linearGradient id="x31" gradientUnits="userSpaceOnUse" x1="641" x2="971"><stop offset="0" stop-color="#acedff"/><stop offset="0.509" stop-color="#ffebfe"/><stop offset="0.873" stop-color="#ffb9c9"/><stop offset="1" stop-color="#ffabba"/></linearGradient><linearGradient id="x32" gradientUnits="userSpaceOnUse" x1="641" x2="971"><stop offset="0" stop-color="#acebff"/><stop offset="0.521" stop-color="#ffe7fc"/><stop offset="0.897" stop-color="#ffb4c6"/><stop offset="1" stop-color="#ffa9bb"/></linearGradient><linearGradient id="x33" gradientUnits="userSpaceOnUse" x1="641" x2="971"><stop offset="0" stop-color="#ace9ff"/><stop offset="0.521" stop-color="#ffe5fd"/><stop offset="0.897" stop-color="#ffb3c7"/><stop offset="1" stop-color="#ffa8bb"/></linearGradient><linearGradient id="x34" gradientUnits="userSpaceOnUse" x1="641" x2="971"><stop offset="0" stop-color="#ace7ff"/><stop offset="0.521" stop-color="#ffe3fd"/><stop offset="0.897" stop-color="#ffb1c7"/><stop offset="1" stop-color="#ffa6bb"/></linearGradient><linearGradient id="x35" gradientUnits="userSpaceOnUse" x1="641" x2="971"><stop offset="0" stop-color="#ace4ff"/><stop offset="0.521" stop-color="#ffe1fd"/><stop offset="0.897" stop-color="#ffafc7"/><stop offset="1" stop-color="#ffa5bb"/></linearGradient><linearGradient id="x36" gradientUnits="userSpaceOnUse" x1="641" x2="971"><stop offset="0" stop-color="#ade2ff"/><stop offset="0.521" stop-color="#ffdefd"/><stop offset="0.897" stop-color="#ffaec8"/><stop offset="1" stop-color="#ffa3bc"/></linearGradient><linearGradient id="x37" gradientUnits="userSpaceOnUse" x1="641" x2="971"><stop offset="0" stop-color="#ade0ff"/><stop offset="0.521" stop-color="#ffdcfd"/><stop offset="0.897" stop-color="#ffacc8"/><stop offset="1" stop-color="#ffa2bc"/></linearGradient><linearGradient id="x38" gradientUnits="userSpaceOnUse" x1="641" x2="971"><stop offset="0" stop-color="#addeff"/><stop offset="0.521" stop-color="#ffdafd"/><stop offset="0.897" stop-color="#ffabc8"/><stop offset="1" stop-color="#ffa0bc"/></linearGradient><linearGradient id="x39" gradientUnits="userSpaceOnUse" x1="641" x2="971"><stop offset="0" stop-color="#addcff"/><stop offset="0.521" stop-color="#ffd8fe"/><stop offset="0.897" stop-color="#ffa9c8"/><stop offset="1" stop-color="#ff9fbd"/></linearGradient><linearGradient id="x40" gradientUnits="userSpaceOnUse" x1="641" x2="971"><stop offset="0" stop-color="#addaff"/><stop offset="0.521" stop-color="#ffd6fe"/><stop offset="0.897" stop-color="#ffa7c9"/><stop offset="1" stop-color="#ff9dbd"/></linearGradient><linearGradient id="x41" gradientUnits="userSpaceOnUse" x1="641" x2="971"><stop offset="0" stop-color="#add8ff"/><stop offset="0.521" stop-color="#ffd4fe"/><stop offset="0.897" stop-color="#ffa6c9"/><stop offset="1" stop-color="#ff9cbd"/></linearGradient><linearGradient id="x42" gradientUnits="userSpaceOnUse" x1="641" x2="971"><stop offset="0" stop-color="#add6ff"/><stop offset="0.521" stop-color="#ffd2fe"/><stop offset="0.897" stop-color="#ffa4c9"/><stop offset="1" stop-color="#ff9abe"/></linearGradient><linearGradient id="x43" gradientUnits="userSpaceOnUse" x1="641" x2="971"><stop offset="0" stop-color="#aed4ff"/><stop offset="0.521" stop-color="#ffd0fe"/><stop offset="0.909" stop-color="#ffa1c8"/><stop offset="1" stop-color="#ff99be"/></linearGradient><linearGradient id="x44" gradientUnits="userSpaceOnUse" x1="641" x2="971"><stop offset="0" stop-color="#aed2ff"/><stop offset="0.533" stop-color="#ffccfc"/><stop offset="0.921" stop-color="#ff9fc7"/><stop offset="1" stop-color="#ff97be"/></linearGradient><linearGradient id="x45" gradientUnits="userSpaceOnUse" x1="641" x2="971"><stop offset="0" stop-color="#aed0ff"/><stop offset="0.533" stop-color="#ffcafd"/><stop offset="0.921" stop-color="#ff9dc7"/><stop offset="1" stop-color="#ff96be"/></linearGradient><linearGradient id="x46" gradientUnits="userSpaceOnUse" x1="641" x2="971"><stop offset="0" stop-color="#aeceff"/><stop offset="0.533" stop-color="#ffc8fd"/><stop offset="0.921" stop-color="#ff9cc7"/><stop offset="1" stop-color="#ff94bf"/></linearGradient><linearGradient id="x47" gradientUnits="userSpaceOnUse" x1="641" x2="971"><stop offset="0" stop-color="#aeccff"/><stop offset="0.533" stop-color="#ffc6fd"/><stop offset="0.921" stop-color="#ff9ac8"/><stop offset="1" stop-color="#ff93bf"/></linearGradient>
<linearGradient id="thd" x1="0" y1="0" x2="0" y2="1"><stop offset="0" stop-color="#2e2e2e"/><stop offset="0.46" stop-color="#282828"/><stop offset="0.47" stop-color="#161616"/><stop offset="1" stop-color="#111111"/></linearGradient>
<linearGradient id="bb" x1="0" gradientUnits="userSpaceOnUse" y1="833" y2="905" x2="0"><stop offset="0" stop-color="#b2b2b2"/><stop offset="0.1" stop-color="#a0a0a0"/><stop offset="1" stop-color="#5c5c5c"/></linearGradient>
<linearGradient id="bsel" gradientUnits="userSpaceOnUse" x1="0" x2="0" y1="833" y2="905"><stop offset="0" stop-color="#202020"/><stop offset="0.6" stop-color="#242424"/><stop offset="1" stop-color="#343434"/></linearGradient>
<linearGradient id="cb1" x1="0" gradientUnits="userSpaceOnUse" y1="832" y2="870" x2="0"><stop offset="0" stop-color="#a6a6a6"/><stop offset="1" stop-color="#666666"/></linearGradient>
<linearGradient id="cb2" x1="0" gradientUnits="userSpaceOnUse" y1="871" y2="905" x2="0"><stop offset="0" stop-color="#b0b0b0"/><stop offset="1" stop-color="#7a7a7a"/></linearGradient>
<linearGradient id="cc" x1="0" y1="0" x2="0" y2="1"><stop offset="0" stop-color="#7c7c7c"/><stop offset="1" stop-color="#acacac"/></linearGradient>
<linearGradient id="cb0" gradientUnits="userSpaceOnUse" x1="0" x2="0" y1="832" y2="855"><stop offset="0" stop-color="#9e9e9e"/><stop offset="1" stop-color="#828282"/></linearGradient>
<linearGradient id="cb3" gradientUnits="userSpaceOnUse" x1="0" x2="0" y1="856" y2="905"><stop offset="0" stop-color="#808080"/><stop offset="1" stop-color="#626262"/></linearGradient>
<linearGradient id="stp" x1="0" y1="0" x2="0" y2="1"><stop offset="0" stop-color="#b0b0b0"/><stop offset="0.52" stop-color="#a2a2a2"/><stop offset="0.53" stop-color="#8a8a8a"/><stop offset="1" stop-color="#989898"/></linearGradient>
</defs>
<rect x="0" y="0" width="1657" height="903" fill="#333333"/>
<rect x="0" y="0" width="1657" height="41.5" fill="#222222"/>
<rect x="0" y="41.5" width="1657" height="3.5" fill="url(#shd)"/>
<path d="M-1,42 V9 a5,5 0 0 1 5,-5 H106.5 a5,5 0 0 1 5,5 V42 Z" fill="url(#tab)" stroke="#8a8a8a" stroke-width="1"/>
<line x1="70.5" y1="5" x2="70.5" y2="42" stroke="#7a7a7a" stroke-width="1"/>
<rect x="-1" y="41" width="113" height="2" fill="#303030"/>
<circle cx="89.5" cy="25.5" r="12" fill="url(#plusc)"/>
<line x1="86" y1="26.5" x2="93.5" y2="26.5" stroke="#999" stroke-width="1.2"/>
<line x1="89.7" y1="22.5" x2="89.7" y2="30.5" stroke="#999" stroke-width="1.2"/>
<text x="5.0" y="30.0" font-size="14.5" fill="#e8e8e8" textLength="58.0" lengthAdjust="spacingAndGlyphs">History 1</text>
<path d="M1051.7,41.5 V9 a5,5 0 0 1 5,-5 H1225.2 a5,5 0 0 1 5,5 V41.5 Z" fill="url(#tb)"/>
<path d="M1051.7,41.5 V9 a5,5 0 0 1 5,-5 H1059.7 V41.5 Z" fill="url(#gbar)"/>
<circle cx="1161.7" cy="22.5" r="12" fill="url(#dd)"/>
<path d="M1155.5,20.5 h12.4 l-6.2,6.8 Z" fill="#fff"/>
<text x="1063.2" y="17.8" font-size="12.8" fill="#f0f0f0" textLength="81.5" lengthAdjust="spacingAndGlyphs">X-Rite i1Pro 3</text>
<text x="1063.2" y="36.8" font-size="12.8" fill="#f0f0f0" textLength="69.3" lengthAdjust="spacingAndGlyphs">Direct View</text>
<line x1="1185.5" y1="8" x2="1185.5" y2="41.5" stroke="#3c3c3c" stroke-width="1.5"/>
<circle cx="1211.1" cy="22.4" r="15.6" fill="#0000f0" stroke="#e8e8ff" stroke-width="1.3"/>
<text x="1211.1" y="27.2" font-size="13.0" fill="#fff" text-anchor="middle" textLength="19.0" lengthAdjust="spacingAndGlyphs">672</text>
<path d="M1237.9,41.5 V9 a5,5 0 0 1 5,-5 H1394.8 a5,5 0 0 1 5,5 V41.5 Z" fill="url(#tb)"/>
<path d="M1237.9,41.5 V9 a5,5 0 0 1 5,-5 H1245.9 V41.5 Z" fill="url(#gbar)"/>
<circle cx="1380.2" cy="22.5" r="12" fill="url(#dd)"/>
<path d="M1374,20.5 h12.4 l-6.2,6.8 Z" fill="#fff"/>
<text x="1249.3" y="17.8" font-size="12.8" fill="#f0f0f0" textLength="79.8" lengthAdjust="spacingAndGlyphs">Mobile Forge</text>
<path d="M1408.1,41.5 V9 a5,5 0 0 1 5,-5 H1582 a5,5 0 0 1 5,5 V41.5 Z" fill="url(#tb)"/>
<path d="M1408.1,41.5 V9 a5,5 0 0 1 5,-5 H1416.1 V41.5 Z" fill="url(#ybar)"/>
<circle cx="1566.7" cy="22.5" r="12" fill="url(#dd)"/>
<path d="M1560.5,20.5 h12.4 l-6.2,6.8 Z" fill="#fff"/>
<text x="1419.4" y="17.6" font-size="12.8" fill="#f0f0f0" textLength="131.1" lengthAdjust="spacingAndGlyphs">Direct Display Control</text>
<rect x="1591.5" y="4.3" width="41.5" height="34" rx="5" fill="url(#gb2)" stroke="#b0b0b0" stroke-width="1"/>
<rect x="1634.2" y="4.3" width="41.5" height="34" rx="5" fill="url(#gb2)" stroke="#b0b0b0" stroke-width="1"/>
<circle cx="1611.7" cy="21.2" r="12.4" fill="url(#gc)"/>
<circle cx="1651.5" cy="21.2" r="12.4" fill="url(#gc)"/>
<path d="M1654.3,14.6 v13.2 l-7,-6.6 Z" fill="#fff"/>
<path d="M1617.78,19.97 L1619.93,20.12 L1619.93,22.28 L1617.78,22.43 L1616.87,24.63 L1618.28,26.26 L1616.76,27.78 L1615.13,26.37 L1612.93,27.28 L1612.78,29.43 L1610.62,29.43 L1610.47,27.28 L1608.27,26.37 L1606.64,27.78 L1605.12,26.26 L1606.53,24.63 L1605.62,22.43 L1603.47,22.28 L1603.47,20.12 L1605.62,19.97 L1606.53,17.77 L1605.12,16.14 L1606.64,14.62 L1608.27,16.03 L1610.47,15.12 L1610.62,12.97 L1612.78,12.97 L1612.93,15.12 L1615.13,16.03 L1616.76,14.62 L1618.28,16.14 L1616.87,17.77 Z M1611.7,17.6 a3.6,3.6 0 1 0 0.01,0 Z" fill="#c8c8c8" fill-rule="evenodd"/>
<text x="48.0" y="98.2" font-size="37.0" fill="#f4f4f4" textLength="217.0" lengthAdjust="spacingAndGlyphs" stroke="#f4f4f4" stroke-width="0.5">Color Gamut</text>
<rect x="44.5" y="151.5" width="324" height="401" fill="#242424"/>
<line x1="86.5" y1="151.5" x2="86.5" y2="552.5" stroke="#999999" stroke-width="1"/>
<line x1="130.5" y1="151.5" x2="130.5" y2="552.5" stroke="#999999" stroke-width="1"/>
<line x1="173.5" y1="151.5" x2="173.5" y2="552.5" stroke="#999999" stroke-width="1"/>
<line x1="217.5" y1="151.5" x2="217.5" y2="552.5" stroke="#999999" stroke-width="1"/>
<line x1="260.5" y1="151.5" x2="260.5" y2="552.5" stroke="#999999" stroke-width="1"/>
<line x1="303" y1="151.5" x2="303" y2="552.5" stroke="#999999" stroke-width="1"/>
<line x1="346.5" y1="151.5" x2="346.5" y2="552.5" stroke="#999999" stroke-width="1"/>
<rect x="44.5" y="151.5" width="324" height="401" fill="none" stroke="#999999" stroke-width="1"/>
<line x1="44.5" y1="552.5" x2="44.5" y2="558" stroke="#c0c0c0" stroke-width="1"/>
<text x="44.5" y="572.7" font-size="13.7" fill="#d4d4d4" text-anchor="middle">0</text>
<line x1="86.5" y1="552.5" x2="86.5" y2="558" stroke="#c0c0c0" stroke-width="1"/>
<text x="86.5" y="572.7" font-size="13.7" fill="#d4d4d4" text-anchor="middle">2</text>
<line x1="130.5" y1="552.5" x2="130.5" y2="558" stroke="#c0c0c0" stroke-width="1"/>
<text x="130.5" y="572.7" font-size="13.7" fill="#d4d4d4" text-anchor="middle">4</text>
<line x1="173.5" y1="552.5" x2="173.5" y2="558" stroke="#c0c0c0" stroke-width="1"/>
<text x="173.5" y="572.7" font-size="13.7" fill="#d4d4d4" text-anchor="middle">6</text>
<line x1="217.5" y1="552.5" x2="217.5" y2="558" stroke="#c0c0c0" stroke-width="1"/>
<text x="217.5" y="572.7" font-size="13.7" fill="#d4d4d4" text-anchor="middle">8</text>
<line x1="260.5" y1="552.5" x2="260.5" y2="558" stroke="#c0c0c0" stroke-width="1"/>
<text x="260.5" y="572.7" font-size="13.7" fill="#d4d4d4" text-anchor="middle">10</text>
<line x1="303" y1="552.5" x2="303" y2="558" stroke="#c0c0c0" stroke-width="1"/>
<text x="303.0" y="572.7" font-size="13.7" fill="#d4d4d4" text-anchor="middle">12</text>
<line x1="346.5" y1="552.5" x2="346.5" y2="558" stroke="#c0c0c0" stroke-width="1"/>
<text x="346.5" y="572.7" font-size="13.7" fill="#d4d4d4" text-anchor="middle">14</text>
<text x="206.5" y="146.8" font-size="13.2" fill="#d4d4d4" text-anchor="middle" textLength="77.0" lengthAdjust="spacingAndGlyphs">DeltaE 2000</text>
<rect x="44.5" y="157.5" width="165.024" height="38" fill="url(#bew)" stroke="#000" stroke-width="1.2"/>
<line x1="44.5" y1="156.5" x2="44.5" y2="196.5" stroke="#999" stroke-width="1"/>
<rect x="44.5" y="207.5" width="63.6401" height="38" fill="url(#bey)" stroke="#000" stroke-width="1.2"/>
<line x1="44.5" y1="206.5" x2="44.5" y2="246.5" stroke="#999" stroke-width="1"/>
<rect x="44.5" y="257.5" width="107.488" height="38" fill="url(#bem)" stroke="#000" stroke-width="1.2"/>
<line x1="44.5" y1="256.5" x2="44.5" y2="296.5" stroke="#999" stroke-width="1"/>
<rect x="44.5" y="307.5" width="119.513" height="38" fill="url(#bec)" stroke="#000" stroke-width="1.2"/>
<line x1="44.5" y1="306.5" x2="44.5" y2="346.5" stroke="#999" stroke-width="1"/>
<rect x="44.5" y="357.5" width="85.0025" height="38" fill="url(#beb)" stroke="#000" stroke-width="1.2"/>
<line x1="44.5" y1="356.5" x2="44.5" y2="396.5" stroke="#999" stroke-width="1"/>
<rect x="44.5" y="407.5" width="149.885" height="38" fill="url(#beg)" stroke="#000" stroke-width="1.2"/>
<line x1="44.5" y1="406.5" x2="44.5" y2="446.5" stroke="#999" stroke-width="1"/>
<rect x="44.5" y="457.5" width="132.622" height="38" fill="url(#ber)" stroke="#000" stroke-width="1.2"/>
<line x1="44.5" y1="456.5" x2="44.5" y2="496.5" stroke="#999" stroke-width="1"/>
<rect x="44.5" y="507.5" width="115.284" height="38" fill="url(#bes)" stroke="#000" stroke-width="1.2"/>
<line x1="44.5" y1="506.5" x2="44.5" y2="546.5" stroke="#999" stroke-width="1"/>
<rect x="419.5" y="86.5" width="140" height="306" fill="#242424"/>
<line x1="419.5" y1="138.5" x2="559.5" y2="138.5" stroke="#999999" stroke-width="1"/>
<line x1="419.5" y1="189.5" x2="559.5" y2="189.5" stroke="#999999" stroke-width="1"/>
<line x1="419.5" y1="240.5" x2="559.5" y2="240.5" stroke="#999999" stroke-width="1"/>
<line x1="419.5" y1="291.5" x2="559.5" y2="291.5" stroke="#999999" stroke-width="1"/>
<line x1="419.5" y1="343.5" x2="559.5" y2="343.5" stroke="#999999" stroke-width="1"/>
<rect x="419.5" y="86.5" width="140" height="306" fill="none" stroke="#999999" stroke-width="1"/>
<line x1="419.5" y1="87.5" x2="559.5" y2="87.5" stroke="#5a5a5a" stroke-width="1"/>
<line x1="413.5" y1="86.5" x2="419.5" y2="86.5" stroke="#c0c0c0" stroke-width="1"/>
<text x="413.2" y="91.9" font-size="13.7" fill="#d4d4d4" text-anchor="end">15</text>
<line x1="413.5" y1="138.5" x2="419.5" y2="138.5" stroke="#c0c0c0" stroke-width="1"/>
<text x="413.2" y="143.9" font-size="13.7" fill="#d4d4d4" text-anchor="end">10</text>
<line x1="413.5" y1="189.5" x2="419.5" y2="189.5" stroke="#c0c0c0" stroke-width="1"/>
<text x="413.2" y="194.9" font-size="13.7" fill="#d4d4d4" text-anchor="end">5</text>
<line x1="413.5" y1="240.5" x2="419.5" y2="240.5" stroke="#c0c0c0" stroke-width="1"/>
<text x="413.2" y="245.9" font-size="13.7" fill="#d4d4d4" text-anchor="end">0</text>
<line x1="413.5" y1="291.5" x2="419.5" y2="291.5" stroke="#c0c0c0" stroke-width="1"/>
<text x="413.2" y="296.9" font-size="13.7" fill="#d4d4d4" text-anchor="end">-5</text>
<line x1="413.5" y1="343.5" x2="419.5" y2="343.5" stroke="#c0c0c0" stroke-width="1"/>
<text x="413.2" y="348.9" font-size="13.7" fill="#d4d4d4" text-anchor="end">-10</text>
<line x1="413.5" y1="392.5" x2="419.5" y2="392.5" stroke="#c0c0c0" stroke-width="1"/>
<text x="413.2" y="397.9" font-size="13.7" fill="#d4d4d4" text-anchor="end">-15</text>
<line x1="419.5" y1="392.5" x2="419.5" y2="398" stroke="#c0c0c0" stroke-width="1"/>
<line x1="559.5" y1="392.5" x2="559.5" y2="398" stroke="#c0c0c0" stroke-width="1"/>
<text x="489.5" y="408.0" font-size="13.6" fill="#d4d4d4" text-anchor="middle" textLength="36.8" lengthAdjust="spacingAndGlyphs">100W</text>
<text x="477.0" y="81.0" font-size="13.2" fill="#d4d4d4" text-anchor="middle" textLength="40.0" lengthAdjust="spacingAndGlyphs">DeltaL</text>
<line x1="433.7" y1="240.5" x2="544.6" y2="240.5" stroke="#1c1c1c" stroke-width="1.8"/>
<rect x="610.5" y="86.5" width="140" height="306" fill="#242424"/>
<line x1="610.5" y1="138.5" x2="750.5" y2="138.5" stroke="#999999" stroke-width="1"/>
<line x1="610.5" y1="189.5" x2="750.5" y2="189.5" stroke="#999999" stroke-width="1"/>
<line x1="610.5" y1="240.5" x2="750.5" y2="240.5" stroke="#999999" stroke-width="1"/>
<line x1="610.5" y1="291.5" x2="750.5" y2="291.5" stroke="#999999" stroke-width="1"/>
<line x1="610.5" y1="343.5" x2="750.5" y2="343.5" stroke="#999999" stroke-width="1"/>
<rect x="610.5" y="86.5" width="140" height="306" fill="none" stroke="#999999" stroke-width="1"/>
<line x1="610.5" y1="87.5" x2="750.5" y2="87.5" stroke="#5a5a5a" stroke-width="1"/>
<line x1="604.5" y1="86.5" x2="610.5" y2="86.5" stroke="#c0c0c0" stroke-width="1"/>
<text x="604.2" y="91.9" font-size="13.7" fill="#d4d4d4" text-anchor="end">15</text>
<line x1="604.5" y1="138.5" x2="610.5" y2="138.5" stroke="#c0c0c0" stroke-width="1"/>
<text x="604.2" y="143.9" font-size="13.7" fill="#d4d4d4" text-anchor="end">10</text>
<line x1="604.5" y1="189.5" x2="610.5" y2="189.5" stroke="#c0c0c0" stroke-width="1"/>
<text x="604.2" y="194.9" font-size="13.7" fill="#d4d4d4" text-anchor="end">5</text>
<line x1="604.5" y1="240.5" x2="610.5" y2="240.5" stroke="#c0c0c0" stroke-width="1"/>
<text x="604.2" y="245.9" font-size="13.7" fill="#d4d4d4" text-anchor="end">0</text>
<line x1="604.5" y1="291.5" x2="610.5" y2="291.5" stroke="#c0c0c0" stroke-width="1"/>
<text x="604.2" y="296.9" font-size="13.7" fill="#d4d4d4" text-anchor="end">-5</text>
<line x1="604.5" y1="343.5" x2="610.5" y2="343.5" stroke="#c0c0c0" stroke-width="1"/>
<text x="604.2" y="348.9" font-size="13.7" fill="#d4d4d4" text-anchor="end">-10</text>
<line x1="604.5" y1="392.5" x2="610.5" y2="392.5" stroke="#c0c0c0" stroke-width="1"/>
<text x="604.2" y="397.9" font-size="13.7" fill="#d4d4d4" text-anchor="end">-15</text>
<line x1="610.5" y1="392.5" x2="610.5" y2="398" stroke="#c0c0c0" stroke-width="1"/>
<line x1="750.5" y1="392.5" x2="750.5" y2="398" stroke="#c0c0c0" stroke-width="1"/>
<text x="680.5" y="408.0" font-size="13.6" fill="#d4d4d4" text-anchor="middle" textLength="36.8" lengthAdjust="spacingAndGlyphs">100W</text>
<text x="668.0" y="81.0" font-size="13.2" fill="#d4d4d4" text-anchor="middle" textLength="40.0" lengthAdjust="spacingAndGlyphs">DeltaC</text>
<rect x="801.5" y="86.5" width="140" height="306" fill="#242424"/>
<line x1="801.5" y1="138.5" x2="941.5" y2="138.5" stroke="#999999" stroke-width="1"/>
<line x1="801.5" y1="189.5" x2="941.5" y2="189.5" stroke="#999999" stroke-width="1"/>
<line x1="801.5" y1="240.5" x2="941.5" y2="240.5" stroke="#999999" stroke-width="1"/>
<line x1="801.5" y1="291.5" x2="941.5" y2="291.5" stroke="#999999" stroke-width="1"/>
<line x1="801.5" y1="343.5" x2="941.5" y2="343.5" stroke="#999999" stroke-width="1"/>
<rect x="801.5" y="86.5" width="140" height="306" fill="none" stroke="#999999" stroke-width="1"/>
<line x1="801.5" y1="87.5" x2="941.5" y2="87.5" stroke="#5a5a5a" stroke-width="1"/>
<line x1="795.5" y1="86.5" x2="801.5" y2="86.5" stroke="#c0c0c0" stroke-width="1"/>
<text x="795.2" y="91.9" font-size="13.7" fill="#d4d4d4" text-anchor="end">15</text>
<line x1="795.5" y1="138.5" x2="801.5" y2="138.5" stroke="#c0c0c0" stroke-width="1"/>
<text x="795.2" y="143.9" font-size="13.7" fill="#d4d4d4" text-anchor="end">10</text>
<line x1="795.5" y1="189.5" x2="801.5" y2="189.5" stroke="#c0c0c0" stroke-width="1"/>
<text x="795.2" y="194.9" font-size="13.7" fill="#d4d4d4" text-anchor="end">5</text>
<line x1="795.5" y1="240.5" x2="801.5" y2="240.5" stroke="#c0c0c0" stroke-width="1"/>
<text x="795.2" y="245.9" font-size="13.7" fill="#d4d4d4" text-anchor="end">0</text>
<line x1="795.5" y1="291.5" x2="801.5" y2="291.5" stroke="#c0c0c0" stroke-width="1"/>
<text x="795.2" y="296.9" font-size="13.7" fill="#d4d4d4" text-anchor="end">-5</text>
<line x1="795.5" y1="343.5" x2="801.5" y2="343.5" stroke="#c0c0c0" stroke-width="1"/>
<text x="795.2" y="348.9" font-size="13.7" fill="#d4d4d4" text-anchor="end">-10</text>
<line x1="795.5" y1="392.5" x2="801.5" y2="392.5" stroke="#c0c0c0" stroke-width="1"/>
<text x="795.2" y="397.9" font-size="13.7" fill="#d4d4d4" text-anchor="end">-15</text>
<line x1="801.5" y1="392.5" x2="801.5" y2="398" stroke="#c0c0c0" stroke-width="1"/>
<line x1="941.5" y1="392.5" x2="941.5" y2="398" stroke="#c0c0c0" stroke-width="1"/>
<text x="871.5" y="408.0" font-size="13.6" fill="#d4d4d4" text-anchor="middle" textLength="36.8" lengthAdjust="spacingAndGlyphs">100W</text>
<text x="859.0" y="81.0" font-size="13.2" fill="#d4d4d4" text-anchor="middle" textLength="40.0" lengthAdjust="spacingAndGlyphs">DeltaH</text>
<line x1="815.7" y1="240.5" x2="926.6" y2="240.5" stroke="#1c1c1c" stroke-width="1.8"/>
<rect x="625" y="146.5" width="110.5" height="94" fill="url(#dcb)" stroke="#000" stroke-width="1.4"/>
<rect x="388" y="424" width="572" height="158" fill="#000"/>
<rect x="405" y="431" width="60" height="65" fill="#b7bec8"/>
<rect x="405" y="495.7" width="60" height="64.3" fill="#c0c0c0"/>
<rect x="405.5" y="431.5" width="59" height="128" fill="none" stroke="#f0f0f0" stroke-width="1"/>
<text x="435.0" y="574.0" font-size="11.6" fill="#fff" text-anchor="middle" textLength="30.6" lengthAdjust="spacingAndGlyphs" font-weight="bold">White</text>
<rect x="474.85" y="431" width="60" height="65" fill="#c80020"/>
<rect x="474.85" y="495.7" width="60" height="64.3" fill="#dc2020"/>
<rect x="475.35" y="431.5" width="59" height="128" fill="none" stroke="#f0f0f0" stroke-width="1"/>
<text x="504.9" y="574.0" font-size="11.6" fill="#fff" text-anchor="middle" textLength="21.3" lengthAdjust="spacingAndGlyphs" font-weight="bold">Red</text>
<rect x="544.7" y="431" width="60" height="65" fill="#00d6a0"/>
<rect x="544.7" y="495.7" width="60" height="64.3" fill="#00cc6e"/>
<rect x="545.2" y="431.5" width="59" height="128" fill="none" stroke="#f0f0f0" stroke-width="1"/>
<text x="574.7" y="574.0" font-size="11.6" fill="#fff" text-anchor="middle" textLength="32.5" lengthAdjust="spacingAndGlyphs" font-weight="bold">Green</text>
<rect x="614.55" y="431" width="60" height="65" fill="#0a1ed2"/>
<rect x="614.55" y="495.7" width="60" height="64.3" fill="#0000be"/>
<rect x="615.05" y="431.5" width="59" height="128" fill="none" stroke="#f0f0f0" stroke-width="1"/>
<text x="644.5" y="574.0" font-size="11.6" fill="#fff" text-anchor="middle" textLength="24.4" lengthAdjust="spacingAndGlyphs" font-weight="bold">Blue</text>
<rect x="684.4" y="431" width="60" height="65" fill="#7dd0c8"/>
<rect x="684.4" y="495.7" width="60" height="64.3" fill="#00cccc"/>
<rect x="684.9" y="431.5" width="59" height="128" fill="none" stroke="#f0f0f0" stroke-width="1"/>
<text x="714.4" y="574.0" font-size="11.6" fill="#fff" text-anchor="middle" textLength="27.5" lengthAdjust="spacingAndGlyphs" font-weight="bold">Cyan</text>
<rect x="754.25" y="431" width="60" height="65" fill="#c800d0"/>
<rect x="754.25" y="495.7" width="60" height="64.3" fill="#dc10be"/>
<rect x="754.75" y="431.5" width="59" height="128" fill="none" stroke="#f0f0f0" stroke-width="1"/>
<text x="784.2" y="574.0" font-size="11.6" fill="#fff" text-anchor="middle" textLength="45.6" lengthAdjust="spacingAndGlyphs" font-weight="bold">Magenta</text>
<rect x="824.1" y="431" width="60" height="65" fill="#bec400"/>
<rect x="824.1" y="495.7" width="60" height="64.3" fill="#c4c240"/>
<rect x="824.6" y="431.5" width="59" height="128" fill="none" stroke="#f0f0f0" stroke-width="1"/>
<text x="854.1" y="574.0" font-size="11.6" fill="#fff" text-anchor="middle" textLength="35.0" lengthAdjust="spacingAndGlyphs" font-weight="bold">Yellow</text>
<rect x="893.95" y="431" width="60" height="65" fill="#e6eeff"/>
<rect x="893.95" y="495.7" width="60" height="64.3" fill="#ececec"/>
<rect x="894.45" y="431.5" width="59" height="128" fill="none" stroke="#f0f0f0" stroke-width="1"/>
<text x="923.9" y="574.0" font-size="11.6" fill="#fff" text-anchor="middle" textLength="29.4" lengthAdjust="spacingAndGlyphs" font-weight="bold">100W</text>
<text transform="translate(400.3,476) rotate(-90)" font-size="11.6" font-weight="bold" fill="#fff" textLength="33" lengthAdjust="spacingAndGlyphs">Actual</text>
<text transform="translate(400.3,548.3) rotate(-90)" font-size="11.6" font-weight="bold" fill="#fff" textLength="33.6" lengthAdjust="spacingAndGlyphs">Target</text>
<rect x="967" y="56.5" width="671" height="539" fill="#1e1e1e"/>
<rect x="973.5" y="62" width="658.5" height="527.5" fill="#343434"/>
<rect x="1009.5" y="84.5" width="619" height="477.5" fill="#242424"/>
<g clip-path="url(#cp)"><g clip-path="url(#cl)" shape-rendering="crispEdges"><rect x="1035" y="95" width="70" height="2" fill="url(#a0)"/><rect x="1028" y="97" width="99" height="2" fill="url(#a1)"/><rect x="1024" y="99" width="123" height="2" fill="url(#a2)"/><rect x="1021" y="101" width="145" height="2" fill="url(#a3)"/><rect x="1018" y="103" width="166" height="2" fill="url(#a4)"/><rect x="1017" y="105" width="185" height="2" fill="url(#a5)"/><rect x="1015" y="107" width="204" height="2" fill="url(#a6)"/><rect x="1014" y="109" width="222" height="2" fill="url(#a7)"/><rect x="1013" y="111" width="241" height="2" fill="url(#a8)"/><rect x="1012" y="113" width="259" height="2" fill="url(#a9)"/><rect x="1011" y="115" width="277" height="2" fill="url(#a10)"/><rect x="1011" y="117" width="295" height="2" fill="url(#a11)"/><rect x="1010" y="119" width="313" height="2" fill="url(#a12)"/><rect x="1010" y="121" width="331" height="2" fill="url(#a13)"/><rect x="1010" y="123" width="348" height="2" fill="url(#a14)"/><rect x="1010" y="125" width="365" height="2" fill="url(#a15)"/><rect x="1010" y="127" width="382" height="2" fill="url(#a16)"/><rect x="1010" y="129" width="400" height="2" fill="url(#a17)"/><rect x="1010" y="131" width="417" height="2" fill="url(#a18)"/><rect x="1010" y="133" width="434" height="2" fill="url(#a19)"/><rect x="1010" y="135" width="452" height="2" fill="url(#a20)"/><rect x="1010" y="137" width="469" height="2" fill="url(#a21)"/><rect x="1010" y="139" width="487" height="2" fill="url(#a22)"/><rect x="1010" y="141" width="504" height="2" fill="url(#a23)"/><rect x="1010" y="143" width="521" height="2" fill="url(#a24)"/><rect x="1010" y="145" width="539" height="2" fill="url(#a25)"/><rect x="1010" y="147" width="556" height="2" fill="url(#a26)"/><rect x="1011" y="149" width="572" height="2" fill="url(#a27)"/><rect x="1011" y="151" width="590" height="2" fill="url(#a28)"/><rect x="1011" y="153" width="607" height="2" fill="url(#a29)"/><rect x="1012" y="155" width="616" height="2" fill="url(#a30)"/><rect x="1012" y="157" width="616" height="2" fill="url(#a31)"/><rect x="1012" y="159" width="616" height="2" fill="url(#a32)"/><rect x="1013" y="161" width="615" height="2" fill="url(#a33)"/><rect x="1013" y="163" width="615" height="2" fill="url(#a34)"/><rect x="1014" y="165" width="614" height="2" fill="url(#a35)"/><rect x="1014" y="167" width="614" height="2" fill="url(#a36)"/><rect x="1015" y="169" width="613" height="2" fill="url(#a37)"/><rect x="1015" y="171" width="613" height="2" fill="url(#a38)"/><rect x="1016" y="173" width="612" height="2" fill="url(#a39)"/><rect x="1016" y="175" width="612" height="2" fill="url(#a40)"/><rect x="1017" y="177" width="611" height="2" fill="url(#a41)"/><rect x="1017" y="179" width="611" height="2" fill="url(#a42)"/><rect x="1018" y="181" width="610" height="2" fill="url(#a43)"/><rect x="1019" y="183" width="609" height="2" fill="url(#a44)"/><rect x="1019" y="185" width="609" height="2" fill="url(#a45)"/><rect x="1020" y="187" width="606" height="2" fill="url(#a46)"/><rect x="1020" y="189" width="604" height="2" fill="url(#a47)"/><rect x="1021" y="191" width="601" height="2" fill="url(#a48)"/><rect x="1022" y="193" width="598" height="2" fill="url(#a49)"/><rect x="1022" y="195" width="596" height="2" fill="url(#a50)"/><rect x="1023" y="197" width="593" height="2" fill="url(#a51)"/><rect x="1024" y="199" width="590" height="2" fill="url(#a52)"/><rect x="1024" y="201" width="588" height="2" fill="url(#a53)"/><rect x="1025" y="203" width="585" height="2" fill="url(#a54)"/><rect x="1026" y="205" width="582" height="2" fill="url(#a55)"/><rect x="1026" y="207" width="580" height="2" fill="url(#a56)"/><rect x="1027" y="209" width="578" height="2" fill="url(#a57)"/><rect x="1028" y="211" width="575" height="2" fill="url(#a58)"/><rect x="1029" y="213" width="572" height="2" fill="url(#a59)"/><rect x="1029" y="215" width="570" height="2" fill="url(#a60)"/><rect x="1030" y="217" width="567" height="2" fill="url(#a61)"/><rect x="1031" y="219" width="564" height="2" fill="url(#a62)"/><rect x="1032" y="221" width="561" height="2" fill="url(#a63)"/><rect x="1032" y="223" width="559" height="2" fill="url(#a64)"/><rect x="1033" y="225" width="556" height="2" fill="url(#a65)"/><rect x="1034" y="227" width="553" height="2" fill="url(#a66)"/><rect x="1035" y="229" width="550" height="2" fill="url(#a67)"/><rect x="1036" y="231" width="547" height="2" fill="url(#a68)"/><rect x="1036" y="233" width="545" height="2" fill="url(#a69)"/><rect x="1037" y="235" width="542" height="2" fill="url(#a70)"/><rect x="1038" y="237" width="539" height="2" fill="url(#a71)"/><rect x="1039" y="239" width="536" height="2" fill="url(#a72)"/><rect x="1040" y="241" width="534" height="2" fill="url(#a73)"/><rect x="1040" y="243" width="532" height="2" fill="url(#a74)"/><rect x="1041" y="245" width="529" height="2" fill="url(#a75)"/><rect x="1042" y="247" width="526" height="2" fill="url(#a76)"/><rect x="1043" y="249" width="523" height="2" fill="url(#a77)"/><rect x="1044" y="251" width="520" height="2" fill="url(#a78)"/><rect x="1045" y="253" width="517" height="2" fill="url(#a79)"/><rect x="1046" y="255" width="514" height="2" fill="url(#a80)"/><rect x="1046" y="257" width="512" height="2" fill="url(#a81)"/><rect x="1047" y="259" width="509" height="2" fill="url(#a82)"/><rect x="1048" y="261" width="506" height="2" fill="url(#a83)"/><rect x="1049" y="263" width="503" height="2" fill="url(#a84)"/><rect x="1050" y="265" width="500" height="2" fill="url(#a85)"/><rect x="1051" y="267" width="497" height="2" fill="url(#a86)"/><rect x="1052" y="269" width="494" height="2" fill="url(#a87)"/><rect x="1053" y="271" width="491" height="2" fill="url(#a88)"/><rect x="1054" y="273" width="489" height="2" fill="url(#a89)"/><rect x="1055" y="275" width="486" height="2" fill="url(#a90)"/><rect x="1056" y="277" width="483" height="2" fill="url(#a91)"/><rect x="1057" y="279" width="480" height="2" fill="url(#a92)"/><rect x="1058" y="281" width="477" height="2" fill="url(#a93)"/><rect x="1059" y="283" width="474" height="2" fill="url(#a94)"/><rect x="1060" y="285" width="471" height="2" fill="url(#a95)"/><rect x="1060" y="287" width="469" height="2" fill="url(#a96)"/><rect x="1061" y="289" width="466" height="2" fill="url(#a97)"/><rect x="1063" y="291" width="462" height="2" fill="url(#a98)"/><rect x="1064" y="293" width="459" height="2" fill="url(#a99)"/><rect x="1065" y="295" width="456" height="2" fill="url(#a100)"/><rect x="1066" y="297" width="453" height="2" fill="url(#a101)"/><rect x="1067" y="299" width="450" height="2" fill="url(#a102)"/><rect x="1068" y="301" width="447" height="2" fill="url(#a103)"/><rect x="1069" y="303" width="444" height="2" fill="url(#a104)"/><rect x="1070" y="305" width="442" height="2" fill="url(#a105)"/><rect x="1071" y="307" width="439" height="2" fill="url(#a106)"/><rect x="1072" y="309" width="436" height="2" fill="url(#a107)"/><rect x="1073" y="311" width="433" height="2" fill="url(#a108)"/><rect x="1074" y="313" width="430" height="2" fill="url(#a109)"/><rect x="1075" y="315" width="427" height="2" fill="url(#a110)"/><rect x="1076" y="317" width="424" height="2" fill="url(#a111)"/><rect x="1077" y="319" width="421" height="2" fill="url(#a112)"/><rect x="1079" y="321" width="417" height="2" fill="url(#a113)"/><rect x="1080" y="323" width="414" height="2" fill="url(#a114)"/><rect x="1081" y="325" width="411" height="2" fill="url(#a115)"/><rect x="1082" y="327" width="408" height="2" fill="url(#a116)"/><rect x="1083" y="329" width="405" height="2" fill="url(#a117)"/><rect x="1084" y="331" width="402" height="2" fill="url(#a118)"/><rect x="1085" y="333" width="399" height="2" fill="url(#a119)"/><rect x="1087" y="335" width="395" height="2" fill="url(#a120)"/><rect x="1088" y="337" width="393" height="2" fill="url(#a121)"/><rect x="1089" y="339" width="390" height="2" fill="url(#a122)"/><rect x="1090" y="341" width="387" height="2" fill="url(#a123)"/><rect x="1091" y="343" width="384" height="2" fill="url(#a124)"/><rect x="1092" y="345" width="381" height="2" fill="url(#a125)"/><rect x="1094" y="347" width="377" height="2" fill="url(#a126)"/><rect x="1095" y="349" width="374" height="2" fill="url(#a127)"/><rect x="1096" y="351" width="371" height="2" fill="url(#a128)"/><rect x="1097" y="353" width="368" height="2" fill="url(#a129)"/><rect x="1098" y="355" width="365" height="2" fill="url(#a130)"/><rect x="1100" y="357" width="361" height="2" fill="url(#a131)"/><rect x="1101" y="359" width="358" height="2" fill="url(#a132)"/><rect x="1102" y="361" width="355" height="2" fill="url(#a133)"/><rect x="1103" y="363" width="352" height="2" fill="url(#a134)"/><rect x="1104" y="365" width="349" height="2" fill="url(#a135)"/><rect x="1106" y="367" width="345" height="2" fill="url(#a136)"/><rect x="1107" y="369" width="343" height="2" fill="url(#a137)"/><rect x="1108" y="371" width="340" height="2" fill="url(#a138)"/><rect x="1109" y="373" width="337" height="2" fill="url(#a139)"/><rect x="1111" y="375" width="333" height="2" fill="url(#a140)"/><rect x="1112" y="377" width="330" height="2" fill="url(#a141)"/><rect x="1113" y="379" width="327" height="2" fill="url(#a142)"/><rect x="1114" y="381" width="324" height="2" fill="url(#a143)"/><rect x="1116" y="383" width="320" height="2" fill="url(#a144)"/><rect x="1117" y="385" width="317" height="2" fill="url(#a145)"/><rect x="1118" y="387" width="314" height="2" fill="url(#a146)"/><rect x="1119" y="389" width="311" height="2" fill="url(#a147)"/><rect x="1121" y="391" width="307" height="2" fill="url(#a148)"/><rect x="1122" y="393" width="304" height="2" fill="url(#a149)"/><rect x="1123" y="395" width="301" height="2" fill="url(#a150)"/><rect x="1125" y="397" width="297" height="2" fill="url(#a151)"/><rect x="1126" y="399" width="294" height="2" fill="url(#a152)"/><rect x="1127" y="401" width="291" height="2" fill="url(#a153)"/><rect x="1129" y="403" width="288" height="2" fill="url(#a154)"/><rect x="1130" y="405" width="285" height="2" fill="url(#a155)"/><rect x="1131" y="407" width="282" height="2" fill="url(#a156)"/><rect x="1133" y="409" width="278" height="2" fill="url(#a157)"/><rect x="1134" y="411" width="275" height="2" fill="url(#a158)"/><rect x="1135" y="413" width="272" height="2" fill="url(#a159)"/><rect x="1137" y="415" width="268" height="2" fill="url(#a160)"/><rect x="1138" y="417" width="265" height="2" fill="url(#a161)"/><rect x="1140" y="419" width="261" height="2" fill="url(#a162)"/><rect x="1141" y="421" width="258" height="2" fill="url(#a163)"/><rect x="1142" y="423" width="255" height="2" fill="url(#a164)"/><rect x="1144" y="425" width="251" height="2" fill="url(#a165)"/><rect x="1145" y="427" width="248" height="2" fill="url(#a166)"/><rect x="1147" y="429" width="244" height="2" fill="url(#a167)"/><rect x="1148" y="431" width="241" height="2" fill="url(#a168)"/><rect x="1150" y="433" width="237" height="2" fill="url(#a169)"/><rect x="1151" y="435" width="235" height="2" fill="url(#a170)"/><rect x="1153" y="437" width="231" height="2" fill="url(#a171)"/><rect x="1154" y="439" width="228" height="2" fill="url(#a172)"/><rect x="1156" y="441" width="224" height="2" fill="url(#a173)"/><rect x="1157" y="443" width="221" height="2" fill="url(#a174)"/><rect x="1159" y="445" width="217" height="2" fill="url(#a175)"/><rect x="1160" y="447" width="214" height="2" fill="url(#a176)"/><rect x="1162" y="449" width="210" height="2" fill="url(#a177)"/><rect x="1164" y="451" width="206" height="2" fill="url(#a178)"/><rect x="1165" y="453" width="203" height="2" fill="url(#a179)"/><rect x="1167" y="455" width="199" height="2" fill="url(#a180)"/><rect x="1169" y="457" width="195" height="2" fill="url(#a181)"/><rect x="1170" y="459" width="192" height="2" fill="url(#a182)"/><rect x="1172" y="461" width="188" height="2" fill="url(#a183)"/><rect x="1173" y="463" width="185" height="2" fill="url(#a184)"/><rect x="1175" y="465" width="181" height="2" fill="url(#a185)"/><rect x="1177" y="467" width="178" height="2" fill="url(#a186)"/><rect x="1179" y="469" width="174" height="2" fill="url(#a187)"/><rect x="1180" y="471" width="171" height="2" fill="url(#a188)"/><rect x="1182" y="473" width="167" height="2" fill="url(#a189)"/><rect x="1184" y="475" width="163" height="2" fill="url(#a190)"/><rect x="1186" y="477" width="159" height="2" fill="url(#a191)"/><rect x="1188" y="479" width="155" height="2" fill="url(#a192)"/><rect x="1190" y="481" width="151" height="2" fill="url(#a193)"/><rect x="1192" y="483" width="147" height="2" fill="url(#a194)"/><rect x="1194" y="485" width="143" height="2" fill="url(#a195)"/><rect x="1196" y="487" width="139" height="2" fill="url(#a196)"/><rect x="1198" y="489" width="135" height="2" fill="url(#a197)"/><rect x="1200" y="491" width="131" height="2" fill="url(#a198)"/><rect x="1202" y="493" width="127" height="2" fill="url(#a199)"/><rect x="1204" y="495" width="123" height="2" fill="url(#a200)"/><rect x="1206" y="497" width="119" height="2" fill="url(#a201)"/><rect x="1208" y="499" width="116" height="2" fill="url(#a202)"/><rect x="1211" y="501" width="111" height="2" fill="url(#a203)"/><rect x="1213" y="503" width="107" height="2" fill="url(#a204)"/><rect x="1215" y="505" width="103" height="2" fill="url(#a205)"/><rect x="1217" y="507" width="99" height="2" fill="url(#a206)"/><rect x="1220" y="509" width="94" height="2" fill="url(#a207)"/><rect x="1222" y="511" width="90" height="2" fill="url(#a208)"/><rect x="1224" y="513" width="86" height="2" fill="url(#a209)"/><rect x="1227" y="515" width="81" height="2" fill="url(#a210)"/><rect x="1229" y="517" width="77" height="2" fill="url(#a211)"/><rect x="1232" y="519" width="72" height="2" fill="url(#a212)"/><rect x="1234" y="521" width="68" height="2" fill="url(#a213)"/><rect x="1237" y="523" width="63" height="2" fill="url(#a214)"/><rect x="1239" y="525" width="59" height="2" fill="url(#a215)"/><rect x="1241" y="527" width="55" height="2" fill="url(#a216)"/><rect x="1244" y="529" width="50" height="2" fill="url(#a217)"/><rect x="1246" y="531" width="47" height="2" fill="url(#a218)"/><rect x="1249" y="533" width="42" height="2" fill="url(#a219)"/><rect x="1251" y="535" width="38" height="2" fill="url(#a220)"/><rect x="1253" y="537" width="34" height="2" fill="url(#a221)"/><rect x="1256" y="539" width="29" height="2" fill="url(#a222)"/><rect x="1258" y="541" width="25" height="2" fill="url(#a223)"/><rect x="1260" y="543" width="21" height="2" fill="url(#a224)"/><rect x="1263" y="545" width="16" height="2" fill="url(#a225)"/><rect x="1266" y="547" width="11" height="2" fill="url(#a226)"/><rect x="1269" y="549" width="5" height="2" fill="url(#a227)"/></g><g clip-path="url(#ct)" shape-rendering="crispEdges"><rect x="1086" y="103" width="12" height="2" fill="url(#b0)"/><rect x="1086" y="105" width="30" height="2" fill="url(#b1)"/><rect x="1087" y="107" width="48" height="2" fill="url(#b2)"/><rect x="1087" y="109" width="66" height="2" fill="url(#b3)"/><rect x="1088" y="111" width="83" height="2" fill="url(#b4)"/><rect x="1089" y="113" width="101" height="2" fill="url(#b5)"/><rect x="1089" y="115" width="119" height="2" fill="url(#b6)"/><rect x="1090" y="117" width="137" height="2" fill="url(#b7)"/><rect x="1090" y="119" width="155" height="2" fill="url(#b8)"/><rect x="1091" y="121" width="172" height="2" fill="url(#b9)"/><rect x="1092" y="123" width="190" height="2" fill="url(#b10)"/><rect x="1092" y="125" width="208" height="2" fill="url(#b11)"/><rect x="1093" y="127" width="226" height="2" fill="url(#b12)"/><rect x="1094" y="129" width="243" height="2" fill="url(#b13)"/><rect x="1094" y="131" width="261" height="2" fill="url(#b14)"/><rect x="1095" y="133" width="279" height="2" fill="url(#b15)"/><rect x="1095" y="135" width="297" height="2" fill="url(#b16)"/><rect x="1096" y="137" width="315" height="2" fill="url(#b17)"/><rect x="1097" y="139" width="332" height="2" fill="url(#b18)"/><rect x="1097" y="141" width="350" height="2" fill="url(#b19)"/><rect x="1098" y="143" width="368" height="2" fill="url(#b20)"/><rect x="1099" y="145" width="376" height="2" fill="url(#b21)"/><rect x="1099" y="147" width="375" height="2" fill="url(#b22)"/><rect x="1100" y="149" width="372" height="2" fill="url(#b23)"/><rect x="1100" y="151" width="370" height="2" fill="url(#b24)"/><rect x="1101" y="153" width="367" height="2" fill="url(#b25)"/><rect x="1102" y="155" width="364" height="2" fill="url(#b26)"/><rect x="1102" y="157" width="362" height="2" fill="url(#b27)"/><rect x="1103" y="159" width="359" height="2" fill="url(#b28)"/><rect x="1103" y="161" width="357" height="2" fill="url(#b29)"/><rect x="1104" y="163" width="355" height="2" fill="url(#b30)"/><rect x="1105" y="165" width="352" height="2" fill="url(#b31)"/><rect x="1105" y="167" width="350" height="2" fill="url(#b32)"/><rect x="1106" y="169" width="347" height="2" fill="url(#b33)"/><rect x="1107" y="171" width="344" height="2" fill="url(#b34)"/><rect x="1107" y="173" width="342" height="2" fill="url(#b35)"/><rect x="1108" y="175" width="339" height="2" fill="url(#b36)"/><rect x="1108" y="177" width="337" height="2" fill="url(#b37)"/><rect x="1109" y="179" width="334" height="2" fill="url(#b38)"/><rect x="1110" y="181" width="331" height="2" fill="url(#b39)"/><rect x="1110" y="183" width="329" height="2" fill="url(#b40)"/><rect x="1111" y="185" width="326" height="2" fill="url(#b41)"/><rect x="1112" y="187" width="323" height="2" fill="url(#b42)"/><rect x="1112" y="189" width="321" height="2" fill="url(#b43)"/><rect x="1113" y="191" width="318" height="2" fill="url(#b44)"/><rect x="1113" y="193" width="316" height="2" fill="url(#b45)"/><rect x="1114" y="195" width="313" height="2" fill="url(#b46)"/><rect x="1115" y="197" width="310" height="2" fill="url(#b47)"/><rect x="1115" y="199" width="308" height="2" fill="url(#b48)"/><rect x="1116" y="201" width="305" height="2" fill="url(#b49)"/><rect x="1116" y="203" width="303" height="2" fill="url(#b50)"/><rect x="1117" y="205" width="300" height="2" fill="url(#b51)"/><rect x="1118" y="207" width="298" height="2" fill="url(#b52)"/><rect x="1118" y="209" width="296" height="2" fill="url(#b53)"/><rect x="1119" y="211" width="293" height="2" fill="url(#b54)"/><rect x="1120" y="213" width="290" height="2" fill="url(#b55)"/><rect x="1120" y="215" width="288" height="2" fill="url(#b56)"/><rect x="1121" y="217" width="285" height="2" fill="url(#b57)"/><rect x="1121" y="219" width="283" height="2" fill="url(#b58)"/><rect x="1122" y="221" width="280" height="2" fill="url(#b59)"/><rect x="1123" y="223" width="277" height="2" fill="url(#b60)"/><rect x="1123" y="225" width="275" height="2" fill="url(#b61)"/><rect x="1124" y="227" width="272" height="2" fill="url(#b62)"/><rect x="1125" y="229" width="269" height="2" fill="url(#b63)"/><rect x="1125" y="231" width="267" height="2" fill="url(#b64)"/><rect x="1126" y="233" width="264" height="2" fill="url(#b65)"/><rect x="1126" y="235" width="262" height="2" fill="url(#b66)"/><rect x="1127" y="237" width="259" height="2" fill="url(#b67)"/><rect x="1128" y="239" width="256" height="2" fill="url(#b68)"/><rect x="1128" y="241" width="254" height="2" fill="url(#b69)"/><rect x="1129" y="243" width="251" height="2" fill="url(#b70)"/><rect x="1129" y="245" width="249" height="2" fill="url(#b71)"/><rect x="1130" y="247" width="246" height="2" fill="url(#b72)"/><rect x="1131" y="249" width="243" height="2" fill="url(#b73)"/><rect x="1131" y="251" width="242" height="2" fill="url(#b74)"/><rect x="1132" y="253" width="239" height="2" fill="url(#b75)"/><rect x="1133" y="255" width="236" height="2" fill="url(#b76)"/><rect x="1133" y="257" width="234" height="2" fill="url(#b77)"/><rect x="1134" y="259" width="231" height="2" fill="url(#b78)"/><rect x="1134" y="261" width="229" height="2" fill="url(#b79)"/><rect x="1135" y="263" width="226" height="2" fill="url(#b80)"/><rect x="1136" y="265" width="223" height="2" fill="url(#b81)"/><rect x="1136" y="267" width="221" height="2" fill="url(#b82)"/><rect x="1137" y="269" width="218" height="2" fill="url(#b83)"/><rect x="1138" y="271" width="215" height="2" fill="url(#b84)"/><rect x="1138" y="273" width="213" height="2" fill="url(#b85)"/><rect x="1139" y="275" width="210" height="2" fill="url(#b86)"/><rect x="1139" y="277" width="208" height="2" fill="url(#b87)"/><rect x="1140" y="279" width="205" height="2" fill="url(#b88)"/><rect x="1141" y="281" width="202" height="2" fill="url(#b89)"/><rect x="1141" y="283" width="200" height="2" fill="url(#b90)"/><rect x="1142" y="285" width="197" height="2" fill="url(#b91)"/><rect x="1142" y="287" width="195" height="2" fill="url(#b92)"/><rect x="1143" y="289" width="192" height="2" fill="url(#b93)"/><rect x="1144" y="291" width="189" height="2" fill="url(#b94)"/><rect x="1144" y="293" width="187" height="2" fill="url(#b95)"/><rect x="1145" y="295" width="185" height="2" fill="url(#b96)"/><rect x="1146" y="297" width="182" height="2" fill="url(#b97)"/><rect x="1146" y="299" width="180" height="2" fill="url(#b98)"/><rect x="1147" y="301" width="177" height="2" fill="url(#b99)"/><rect x="1147" y="303" width="175" height="2" fill="url(#b100)"/><rect x="1148" y="305" width="172" height="2" fill="url(#b101)"/><rect x="1149" y="307" width="169" height="2" fill="url(#b102)"/><rect x="1149" y="309" width="167" height="2" fill="url(#b103)"/><rect x="1150" y="311" width="164" height="2" fill="url(#b104)"/><rect x="1150" y="313" width="162" height="2" fill="url(#b105)"/><rect x="1151" y="315" width="159" height="2" fill="url(#b106)"/><rect x="1152" y="317" width="156" height="2" fill="url(#b107)"/><rect x="1152" y="319" width="154" height="2" fill="url(#b108)"/><rect x="1153" y="321" width="151" height="2" fill="url(#b109)"/><rect x="1154" y="323" width="148" height="2" fill="url(#b110)"/><rect x="1154" y="325" width="146" height="2" fill="url(#b111)"/><rect x="1155" y="327" width="143" height="2" fill="url(#b112)"/><rect x="1155" y="329" width="141" height="2" fill="url(#b113)"/><rect x="1156" y="331" width="138" height="2" fill="url(#b114)"/><rect x="1157" y="333" width="135" height="2" fill="url(#b115)"/><rect x="1157" y="335" width="133" height="2" fill="url(#b116)"/><rect x="1158" y="337" width="131" height="2" fill="url(#b117)"/><rect x="1159" y="339" width="128" height="2" fill="url(#b118)"/><rect x="1159" y="341" width="126" height="2" fill="url(#b119)"/><rect x="1160" y="343" width="123" height="2" fill="url(#b120)"/><rect x="1160" y="345" width="121" height="2" fill="url(#b121)"/><rect x="1161" y="347" width="118" height="2" fill="url(#b122)"/><rect x="1162" y="349" width="115" height="2" fill="url(#b123)"/><rect x="1162" y="351" width="113" height="2" fill="url(#b124)"/><rect x="1163" y="353" width="110" height="2" fill="url(#b125)"/><rect x="1163" y="355" width="108" height="2" fill="url(#b126)"/><rect x="1164" y="357" width="105" height="2" fill="url(#b127)"/><rect x="1165" y="359" width="102" height="2" fill="url(#b128)"/><rect x="1165" y="361" width="100" height="2" fill="url(#b129)"/><rect x="1166" y="363" width="97" height="2" fill="url(#b130)"/><rect x="1167" y="365" width="94" height="2" fill="url(#b131)"/><rect x="1167" y="367" width="92" height="2" fill="url(#b132)"/><rect x="1168" y="369" width="89" height="2" fill="url(#b133)"/><rect x="1168" y="371" width="87" height="2" fill="url(#b134)"/><rect x="1169" y="373" width="84" height="2" fill="url(#b135)"/><rect x="1170" y="375" width="81" height="2" fill="url(#b136)"/><rect x="1170" y="377" width="79" height="2" fill="url(#b137)"/><rect x="1171" y="379" width="76" height="2" fill="url(#b138)"/><rect x="1172" y="381" width="74" height="2" fill="url(#b139)"/><rect x="1172" y="383" width="72" height="2" fill="url(#b140)"/><rect x="1173" y="385" width="69" height="2" fill="url(#b141)"/><rect x="1173" y="387" width="67" height="2" fill="url(#b142)"/><rect x="1174" y="389" width="64" height="2" fill="url(#b143)"/><rect x="1175" y="391" width="61" height="2" fill="url(#b144)"/><rect x="1175" y="393" width="59" height="2" fill="url(#b145)"/><rect x="1176" y="395" width="56" height="2" fill="url(#b146)"/><rect x="1176" y="397" width="54" height="2" fill="url(#b147)"/><rect x="1177" y="399" width="51" height="2" fill="url(#b148)"/><rect x="1178" y="401" width="48" height="2" fill="url(#b149)"/><rect x="1178" y="403" width="46" height="2" fill="url(#b150)"/><rect x="1179" y="405" width="43" height="2" fill="url(#b151)"/><rect x="1180" y="407" width="40" height="2" fill="url(#b152)"/><rect x="1180" y="409" width="38" height="2" fill="url(#b153)"/><rect x="1181" y="411" width="35" height="2" fill="url(#b154)"/><rect x="1181" y="413" width="33" height="2" fill="url(#b155)"/><rect x="1182" y="415" width="30" height="2" fill="url(#b156)"/><rect x="1183" y="417" width="27" height="2" fill="url(#b157)"/><rect x="1183" y="419" width="25" height="2" fill="url(#b158)"/><rect x="1184" y="421" width="22" height="2" fill="url(#b159)"/><rect x="1185" y="423" width="19" height="2" fill="url(#b160)"/><rect x="1185" y="425" width="18" height="2" fill="url(#b161)"/><rect x="1186" y="427" width="15" height="2" fill="url(#b162)"/><rect x="1186" y="429" width="13" height="2" fill="url(#b163)"/><rect x="1187" y="431" width="10" height="2" fill="url(#b164)"/><rect x="1188" y="433" width="7" height="2" fill="url(#b165)"/><rect x="1188" y="435" width="5" height="2" fill="url(#b166)"/></g></g>
<rect x="1009.5" y="84.5" width="619" height="477.5" fill="none" stroke="#a8a8a8" stroke-width="1"/>
<text x="1302.5" y="79.5" font-size="13.2" fill="#d4d4d4" text-anchor="middle" textLength="83.0" lengthAdjust="spacingAndGlyphs">CIE 1976 u'v'</text>
<line x1="1003.5" y1="561.7" x2="1009.5" y2="561.7" stroke="#d4d4d4" stroke-width="1.3"/>
<text x="1003.0" y="567.7" font-size="13.7" fill="#d4d4d4" text-anchor="end">0</text>
<line x1="1009.4" y1="562" x2="1009.4" y2="568" stroke="#d4d4d4" stroke-width="1.4"/>
<text x="1009.4" y="581.7" font-size="13.7" fill="#d4d4d4" text-anchor="middle">0</text>
<line x1="1003.5" y1="521.95" x2="1009.5" y2="521.95" stroke="#d4d4d4" stroke-width="1.3"/>
<text x="1003.0" y="527.4" font-size="13.7" fill="#d4d4d4" text-anchor="end">0,05</text>
<line x1="1060.9" y1="562" x2="1060.9" y2="568" stroke="#d4d4d4" stroke-width="1.4"/>
<text x="1060.9" y="581.7" font-size="13.7" fill="#d4d4d4" text-anchor="middle">0,05</text>
<line x1="1003.5" y1="482.2" x2="1009.5" y2="482.2" stroke="#d4d4d4" stroke-width="1.3"/>
<text x="1003.0" y="487.6" font-size="13.7" fill="#d4d4d4" text-anchor="end">0,1</text>
<line x1="1112.4" y1="562" x2="1112.4" y2="568" stroke="#d4d4d4" stroke-width="1.4"/>
<text x="1112.4" y="581.7" font-size="13.7" fill="#d4d4d4" text-anchor="middle">0,1</text>
<line x1="1003.5" y1="442.45" x2="1009.5" y2="442.45" stroke="#d4d4d4" stroke-width="1.3"/>
<text x="1003.0" y="447.9" font-size="13.7" fill="#d4d4d4" text-anchor="end">0,15</text>
<line x1="1163.9" y1="562" x2="1163.9" y2="568" stroke="#d4d4d4" stroke-width="1.4"/>
<text x="1163.9" y="581.7" font-size="13.7" fill="#d4d4d4" text-anchor="middle">0,15</text>
<line x1="1003.5" y1="402.7" x2="1009.5" y2="402.7" stroke="#d4d4d4" stroke-width="1.3"/>
<text x="1003.0" y="408.1" font-size="13.7" fill="#d4d4d4" text-anchor="end">0,2</text>
<line x1="1215.4" y1="562" x2="1215.4" y2="568" stroke="#d4d4d4" stroke-width="1.4"/>
<text x="1215.4" y="581.7" font-size="13.7" fill="#d4d4d4" text-anchor="middle">0,2</text>
<line x1="1003.5" y1="362.95" x2="1009.5" y2="362.95" stroke="#d4d4d4" stroke-width="1.3"/>
<text x="1003.0" y="368.4" font-size="13.7" fill="#d4d4d4" text-anchor="end">0,25</text>
<line x1="1266.9" y1="562" x2="1266.9" y2="568" stroke="#d4d4d4" stroke-width="1.4"/>
<text x="1266.9" y="581.7" font-size="13.7" fill="#d4d4d4" text-anchor="middle">0,25</text>
<line x1="1003.5" y1="323.2" x2="1009.5" y2="323.2" stroke="#d4d4d4" stroke-width="1.3"/>
<text x="1003.0" y="328.6" font-size="13.7" fill="#d4d4d4" text-anchor="end">0,3</text>
<line x1="1318.4" y1="562" x2="1318.4" y2="568" stroke="#d4d4d4" stroke-width="1.4"/>
<text x="1318.4" y="581.7" font-size="13.7" fill="#d4d4d4" text-anchor="middle">0,3</text>
<line x1="1003.5" y1="283.45" x2="1009.5" y2="283.45" stroke="#d4d4d4" stroke-width="1.3"/>
<text x="1003.0" y="288.9" font-size="13.7" fill="#d4d4d4" text-anchor="end">0,35</text>
<line x1="1369.9" y1="562" x2="1369.9" y2="568" stroke="#d4d4d4" stroke-width="1.4"/>
<text x="1369.9" y="581.7" font-size="13.7" fill="#d4d4d4" text-anchor="middle">0,35</text>
<line x1="1003.5" y1="243.7" x2="1009.5" y2="243.7" stroke="#d4d4d4" stroke-width="1.3"/>
<text x="1003.0" y="249.1" font-size="13.7" fill="#d4d4d4" text-anchor="end">0,4</text>
<line x1="1421.4" y1="562" x2="1421.4" y2="568" stroke="#d4d4d4" stroke-width="1.4"/>
<text x="1421.4" y="581.7" font-size="13.7" fill="#d4d4d4" text-anchor="middle">0,4</text>
<line x1="1003.5" y1="203.95" x2="1009.5" y2="203.95" stroke="#d4d4d4" stroke-width="1.3"/>
<text x="1003.0" y="209.4" font-size="13.7" fill="#d4d4d4" text-anchor="end">0,45</text>
<line x1="1472.9" y1="562" x2="1472.9" y2="568" stroke="#d4d4d4" stroke-width="1.4"/>
<text x="1472.9" y="581.7" font-size="13.7" fill="#d4d4d4" text-anchor="middle">0,45</text>
<line x1="1003.5" y1="164.2" x2="1009.5" y2="164.2" stroke="#d4d4d4" stroke-width="1.3"/>
<text x="1003.0" y="169.6" font-size="13.7" fill="#d4d4d4" text-anchor="end">0,5</text>
<line x1="1524.4" y1="562" x2="1524.4" y2="568" stroke="#d4d4d4" stroke-width="1.4"/>
<text x="1524.4" y="581.7" font-size="13.7" fill="#d4d4d4" text-anchor="middle">0,5</text>
<line x1="1003.5" y1="124.45" x2="1009.5" y2="124.45" stroke="#d4d4d4" stroke-width="1.3"/>
<text x="1003.0" y="129.8" font-size="13.7" fill="#d4d4d4" text-anchor="end">0,55</text>
<line x1="1575.9" y1="562" x2="1575.9" y2="568" stroke="#d4d4d4" stroke-width="1.4"/>
<text x="1575.9" y="581.7" font-size="13.7" fill="#d4d4d4" text-anchor="middle">0,55</text>
<rect x="1467.4" y="139.1" width="12.8" height="12.8" stroke="#fff" stroke-width="1.8" fill="none" stroke-opacity="0.92"/>
<rect x="1081.5" y="97.3" width="12.8" height="12.8" stroke="#fff" stroke-width="1.8" fill="none" stroke-opacity="0.92"/>
<rect x="1184.1" y="428.7" width="12.8" height="12.8" stroke="#fff" stroke-width="1.8" fill="none" stroke-opacity="0.92"/>
<rect x="1112.7" y="198.1" width="12.8" height="12.8" stroke="#fff" stroke-width="1.8" fill="none" stroke-opacity="0.92"/>
<rect x="1338.2" y="271.2" width="12.8" height="12.8" stroke="#fff" stroke-width="1.8" fill="none" stroke-opacity="0.92"/>
<rect x="1213.8" y="111.6" width="12.8" height="12.8" stroke="#fff" stroke-width="1.8" fill="none" stroke-opacity="0.92"/>
<rect x="1207.2" y="182.4" width="12.8" height="12.8" stroke="#000" stroke-width="2" fill="#fff" fill-opacity="0.35"/>
<circle cx="1504.8" cy="142.5" r="4.1" fill="#c00000" stroke="#000" stroke-width="1.1"/>
<circle cx="1113.3" cy="102.8" r="4.1" fill="#00a800" stroke="#000" stroke-width="1.1"/>
<circle cx="1189.0" cy="420.6" r="4.1" fill="#0000a8" stroke="#000" stroke-width="1.1"/>
<circle cx="1138.2" cy="205.8" r="4.1" fill="#20a8a0" stroke="#000" stroke-width="1.1"/>
<circle cx="1321.8" cy="304.5" r="4.1" fill="#a800a8" stroke="#000" stroke-width="1.1"/>
<circle cx="1213.1" cy="112.9" r="4.1" fill="#a8a800" stroke="#000" stroke-width="1.1"/>
<circle cx="1208.2" cy="195.7" r="4.1" fill="#c0c0c0" stroke="#000" stroke-width="1.1"/>
<circle cx="1208.1" cy="197.6" r="4.1" fill="#ffffff" stroke="#000" stroke-width="1.1"/>
<rect x="1381.5" y="529.5" width="243.5" height="26.5" fill="#333"/>
<text x="1382.0" y="550.0" font-size="19.5" fill="#f4f4f4" textLength="151.0" lengthAdjust="spacingAndGlyphs">Gamut Coverage:</text>
<text x="1543.5" y="550.0" font-size="19.5" fill="#f4f4f4" textLength="53.0" lengthAdjust="spacingAndGlyphs">86,8%</text>
<text x="39.5" y="658.3" font-size="25.5" fill="#f4f4f4" textLength="210.8" lengthAdjust="spacingAndGlyphs" stroke="#f4f4f4" stroke-width="0.35">Current Reading</text>
<text x="39.5" y="726.5" font-size="22.5" fill="#f4f4f4" textLength="98.7" lengthAdjust="spacingAndGlyphs" stroke="#f4f4f4" stroke-width="0.35">x: 0,2967</text>
<text x="190.6" y="726.5" font-size="22.5" fill="#f4f4f4" textLength="99.2" lengthAdjust="spacingAndGlyphs" stroke="#f4f4f4" stroke-width="0.35">y: 0,3132</text>
<text x="39.5" y="765.5" font-size="22.5" fill="#f4f4f4" textLength="106.5" lengthAdjust="spacingAndGlyphs" stroke="#f4f4f4" stroke-width="0.35">fL: 136,94</text>
<text x="39.5" y="805.7" font-size="22.5" fill="#f4f4f4" textLength="139.4" lengthAdjust="spacingAndGlyphs" stroke="#f4f4f4" stroke-width="0.35">cd/m²: 469,2</text>
<rect x="367" y="633" width="245.5" height="174" fill="#242424"/>
<line x1="367" y1="677.5" x2="612.5" y2="677.5" stroke="#999999" stroke-width="1"/>
<line x1="367" y1="720.5" x2="612.5" y2="720.5" stroke="#999999" stroke-width="1"/>
<line x1="367" y1="764.5" x2="612.5" y2="764.5" stroke="#999999" stroke-width="1"/>
<rect x="367" y="633" width="245.5" height="174" fill="none" stroke="#999999" stroke-width="1"/>
<line x1="367" y1="634" x2="612.5" y2="634" stroke="#5a5a5a" stroke-width="1"/>
<line x1="361" y1="633" x2="367" y2="633" stroke="#c0c0c0" stroke-width="1"/>
<text x="360.5" y="638.0" font-size="13.6" fill="#d4d4d4" text-anchor="end">20</text>
<line x1="361" y1="677.5" x2="367" y2="677.5" stroke="#c0c0c0" stroke-width="1"/>
<text x="360.5" y="682.5" font-size="13.6" fill="#d4d4d4" text-anchor="end">10</text>
<line x1="361" y1="720.5" x2="367" y2="720.5" stroke="#c0c0c0" stroke-width="1"/>
<text x="360.5" y="725.5" font-size="13.6" fill="#d4d4d4" text-anchor="end">0</text>
<line x1="361" y1="764.5" x2="367" y2="764.5" stroke="#c0c0c0" stroke-width="1"/>
<text x="360.5" y="769.5" font-size="13.6" fill="#d4d4d4" text-anchor="end">-10</text>
<line x1="361" y1="807" x2="367" y2="807" stroke="#c0c0c0" stroke-width="1"/>
<text x="360.5" y="812.0" font-size="13.6" fill="#d4d4d4" text-anchor="end">-20</text>
<line x1="367" y1="807" x2="367" y2="812.5" stroke="#c0c0c0" stroke-width="1"/>
<line x1="612.5" y1="807" x2="612.5" y2="812.5" stroke="#c0c0c0" stroke-width="1"/>
<text x="489.7" y="823.0" font-size="13.6" fill="#d4d4d4" text-anchor="middle" textLength="36.9" lengthAdjust="spacingAndGlyphs">100W</text>
<text x="476.5" y="628.0" font-size="13.2" fill="#d4d4d4" text-anchor="middle" textLength="79.7" lengthAdjust="spacingAndGlyphs">RGB Balance</text>
<rect x="391.5" y="720.5" width="65.6" height="32" fill="url(#rr)" stroke="#000" stroke-width="1.2"/>
<rect x="457.1" y="715.6" width="66" height="4.9" fill="url(#rg)" stroke="#000" stroke-width="1.2"/>
<rect x="523.1" y="644.3" width="66" height="76.2" fill="url(#rb)" stroke="#000" stroke-width="1.2"/>
<text x="805.5" y="620.3" font-size="13.2" fill="#d4d4d4" text-anchor="middle" textLength="73.0" lengthAdjust="spacingAndGlyphs">CIE 1931 xy</text>
<g shape-rendering="crispEdges"><rect x="641" y="625" width="330" height="4" fill="url(#x0)"/><rect x="641" y="629" width="330" height="4" fill="url(#x1)"/><rect x="641" y="633" width="330" height="4" fill="url(#x2)"/><rect x="641" y="637" width="330" height="4" fill="url(#x3)"/><rect x="641" y="641" width="330" height="4" fill="url(#x4)"/><rect x="641" y="645" width="330" height="4" fill="url(#x5)"/><rect x="641" y="649" width="330" height="4" fill="url(#x6)"/><rect x="641" y="653" width="330" height="4" fill="url(#x7)"/><rect x="641" y="657" width="330" height="4" fill="url(#x8)"/><rect x="641" y="661" width="330" height="4" fill="url(#x9)"/><rect x="641" y="665" width="330" height="4" fill="url(#x10)"/><rect x="641" y="669" width="330" height="4" fill="url(#x11)"/><rect x="641" y="673" width="330" height="4" fill="url(#x12)"/><rect x="641" y="677" width="330" height="4" fill="url(#x13)"/><rect x="641" y="681" width="330" height="4" fill="url(#x14)"/><rect x="641" y="685" width="330" height="4" fill="url(#x15)"/><rect x="641" y="689" width="330" height="4" fill="url(#x16)"/><rect x="641" y="693" width="330" height="4" fill="url(#x17)"/><rect x="641" y="697" width="330" height="4" fill="url(#x18)"/><rect x="641" y="701" width="330" height="4" fill="url(#x19)"/><rect x="641" y="705" width="330" height="4" fill="url(#x20)"/><rect x="641" y="709" width="330" height="4" fill="url(#x21)"/><rect x="641" y="713" width="330" height="4" fill="url(#x22)"/><rect x="641" y="717" width="330" height="4" fill="url(#x23)"/><rect x="641" y="721" width="330" height="4" fill="url(#x24)"/><rect x="641" y="725" width="330" height="4" fill="url(#x25)"/><rect x="641" y="729" width="330" height="4" fill="url(#x26)"/><rect x="641" y="733" width="330" height="4" fill="url(#x27)"/><rect x="641" y="737" width="330" height="4" fill="url(#x28)"/><rect x="641" y="741" width="330" height="4" fill="url(#x29)"/><rect x="641" y="745" width="330" height="4" fill="url(#x30)"/><rect x="641" y="749" width="330" height="4" fill="url(#x31)"/><rect x="641" y="753" width="330" height="4" fill="url(#x32)"/><rect x="641" y="757" width="330" height="4" fill="url(#x33)"/><rect x="641" y="761" width="330" height="4" fill="url(#x34)"/><rect x="641" y="765" width="330" height="4" fill="url(#x35)"/><rect x="641" y="769" width="330" height="4" fill="url(#x36)"/><rect x="641" y="773" width="330" height="4" fill="url(#x37)"/><rect x="641" y="777" width="330" height="4" fill="url(#x38)"/><rect x="641" y="781" width="330" height="4" fill="url(#x39)"/><rect x="641" y="785" width="330" height="4" fill="url(#x40)"/><rect x="641" y="789" width="330" height="4" fill="url(#x41)"/><rect x="641" y="793" width="330" height="4" fill="url(#x42)"/><rect x="641" y="797" width="330" height="4" fill="url(#x43)"/><rect x="641" y="801" width="330" height="4" fill="url(#x44)"/><rect x="641" y="805" width="330" height="4" fill="url(#x45)"/><rect x="641" y="809" width="330" height="4" fill="url(#x46)"/><rect x="641" y="813" width="330" height="4" fill="url(#x47)"/></g>
<rect x="640.5" y="624.5" width="330.5" height="192.5" fill="none" stroke="#b0b0b0" stroke-width="1"/>
<rect x="799.3" y="713.3" width="12.4" height="12.4" fill="#fff" fill-opacity="0.5" stroke="#000" stroke-width="1.7"/>
<circle cx="713.4" cy="765.7" r="4" fill="#bcbcbc" stroke="#111" stroke-width="1"/>
<circle cx="698.9" cy="780.2" r="4.3" fill="#fff" stroke="#111" stroke-width="1"/>
<rect x="988" y="611" width="14" height="38" fill="#000"/>
<rect x="1002" y="611" width="598" height="38" fill="url(#thd)"/>
<clipPath id="tbc"><rect x="988" y="611" width="612" height="190.8"/></clipPath>
<g clip-path="url(#tbc)">
<rect x="1002" y="648.6" width="598" height="35" fill="#3e3e3e"/>
<rect x="988" y="648.6" width="14" height="35" fill="#2a2a2a"/>
<rect x="1002" y="684.2" width="598" height="35" fill="#7e7e7e"/>
<rect x="988" y="684.2" width="14" height="35" fill="#242424"/>
<rect x="1002" y="718.8" width="598" height="35" fill="#3e3e3e"/>
<rect x="988" y="718.8" width="14" height="35" fill="#2a2a2a"/>
<rect x="1002" y="753.4" width="598" height="35" fill="#7e7e7e"/>
<rect x="988" y="753.4" width="14" height="35" fill="#242424"/>
<rect x="1002" y="788.2" width="598" height="35" fill="#3e3e3e"/>
<rect x="988" y="788.2" width="14" height="35" fill="#2a2a2a"/>
<text x="1076.0" y="636.9" font-size="19.6" fill="#f0f0f0" textLength="41.0" lengthAdjust="spacingAndGlyphs">White</text>
<text x="1152.5" y="636.9" font-size="19.6" fill="#f0f0f0" textLength="26.5" lengthAdjust="spacingAndGlyphs">Red</text>
<text x="1220.0" y="636.9" font-size="19.6" fill="#f0f0f0" textLength="41.5" lengthAdjust="spacingAndGlyphs">Green</text>
<text x="1296.5" y="636.9" font-size="19.6" fill="#f0f0f0" textLength="29.5" lengthAdjust="spacingAndGlyphs">Blue</text>
<text x="1364.0" y="636.9" font-size="19.6" fill="#f0f0f0" textLength="33.0" lengthAdjust="spacingAndGlyphs">Cyan</text>
<text x="1441.0" y="636.9" font-size="19.6" fill="#f0f0f0" textLength="60.0" lengthAdjust="spacingAndGlyphs">Magenta</text>
<text x="1509.5" y="636.9" font-size="19.6" fill="#f0f0f0" textLength="44.0" lengthAdjust="spacingAndGlyphs">Yellow</text>
<text x="1586.5" y="636.9" font-size="19.6" fill="#f0f0f0" textLength="38.0" lengthAdjust="spacingAndGlyphs">100W</text>
<text x="1006.9" y="673.0" font-size="19.6" fill="#f0f0f0" textLength="55.3" lengthAdjust="spacingAndGlyphs">x: CIE31</text>
<text x="1076.0" y="673.0" font-size="19.6" fill="#f0f0f0" textLength="48.5" lengthAdjust="spacingAndGlyphs">0,2989</text>
<text x="1152.5" y="673.0" font-size="19.6" fill="#f0f0f0" textLength="48.5" lengthAdjust="spacingAndGlyphs">0,6702</text>
<text x="1220.0" y="673.0" font-size="19.6" fill="#f0f0f0" textLength="48.5" lengthAdjust="spacingAndGlyphs">0,2678</text>
<text x="1296.5" y="673.0" font-size="19.6" fill="#f0f0f0" textLength="48.5" lengthAdjust="spacingAndGlyphs">0,1531</text>
<text x="1364.0" y="673.0" font-size="19.6" fill="#f0f0f0" textLength="48.5" lengthAdjust="spacingAndGlyphs">0,2004</text>
<text x="1441.0" y="673.0" font-size="19.6" fill="#f0f0f0" textLength="48.5" lengthAdjust="spacingAndGlyphs">0,3150</text>
<text x="1509.5" y="673.0" font-size="19.6" fill="#f0f0f0" textLength="48.5" lengthAdjust="spacingAndGlyphs">0,4270</text>
<text x="1586.5" y="673.0" font-size="19.6" fill="#f0f0f0" textLength="48.5" lengthAdjust="spacingAndGlyphs">0,2967</text>
<text x="1006.9" y="708.6" font-size="19.6" fill="#f0f0f0" textLength="55.3" lengthAdjust="spacingAndGlyphs">y: CIE31</text>
<text x="1076.0" y="708.6" font-size="19.6" fill="#f0f0f0" textLength="48.5" lengthAdjust="spacingAndGlyphs">0,3170</text>
<text x="1152.5" y="708.6" font-size="19.6" fill="#f0f0f0" textLength="48.5" lengthAdjust="spacingAndGlyphs">0,3263</text>
<text x="1220.0" y="708.6" font-size="19.6" fill="#f0f0f0" textLength="48.5" lengthAdjust="spacingAndGlyphs">0,6836</text>
<text x="1296.5" y="708.6" font-size="19.6" fill="#f0f0f0" textLength="48.5" lengthAdjust="spacingAndGlyphs">0,0689</text>
<text x="1364.0" y="708.6" font-size="19.6" fill="#f0f0f0" textLength="48.5" lengthAdjust="spacingAndGlyphs">0,3195</text>
<text x="1441.0" y="708.6" font-size="19.6" fill="#f0f0f0" textLength="48.5" lengthAdjust="spacingAndGlyphs">0,1490</text>
<text x="1509.5" y="708.6" font-size="19.6" fill="#f0f0f0" textLength="48.5" lengthAdjust="spacingAndGlyphs">0,5423</text>
<text x="1586.5" y="708.6" font-size="19.6" fill="#f0f0f0" textLength="48.5" lengthAdjust="spacingAndGlyphs">0,3132</text>
<text x="1006.9" y="743.2" font-size="19.6" fill="#f0f0f0" textLength="8.0" lengthAdjust="spacingAndGlyphs">Y</text>
<text x="1076.0" y="743.2" font-size="19.6" fill="#f0f0f0" textLength="66.5" lengthAdjust="spacingAndGlyphs">243,4429</text>
<text x="1152.5" y="743.2" font-size="19.6" fill="#f0f0f0" textLength="57.0" lengthAdjust="spacingAndGlyphs">54,3795</text>
<text x="1220.0" y="743.2" font-size="19.6" fill="#f0f0f0" textLength="66.5" lengthAdjust="spacingAndGlyphs">178,6908</text>
<text x="1296.5" y="743.2" font-size="19.6" fill="#f0f0f0" textLength="57.0" lengthAdjust="spacingAndGlyphs">26,0484</text>
<text x="1364.0" y="743.2" font-size="19.6" fill="#f0f0f0" textLength="66.5" lengthAdjust="spacingAndGlyphs">197,6890</text>
<text x="1441.0" y="743.2" font-size="19.6" fill="#f0f0f0" textLength="57.0" lengthAdjust="spacingAndGlyphs">79,3536</text>
<text x="1509.5" y="743.2" font-size="19.6" fill="#f0f0f0" textLength="66.5" lengthAdjust="spacingAndGlyphs">221,0772</text>
<text x="1586.5" y="743.2" font-size="19.6" fill="#f0f0f0" textLength="66.5" lengthAdjust="spacingAndGlyphs">469,2000</text>
<text x="1006.9" y="777.8" font-size="19.6" fill="#f0f0f0" textLength="58.3" lengthAdjust="spacingAndGlyphs">Target Y</text>
<text x="1076.0" y="777.8" font-size="19.6" fill="#f0f0f0" textLength="66.5" lengthAdjust="spacingAndGlyphs">243,4429</text>
<text x="1152.5" y="777.8" font-size="19.6" fill="#f0f0f0" textLength="57.0" lengthAdjust="spacingAndGlyphs">72,3903</text>
<text x="1220.0" y="777.8" font-size="19.6" fill="#f0f0f0" textLength="66.5" lengthAdjust="spacingAndGlyphs">152,7250</text>
<text x="1296.5" y="777.8" font-size="19.6" fill="#f0f0f0" textLength="57.0" lengthAdjust="spacingAndGlyphs">18,3275</text>
<text x="1364.0" y="777.8" font-size="19.6" fill="#f0f0f0" textLength="66.5" lengthAdjust="spacingAndGlyphs">171,0525</text>
<text x="1441.0" y="777.8" font-size="19.6" fill="#f0f0f0" textLength="57.0" lengthAdjust="spacingAndGlyphs">90,7179</text>
<text x="1509.5" y="777.8" font-size="19.6" fill="#f0f0f0" textLength="66.5" lengthAdjust="spacingAndGlyphs">225,1154</text>
<text x="1586.5" y="777.8" font-size="19.6" fill="#f0f0f0" textLength="66.5" lengthAdjust="spacingAndGlyphs">469,2000</text>
<text x="1006.9" y="812.6" font-size="19.6" fill="#f0f0f0" textLength="58.0" lengthAdjust="spacingAndGlyphs">ΔE 2000</text>
<text x="1076.0" y="812.6" font-size="19.6" fill="#f0f0f0" textLength="48.5" lengthAdjust="spacingAndGlyphs">5,3372</text>
<text x="1152.5" y="812.6" font-size="19.6" fill="#f0f0f0" textLength="48.5" lengthAdjust="spacingAndGlyphs">6,1399</text>
<text x="1220.0" y="812.6" font-size="19.6" fill="#f0f0f0" textLength="48.5" lengthAdjust="spacingAndGlyphs">6,9391</text>
<text x="1296.5" y="812.6" font-size="19.6" fill="#f0f0f0" textLength="48.5" lengthAdjust="spacingAndGlyphs">3,9353</text>
<text x="1364.0" y="812.6" font-size="19.6" fill="#f0f0f0" textLength="48.5" lengthAdjust="spacingAndGlyphs">5,5330</text>
<text x="1441.0" y="812.6" font-size="19.6" fill="#f0f0f0" textLength="48.5" lengthAdjust="spacingAndGlyphs">4,9763</text>
<text x="1509.5" y="812.6" font-size="19.6" fill="#f0f0f0" textLength="48.5" lengthAdjust="spacingAndGlyphs">2,9463</text>
<text x="1586.5" y="812.6" font-size="19.6" fill="#f0f0f0" textLength="48.5" lengthAdjust="spacingAndGlyphs">7,6400</text>
</g>
<rect x="1002" y="801" width="598" height="22" fill="#4a4a4a"/>
<rect x="1002.5" y="801.5" width="597" height="21" rx="3" fill="#5a5a5a" stroke="#6e6e6e"/>
<rect x="1020" y="804" width="511" height="16" rx="8" fill="#414141"/>
<rect x="1003.5" y="803" width="14" height="18" rx="2.5" fill="#8c8c8c" stroke="#a0a0a0" stroke-width="0.8"/>
<path d="M1013.5,806.5 v11 l-6,-5.5 Z" fill="#404040"/>
<rect x="1584.5" y="803" width="14" height="18" rx="2.5" fill="#8c8c8c" stroke="#a0a0a0" stroke-width="0.8"/>
<path d="M1588.5,806.5 v11 l6,-5.5 Z" fill="#404040"/>
<rect x="1601.5" y="649.5" width="15" height="151" rx="3" fill="#5a5a5a" stroke="#6e6e6e"/>
<rect x="1603.5" y="673" width="11" height="83" rx="5.5" fill="#414141"/>
<rect x="1602.5" y="651" width="13" height="18" rx="2.5" fill="#8c8c8c" stroke="#a0a0a0" stroke-width="0.8"/>
<path d="M1604,664 h10 l-5,-6 Z" fill="#404040"/>
<rect x="1602.5" y="782" width="13" height="18" rx="2.5" fill="#8c8c8c" stroke="#a0a0a0" stroke-width="0.8"/>
<path d="M1604,787 h10 l-5,6 Z" fill="#404040"/>
<path d="M-1.7,905 V838 a5,5 0 0 1 5,-5 H148.8 a5,5 0 0 1 5,5 V905 Z" fill="url(#bb)"/>
<rect x="4.7" y="839" width="143" height="45.2" rx="4.5" fill="#bebebe"/>
<rect x="5.3" y="839.6" width="141.8" height="44" rx="4" fill="none" stroke="#000" stroke-opacity="0.18" stroke-width="1.2"/>
<text x="75.8" y="902.8" font-size="13.2" fill="#2a2a2a" text-anchor="middle" textLength="35.6" lengthAdjust="spacingAndGlyphs" font-weight="bold">White</text>
<path d="M156.3,905 V838 a5,5 0 0 1 5,-5 H306.8 a5,5 0 0 1 5,5 V905 Z" fill="url(#bb)"/>
<rect x="162.7" y="839" width="143" height="45.2" rx="4.5" fill="#c00000"/>
<rect x="163.3" y="839.6" width="141.8" height="44" rx="4" fill="none" stroke="#000" stroke-opacity="0.18" stroke-width="1.2"/>
<text x="233.8" y="902.8" font-size="13.2" fill="#2a2a2a" text-anchor="middle" textLength="24.7" lengthAdjust="spacingAndGlyphs" font-weight="bold">Red</text>
<path d="M314.3,905 V838 a5,5 0 0 1 5,-5 H464.8 a5,5 0 0 1 5,5 V905 Z" fill="url(#bb)"/>
<rect x="320.7" y="839" width="143" height="45.2" rx="4.5" fill="#00c000"/>
<rect x="321.3" y="839.6" width="141.8" height="44" rx="4" fill="none" stroke="#000" stroke-opacity="0.18" stroke-width="1.2"/>
<text x="391.8" y="902.8" font-size="13.2" fill="#2a2a2a" text-anchor="middle" textLength="37.8" lengthAdjust="spacingAndGlyphs" font-weight="bold">Green</text>
<path d="M472.3,905 V838 a5,5 0 0 1 5,-5 H622.8 a5,5 0 0 1 5,5 V905 Z" fill="url(#bb)"/>
<rect x="478.7" y="839" width="143" height="45.2" rx="4.5" fill="#0000c0"/>
<rect x="479.3" y="839.6" width="141.8" height="44" rx="4" fill="none" stroke="#000" stroke-opacity="0.18" stroke-width="1.2"/>
<text x="549.8" y="902.8" font-size="13.2" fill="#2a2a2a" text-anchor="middle" textLength="28.3" lengthAdjust="spacingAndGlyphs" font-weight="bold">Blue</text>
<path d="M630.3,905 V838 a5,5 0 0 1 5,-5 H780.8 a5,5 0 0 1 5,5 V905 Z" fill="url(#bb)"/>
<rect x="636.7" y="839" width="143" height="45.2" rx="4.5" fill="#00c0c0"/>
<rect x="637.3" y="839.6" width="141.8" height="44" rx="4" fill="none" stroke="#000" stroke-opacity="0.18" stroke-width="1.2"/>
<text x="707.8" y="902.8" font-size="13.2" fill="#2a2a2a" text-anchor="middle" textLength="32.0" lengthAdjust="spacingAndGlyphs" font-weight="bold">Cyan</text>
<path d="M788.3,905 V838 a5,5 0 0 1 5,-5 H938.8 a5,5 0 0 1 5,5 V905 Z" fill="url(#bb)"/>
<rect x="794.7" y="839" width="143" height="45.2" rx="4.5" fill="#c000c0"/>
<rect x="795.3" y="839.6" width="141.8" height="44" rx="4" fill="none" stroke="#000" stroke-opacity="0.18" stroke-width="1.2"/>
<text x="865.8" y="902.8" font-size="13.2" fill="#2a2a2a" text-anchor="middle" textLength="53.0" lengthAdjust="spacingAndGlyphs" font-weight="bold">Magenta</text>
<path d="M946.3,905 V838 a5,5 0 0 1 5,-5 H1096.8 a5,5 0 0 1 5,5 V905 Z" fill="url(#bb)"/>
<rect x="952.7" y="839" width="143" height="45.2" rx="4.5" fill="#c0c000"/>
<rect x="953.3" y="839.6" width="141.8" height="44" rx="4" fill="none" stroke="#000" stroke-opacity="0.18" stroke-width="1.2"/>
<text x="1023.8" y="902.8" font-size="13.2" fill="#2a2a2a" text-anchor="middle" textLength="40.7" lengthAdjust="spacingAndGlyphs" font-weight="bold">Yellow</text>
<path d="M1104.3,905 V838 a5,5 0 0 1 5,-5 H1254.8 a5,5 0 0 1 5,5 V905 Z" fill="url(#bsel)"/>
<rect x="1110.7" y="839" width="143" height="45.2" rx="4.5" fill="#ffffff"/>
<text x="1181.8" y="902.8" font-size="13.2" fill="#fff" text-anchor="middle" textLength="34.1" lengthAdjust="spacingAndGlyphs" font-weight="bold">100W</text>
<path d="M1263,855 V837 a5,5 0 0 1 5,-5 H1323 V855 Z" fill="url(#cb0)"/>
<rect x="1263" y="856" width="60" height="49" fill="url(#cb3)"/>
<line x1="1263" y1="855.3" x2="1323" y2="855.3" stroke="#3a3a3a" stroke-width="1.2"/>
<circle cx="1293.6" cy="844.2" r="9.3" fill="url(#cc)"/>
<path d="M1288.2,846 h10.8 l-5.4,-6.4 Z" fill="#2c2c2c"/>
<rect x="1274.8" y="864.3" width="36.5" height="36" rx="5" fill="url(#stp)" stroke="#1e1e1e" stroke-width="2.6"/>
<rect x="1285" y="874.2" width="17" height="16.7" fill="#000"/>
<rect x="1324" y="832.2" width="57.7" height="37.8" fill="url(#cb1)"/>
<circle cx="1352.8" cy="851.2" r="12.4" fill="url(#cc)"/>
<rect x="1383" y="832.2" width="55" height="37.8" fill="url(#cb1)"/>
<circle cx="1410.5" cy="851.2" r="12.4" fill="url(#cc)"/>
<rect x="1439.3" y="832.2" width="55.3" height="37.8" fill="url(#cb1)"/>
<circle cx="1466.9" cy="851.2" r="12.4" fill="url(#cc)"/>
<rect x="1495.9" y="832.2" width="54.8" height="37.8" fill="url(#cb1)"/>
<circle cx="1523.3" cy="851.2" r="12.4" fill="url(#cc)"/>
<rect x="1552" y="832.2" width="54" height="37.8" fill="url(#cb1)"/>
<circle cx="1579.0" cy="851.2" r="12.4" fill="url(#cc)"/>
<rect x="1348.6" y="846.7" width="9.4" height="9" fill="#333"/>
<path d="M1407,846.2 v12.2 l10.4,-6.1 Z" fill="#333"/>
<path d="M1463.7,846.4 h-3 v10 h3 M1470.1,846.4 h3 v10 h-3" fill="none" stroke="#333" stroke-width="2.4"/>
<path d="M1464.3,851.4 h1.8 M1467.7,851.4 h1.8" stroke="#333" stroke-width="2.2"/>
<path d="M1523.2,851.3 c2.2,-4.6 7.4,-4.6 7.4,0 c0,4.6 -5.2,4.6 -7.4,0 c-2.2,-4.6 -7.4,-4.6 -7.4,0 c0,4.6 5.2,4.6 7.4,0 Z" fill="none" stroke="#333" stroke-width="2.5"/>
<path d="M1573.7,849.8 a6,6 0 0 1 10.6,-2.2 M1585.3,852.8 a6,6 0 0 1 -10.6,2.2" fill="none" stroke="#333" stroke-width="2.7"/>
<path d="M1585.8,844.2 v5.4 h-5.4 Z M1573.2,858.4 v-5.4 h5.4 Z" fill="#333"/>
<path d="M1324,905 V876 a5,5 0 0 1 5,-5 H1494.3 V905 Z" fill="url(#cb2)"/>
<rect x="1495.9" y="871" width="165" height="34" fill="url(#cb2)"/>
<circle cx="1363.3" cy="890" r="12.4" fill="url(#cc)"/>
<circle cx="1629.5" cy="890" r="12.4" fill="url(#cc)"/>
<path d="M1362.3,884 l-5.2,6 l5.2,6 M1368.6,884 l-5.2,6 l5.2,6" fill="none" stroke="#3a3a3a" stroke-width="2.2"/>
<path d="M1624.2,884 l5.2,6 l-5.2,6 M1630.5,884 l5.2,6 l-5.2,6" fill="none" stroke="#3a3a3a" stroke-width="2.2"/>
<text x="1395.6" y="899.2" font-size="25.2" fill="#2e2e2e" textLength="63.5" lengthAdjust="spacingAndGlyphs" stroke="#2e2e2e" stroke-width="0.7">Back</text>
<text x="1529.2" y="899.2" font-size="25.2" fill="#2e2e2e" textLength="65.0" lengthAdjust="spacingAndGlyphs" stroke="#2e2e2e" stroke-width="0.7">Next</text>
<path d="M1637.9,850.9 L1639.6,835.7 L1638.7,834.3 L1632.7,834.3 L1631.8,835.7 L1633.5,850.9 Z M1636.8,849.0 L1624.5,839.9 L1622.8,840.0 L1619.8,845.2 L1620.6,846.7 L1634.6,852.8 Z M1634.6,849.0 L1620.6,855.1 L1619.8,856.6 L1622.8,861.8 L1624.5,861.9 L1636.8,852.8 Z M1633.5,850.9 L1631.8,866.1 L1632.7,867.5 L1638.7,867.5 L1639.6,866.1 L1637.9,850.9 Z M1634.6,852.8 L1646.9,861.9 L1648.6,861.8 L1651.6,856.6 L1650.8,855.1 L1636.8,849.0 Z M1636.8,852.8 L1650.8,846.7 L1651.6,845.2 L1648.6,840.0 L1646.9,839.9 L1634.6,849.0 Z " fill="#000" fill-opacity="0.45"/>
<path d="M1636.7,849.3 L1638.4,834.1 L1637.5,832.7 L1631.5,832.7 L1630.6,834.1 L1632.3,849.3 Z M1635.6,847.4 L1623.3,838.3 L1621.6,838.4 L1618.6,843.6 L1619.4,845.1 L1633.4,851.2 Z M1633.4,847.4 L1619.4,853.5 L1618.6,855.0 L1621.6,860.2 L1623.3,860.3 L1635.6,851.2 Z M1632.3,849.3 L1630.6,864.5 L1631.5,865.9 L1637.5,865.9 L1638.4,864.5 L1636.7,849.3 Z M1633.4,851.2 L1645.7,860.3 L1647.4,860.2 L1650.4,855.0 L1649.6,853.5 L1635.6,847.4 Z M1635.6,851.2 L1649.6,845.1 L1650.4,843.6 L1647.4,838.4 L1645.7,838.3 L1633.4,847.4 Z " fill="#e81212"/>
<circle cx="1634.5" cy="849.3" r="3.2" fill="#e81212"/>
</svg>
</body></html>
